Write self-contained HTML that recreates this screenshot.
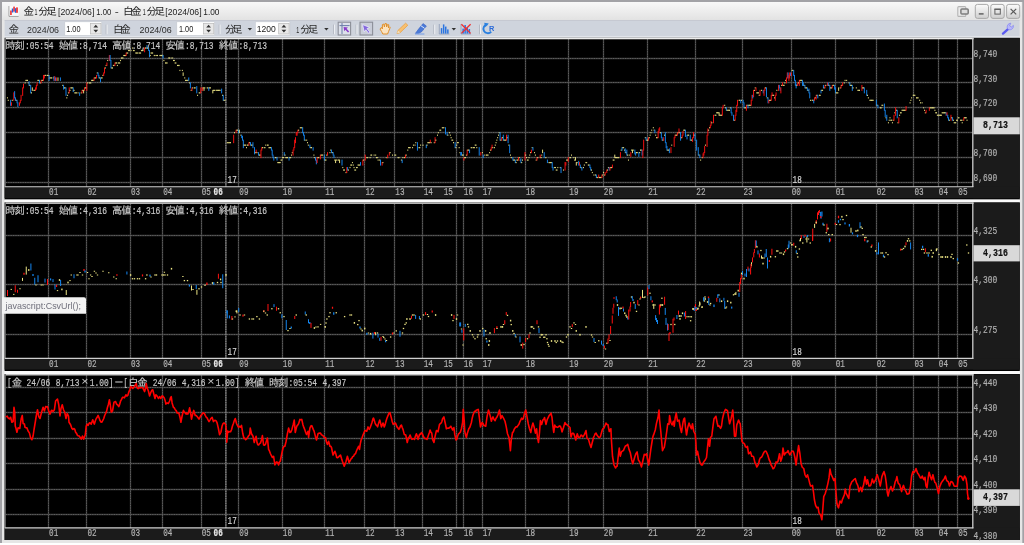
<!DOCTYPE html>
<html lang="ja"><head><meta charset="utf-8"><title>金1分足[2024/06]1.00 - 白金1分足[2024/06]1.00</title>
<style>html,body{margin:0;padding:0;background:#fff;overflow:hidden}svg{display:block;will-change:transform;filter:blur(0.32px)}text{white-space:pre}</style></head>
<body><svg width="1024" height="545" viewBox="0 0 1024 545">
<rect x="0" y="0" width="1024" height="545" fill="#ffffff"/>
<rect x="0" y="0" width="1024" height="543" fill="#a2a2a6"/>
<rect x="2" y="2" width="1020.3" height="541" fill="#e6e6e6"/>
<defs><linearGradient id="tg" x1="0" y1="0" x2="0" y2="1"><stop offset="0" stop-color="#f8f8f8"/><stop offset="1" stop-color="#e2e2e2"/></linearGradient><linearGradient id="bg" x1="0" y1="0" x2="0" y2="1"><stop offset="0" stop-color="#fbfbfb"/><stop offset="1" stop-color="#cecece"/></linearGradient></defs>
<rect x="2" y="2" width="1019.5" height="18.3" fill="url(#tg)"/>
<rect x="4.6" y="20.3" width="1015" height="16" fill="#cfd4dd"/>
<rect x="4.6" y="36.1" width="1015" height="2.3" fill="#e2e5ea"/>
<rect x="4.6" y="20.1" width="1015" height="0.8" fill="#c2c6ce"/>
<g><path d="M9 6 V16.3 H18.6" fill="none" stroke="#9a9a9a" stroke-width="1"/><rect x="9.6" y="6" width="9" height="9.8" fill="#fafafa"/><rect x="10.2" y="10.5" width="1.5" height="4.5" fill="#f02020"/><rect x="11.8" y="8.5" width="1.5" height="4" fill="#2060e0"/><rect x="13.3" y="6.6" width="1.5" height="5" fill="#f02020"/><rect x="14.8" y="8.2" width="1.4" height="4.6" fill="#2060e0"/><rect x="16.2" y="7.4" width="1.6" height="5.4" fill="#f02020"/></g>
<text x="23.6" y="14.8" font-size="10.6" fill="#1c1c1c" style="font-family:'Liberation Sans','IPAGothic',sans-serif" textLength="9.6" lengthAdjust="spacing">金</text>
<text x="34.6" y="14.8" font-size="9.8" fill="#1c1c1c" style="font-family:'Liberation Sans','IPAGothic',sans-serif" textLength="3" lengthAdjust="spacingAndGlyphs">1</text>
<text x="38.2" y="14.8" font-size="10.6" fill="#1c1c1c" style="font-family:'Liberation Sans','IPAGothic',sans-serif" textLength="18.6" lengthAdjust="spacing">分足</text>
<text x="58" y="14.8" font-size="9.8" fill="#1c1c1c" style="font-family:'Liberation Sans','IPAGothic',sans-serif" textLength="36.3" lengthAdjust="spacingAndGlyphs">[2024/06]</text>
<text x="96.3" y="14.8" font-size="9.8" fill="#1c1c1c" style="font-family:'Liberation Sans','IPAGothic',sans-serif" textLength="15" lengthAdjust="spacingAndGlyphs">1.00</text>
<text x="114.8" y="14.8" font-size="9.8" fill="#1c1c1c" style="font-family:'Liberation Sans','IPAGothic',sans-serif" textLength="4" lengthAdjust="spacingAndGlyphs">-</text>
<text x="123" y="14.8" font-size="10.6" fill="#1c1c1c" style="font-family:'Liberation Sans','IPAGothic',sans-serif" textLength="18.6" lengthAdjust="spacing">白金</text>
<text x="142.8" y="14.8" font-size="9.8" fill="#1c1c1c" style="font-family:'Liberation Sans','IPAGothic',sans-serif" textLength="3" lengthAdjust="spacingAndGlyphs">1</text>
<text x="146.4" y="14.8" font-size="10.6" fill="#1c1c1c" style="font-family:'Liberation Sans','IPAGothic',sans-serif" textLength="18.6" lengthAdjust="spacing">分足</text>
<text x="165.3" y="14.8" font-size="9.8" fill="#1c1c1c" style="font-family:'Liberation Sans','IPAGothic',sans-serif" textLength="36.3" lengthAdjust="spacingAndGlyphs">[2024/06]</text>
<text x="203.3" y="14.8" font-size="9.8" fill="#1c1c1c" style="font-family:'Liberation Sans','IPAGothic',sans-serif" textLength="16.2" lengthAdjust="spacingAndGlyphs">1.00</text>
<rect x="975.3" y="4.4" width="13.200000000000045" height="14" rx="2.2" fill="url(#bg)" stroke="#a8a8a8" stroke-width="1"/>
<rect x="990.8" y="4.4" width="13.400000000000091" height="14" rx="2.2" fill="url(#bg)" stroke="#a8a8a8" stroke-width="1"/>
<rect x="1006.6" y="4.4" width="13.100000000000023" height="14" rx="2.2" fill="url(#bg)" stroke="#a8a8a8" stroke-width="1"/>
<rect x="978.8" y="13.2" width="4.8" height="1.4" fill="#5a5a5a"/>
<rect x="994.9" y="9.3" width="5.4" height="4.8" fill="none" stroke="#606060" stroke-width="1"/><rect x="994.4" y="8.6" width="6.4" height="1.3" fill="#606060"/>
<path d="M1010.6 8.8 L1016.2 14.4 M1016.2 8.8 L1010.6 14.4" stroke="#585858" stroke-width="1.2" fill="none"/>
<rect x="957.8" y="6.6" width="8" height="9.8" rx="1" fill="#ececec" stroke="#b4b4b4" stroke-width="1.1"/>
<rect x="960.9" y="9.1" width="7.3" height="5" rx="1" fill="#dcdcdc" stroke="#7c7c7c" stroke-width="1.5"/>
<text x="8.4" y="32.5" font-size="10.6" fill="#2c2c2c" style="font-family:'Liberation Sans','IPAGothic',sans-serif" textLength="9.6" lengthAdjust="spacing">金</text>
<text x="27" y="32.5" font-size="9.8" fill="#2c2c2c" style="font-family:'Liberation Sans','IPAGothic',sans-serif" textLength="32" lengthAdjust="spacingAndGlyphs">2024/06</text>
<rect x="64.8" y="21.8" width="37.0" height="13.6" fill="#ffffff" stroke="#c4c8d0" stroke-width="0.6"/>
<text x="66.2" y="31.9" font-size="9.8" fill="#202020" style="font-family:'Liberation Sans','IPAGothic',sans-serif" textLength="14.3" lengthAdjust="spacingAndGlyphs">1.00</text>
<rect x="90.6" y="23.4" width="10.4" height="10.6" fill="#e8e8e8" stroke="#b8b8b8" stroke-width="0.7"/>
<path d="M93.39999999999999 27.6 L95.8 24.8 L98.2 27.6 Z M93.39999999999999 29.8 L95.8 32.6 L98.2 29.8 Z" fill="#303030"/>
<rect x="105.7" y="24.6" width="0.9" height="9.6" fill="#aeb3bd"/><rect x="106.6" y="24.6" width="0.9" height="9.6" fill="#f4f6f8"/>
<text x="113" y="32.5" font-size="10.6" fill="#2c2c2c" style="font-family:'Liberation Sans','IPAGothic',sans-serif" textLength="17.8" lengthAdjust="spacing">白金</text>
<text x="139.5" y="32.5" font-size="9.8" fill="#2c2c2c" style="font-family:'Liberation Sans','IPAGothic',sans-serif" textLength="32.2" lengthAdjust="spacingAndGlyphs">2024/06</text>
<rect x="176.8" y="21.8" width="37.79999999999998" height="13.6" fill="#ffffff" stroke="#c4c8d0" stroke-width="0.6"/>
<text x="179" y="31.9" font-size="9.8" fill="#202020" style="font-family:'Liberation Sans','IPAGothic',sans-serif" textLength="14.2" lengthAdjust="spacingAndGlyphs">1.00</text>
<rect x="203.4" y="23.4" width="10.4" height="10.6" fill="#e8e8e8" stroke="#b8b8b8" stroke-width="0.7"/>
<path d="M206.2 27.6 L208.6 24.8 L211.0 27.6 Z M206.2 29.8 L208.6 32.6 L211.0 29.8 Z" fill="#303030"/>
<rect x="218.70000000000002" y="24.6" width="0.9" height="9.6" fill="#aeb3bd"/><rect x="219.60000000000002" y="24.6" width="0.9" height="9.6" fill="#f4f6f8"/>
<text x="225" y="32.5" font-size="10.6" fill="#2c2c2c" style="font-family:'Liberation Sans','IPAGothic',sans-serif" textLength="17.6" lengthAdjust="spacing">分足</text>
<path d="M247.7 28 L252.1 28 L249.89999999999998 30.6 Z" fill="#303030"/>
<rect x="255.3" y="21.8" width="34.599999999999966" height="13.6" fill="#ffffff" stroke="#c4c8d0" stroke-width="0.6"/>
<text x="256.8" y="31.9" font-size="9.8" fill="#202020" style="font-family:'Liberation Sans','IPAGothic',sans-serif" textLength="19" lengthAdjust="spacingAndGlyphs">1200</text>
<rect x="278.7" y="23.4" width="10.4" height="10.6" fill="#e8e8e8" stroke="#b8b8b8" stroke-width="0.7"/>
<path d="M281.5 27.6 L283.9 24.8 L286.29999999999995 27.6 Z M281.5 29.8 L283.9 32.6 L286.29999999999995 29.8 Z" fill="#303030"/>
<text x="296.2" y="32.5" font-size="9.8" fill="#2c2c2c" style="font-family:'Liberation Sans','IPAGothic',sans-serif" textLength="3" lengthAdjust="spacingAndGlyphs">1</text>
<text x="300.3" y="32.5" font-size="10.6" fill="#2c2c2c" style="font-family:'Liberation Sans','IPAGothic',sans-serif" textLength="18" lengthAdjust="spacing">分足</text>
<path d="M324.2 28 L328.59999999999997 28 L326.4 30.6 Z" fill="#303030"/>
<rect x="333.0" y="24.6" width="0.9" height="9.6" fill="#aeb3bd"/><rect x="333.90000000000003" y="24.6" width="0.9" height="9.6" fill="#f4f6f8"/>
<rect x="338.2" y="22.2" width="12.4" height="12.8" fill="#dde1ea" stroke="#8c8f98" stroke-width="1.1"/>
<path d="M339.5 25.6 H349.6 M342 23 V34" stroke="#6a7ca8" stroke-width="1" fill="none"/>
<path d="M343.6 27 L348 27.6 L346.6 28.8 L349.2 31.6 L348 32.6 L345.4 29.8 L344.2 31.2 Z" fill="#8a3cc8"/>
<rect x="355.59999999999997" y="24.6" width="0.9" height="9.6" fill="#aeb3bd"/><rect x="356.5" y="24.6" width="0.9" height="9.6" fill="#f4f6f8"/>
<rect x="360" y="22.2" width="12.6" height="12.8" fill="#c9cdd8" stroke="#8c8f98" stroke-width="1.1"/>
<path d="M362.6 24.6 L369.6 27.4 L367 28.6 L370 32.2 L368.6 33.2 L365.8 29.8 L364.2 31.8 Z" fill="#8468dc" stroke="#f0f0ff" stroke-width="0.7"/>
<path d="M380 29 L381.4 27.4 L382.4 29 L382.4 24.6 L383.8 24 L384.4 27 L385 23.6 L386.4 23.6 L386.6 27 L387.6 24.4 L388.8 24.8 L388.4 28 L389.6 26.8 L390.2 27.6 L388.6 31.4 L387.6 34 L382.8 34 L381.6 31.6 Z" fill="#fbe3c0" stroke="#e0902c" stroke-width="1"/>
<path d="M397 33.6 L398 30.4 L405.6 23.2 L407.8 25.2 L400.2 32.6 Z" fill="#f8c070" stroke="#e8a040" stroke-width="0.8"/><path d="M397 33.6 L398 30.4 L400.2 32.6 Z" fill="#f0e0c0"/>
<path d="M415.4 33.4 L418.2 29.6 L423 23.6 L426.4 26 L421.8 31.6 L418.6 33.6 Z" fill="#4a7ad8" stroke="#3a62c0" stroke-width="0.6"/><path d="M415 34 H424.4" stroke="#7aa0e8" stroke-width="1.1"/><path d="M421 25.8 L424.6 28.4" stroke="#dfe8fa" stroke-width="1"/>
<rect x="433.4" y="24.6" width="0.9" height="9.6" fill="#aeb3bd"/><rect x="434.3" y="24.6" width="0.9" height="9.6" fill="#f4f6f8"/>
<path d="M439.3 24 V34 H449.4" stroke="#8a9ab8" stroke-width="0.8" fill="none"/>
<rect x="440.8" y="28.1" width="1.5" height="5.5" fill="#2a74e0"/>
<rect x="442.9" y="24.400000000000002" width="1.5" height="9.2" fill="#2a74e0"/>
<rect x="445" y="26.6" width="1.5" height="7" fill="#2a74e0"/>
<rect x="447.1" y="29.400000000000002" width="1.5" height="4.2" fill="#2a74e0"/>
<path d="M451.6 28 L456.0 28 L453.8 30.6 Z" fill="#303030"/>
<path d="M461 24 V34 H471" stroke="#8a9ab8" stroke-width="0.8" fill="none"/>
<rect x="462.4" y="28.6" width="1.5" height="5" fill="#2a74e0"/>
<rect x="464.4" y="25.0" width="1.5" height="8.6" fill="#2a74e0"/>
<rect x="466.5" y="27.0" width="1.5" height="6.6" fill="#2a74e0"/>
<rect x="468.6" y="29.0" width="1.5" height="4.6" fill="#2a74e0"/>
<path d="M461.4 24.2 L470.6 33.4 M470.6 24.2 L461.4 33.4" stroke="#f03030" stroke-width="1.3" fill="none"/>
<rect x="479.2" y="24.6" width="0.9" height="9.6" fill="#aeb3bd"/><rect x="480.1" y="24.6" width="0.9" height="9.6" fill="#f4f6f8"/>
<path d="M491.2 31.6 A4.4 4.4 0 1 1 487.4 24.4" fill="none" stroke="#2a80e0" stroke-width="1.9"/><path d="M484.2 22.8 L488.8 23.6 L485.4 27.2 Z" fill="#2a80e0"/>
<text x="489" y="31.4" font-size="7.4" font-weight="bold" fill="#2a6ad8" style="font-family:'Liberation Sans','IPAGothic',sans-serif">R</text>
<path d="M1003 33.6 L1008.6 28.6" stroke="#5a5af0" stroke-width="2.4" stroke-linecap="round" fill="none"/><path d="M1007.6 28.8 C1006.4 26 1008 23.4 1010.8 23.2 L1009.6 25.8 L1011.4 27 L1013.4 25.4 C1013.8 28.4 1011.2 30.4 1008.6 29.6 Z" fill="#b8b8fa" stroke="#8080f0" stroke-width="0.7"/>
<rect x="4.6" y="37.8" width="1015.1999999999999" height="161.79999999999998" fill="#000"/>
<rect x="973.2" y="38.099999999999994" width="46.59999999999991" height="160.09999999999997" fill="#1b1b1b"/>
<rect x="4.6" y="186.7" width="1015.1999999999999" height="11.5" fill="#1b1b1b"/>
<path d="M48.5 39.199999999999996 V186.7 M86.5 39.199999999999996 V186.7 M130.5 39.199999999999996 V186.7 M162.5 39.199999999999996 V186.7 M201.5 39.199999999999996 V186.7 M238.5 39.199999999999996 V186.7 M282.5 39.199999999999996 V186.7 M324.5 39.199999999999996 V186.7 M364.5 39.199999999999996 V186.7 M394.5 39.199999999999996 V186.7 M422.5 39.199999999999996 V186.7 M456.5 39.199999999999996 V186.7 M463.5 39.199999999999996 V186.7 M482.5 39.199999999999996 V186.7 M525.5 39.199999999999996 V186.7 M568.5 39.199999999999996 V186.7 M603.5 39.199999999999996 V186.7 M647.5 39.199999999999996 V186.7 M695.5 39.199999999999996 V186.7 M742.5 39.199999999999996 V186.7 M791.5 39.199999999999996 V186.7 M835.5 39.199999999999996 V186.7 M876.5 39.199999999999996 V186.7 M913.5 39.199999999999996 V186.7 M938.5 39.199999999999996 V186.7 M957.5 39.199999999999996 V186.7 M5.8 58.5 H972.6 M5.8 82.5 H972.6 M5.8 107.5 H972.6 M5.8 132.5 H972.6 M5.8 157.5 H972.6 M5.8 182.5 H972.6" stroke="#3c3c3c" stroke-width="1.35" fill="none"/>
<path d="M48.5 39.199999999999996 V186.7 M86.5 39.199999999999996 V186.7 M130.5 39.199999999999996 V186.7 M162.5 39.199999999999996 V186.7 M201.5 39.199999999999996 V186.7 M238.5 39.199999999999996 V186.7 M282.5 39.199999999999996 V186.7 M324.5 39.199999999999996 V186.7 M364.5 39.199999999999996 V186.7 M394.5 39.199999999999996 V186.7 M422.5 39.199999999999996 V186.7 M456.5 39.199999999999996 V186.7 M463.5 39.199999999999996 V186.7 M482.5 39.199999999999996 V186.7 M525.5 39.199999999999996 V186.7 M568.5 39.199999999999996 V186.7 M603.5 39.199999999999996 V186.7 M647.5 39.199999999999996 V186.7 M695.5 39.199999999999996 V186.7 M742.5 39.199999999999996 V186.7 M791.5 39.199999999999996 V186.7 M835.5 39.199999999999996 V186.7 M876.5 39.199999999999996 V186.7 M913.5 39.199999999999996 V186.7 M938.5 39.199999999999996 V186.7 M957.5 39.199999999999996 V186.7 M5.8 58.5 H972.6 M5.8 82.5 H972.6 M5.8 107.5 H972.6 M5.8 132.5 H972.6 M5.8 157.5 H972.6 M5.8 182.5 H972.6" stroke="#5e5e5e" stroke-width="1" stroke-dasharray="1.2 1.2" fill="none"/>
<path d="M225.9 39.199999999999996 V186.7" stroke="#4a4a4a" stroke-width="1.3" fill="none"/>
<path d="M225.9 39.199999999999996 V186.7" stroke="#9a9a9a" stroke-width="1" stroke-dasharray="1.6 0.8" fill="none"/>
<rect x="4.8" y="37.8" width="968.8000000000001" height="1.5" fill="#ececec"/>
<rect x="4.8" y="37.8" width="1.1" height="148.89999999999998" fill="#6a6a6a"/>
<path d="M972.8000000000001 37.8 V187.1" stroke="#cfcfcf" stroke-width="1.3" fill="none"/>
<path d="M4.8 186.7 H973.4000000000001" stroke="#cfcfcf" stroke-width="1.1" fill="none"/>
<text x="49.10" y="195.0" font-size="11.3" fill="#b4b4b4" stroke="#b4b4b4" stroke-width="0.2" style="font-family:'Liberation Mono','IPAGothic',monospace" textLength="9.20" lengthAdjust="spacingAndGlyphs">01</text>
<text x="87.50" y="195.0" font-size="11.3" fill="#b4b4b4" stroke="#b4b4b4" stroke-width="0.2" style="font-family:'Liberation Mono','IPAGothic',monospace" textLength="9.20" lengthAdjust="spacingAndGlyphs">02</text>
<text x="131.00" y="195.0" font-size="11.3" fill="#b4b4b4" stroke="#b4b4b4" stroke-width="0.2" style="font-family:'Liberation Mono','IPAGothic',monospace" textLength="9.20" lengthAdjust="spacingAndGlyphs">03</text>
<text x="163.20" y="195.0" font-size="11.3" fill="#b4b4b4" stroke="#b4b4b4" stroke-width="0.2" style="font-family:'Liberation Mono','IPAGothic',monospace" textLength="9.20" lengthAdjust="spacingAndGlyphs">04</text>
<text x="201.70" y="195.0" font-size="11.3" fill="#b4b4b4" stroke="#b4b4b4" stroke-width="0.2" style="font-family:'Liberation Mono','IPAGothic',monospace" textLength="9.20" lengthAdjust="spacingAndGlyphs">05</text>
<text x="239.30" y="195.0" font-size="11.3" fill="#b4b4b4" stroke="#b4b4b4" stroke-width="0.2" style="font-family:'Liberation Mono','IPAGothic',monospace" textLength="9.20" lengthAdjust="spacingAndGlyphs">09</text>
<text x="282.80" y="195.0" font-size="11.3" fill="#b4b4b4" stroke="#b4b4b4" stroke-width="0.2" style="font-family:'Liberation Mono','IPAGothic',monospace" textLength="9.20" lengthAdjust="spacingAndGlyphs">10</text>
<text x="325.20" y="195.0" font-size="11.3" fill="#b4b4b4" stroke="#b4b4b4" stroke-width="0.2" style="font-family:'Liberation Mono','IPAGothic',monospace" textLength="9.20" lengthAdjust="spacingAndGlyphs">11</text>
<text x="365.50" y="195.0" font-size="11.3" fill="#b4b4b4" stroke="#b4b4b4" stroke-width="0.2" style="font-family:'Liberation Mono','IPAGothic',monospace" textLength="9.20" lengthAdjust="spacingAndGlyphs">12</text>
<text x="395.30" y="195.0" font-size="11.3" fill="#b4b4b4" stroke="#b4b4b4" stroke-width="0.2" style="font-family:'Liberation Mono','IPAGothic',monospace" textLength="9.20" lengthAdjust="spacingAndGlyphs">13</text>
<text x="423.70" y="195.0" font-size="11.3" fill="#b4b4b4" stroke="#b4b4b4" stroke-width="0.2" style="font-family:'Liberation Mono','IPAGothic',monospace" textLength="9.20" lengthAdjust="spacingAndGlyphs">14</text>
<text x="443.70" y="195.0" font-size="11.3" fill="#b4b4b4" stroke="#b4b4b4" stroke-width="0.2" style="font-family:'Liberation Mono','IPAGothic',monospace" textLength="9.20" lengthAdjust="spacingAndGlyphs">15</text>
<text x="463.80" y="195.0" font-size="11.3" fill="#b4b4b4" stroke="#b4b4b4" stroke-width="0.2" style="font-family:'Liberation Mono','IPAGothic',monospace" textLength="9.20" lengthAdjust="spacingAndGlyphs">16</text>
<text x="482.70" y="195.0" font-size="11.3" fill="#b4b4b4" stroke="#b4b4b4" stroke-width="0.2" style="font-family:'Liberation Mono','IPAGothic',monospace" textLength="9.20" lengthAdjust="spacingAndGlyphs">17</text>
<text x="525.90" y="195.0" font-size="11.3" fill="#b4b4b4" stroke="#b4b4b4" stroke-width="0.2" style="font-family:'Liberation Mono','IPAGothic',monospace" textLength="9.20" lengthAdjust="spacingAndGlyphs">18</text>
<text x="569.30" y="195.0" font-size="11.3" fill="#b4b4b4" stroke="#b4b4b4" stroke-width="0.2" style="font-family:'Liberation Mono','IPAGothic',monospace" textLength="9.20" lengthAdjust="spacingAndGlyphs">19</text>
<text x="603.80" y="195.0" font-size="11.3" fill="#b4b4b4" stroke="#b4b4b4" stroke-width="0.2" style="font-family:'Liberation Mono','IPAGothic',monospace" textLength="9.20" lengthAdjust="spacingAndGlyphs">20</text>
<text x="648.30" y="195.0" font-size="11.3" fill="#b4b4b4" stroke="#b4b4b4" stroke-width="0.2" style="font-family:'Liberation Mono','IPAGothic',monospace" textLength="9.20" lengthAdjust="spacingAndGlyphs">21</text>
<text x="696.30" y="195.0" font-size="11.3" fill="#b4b4b4" stroke="#b4b4b4" stroke-width="0.2" style="font-family:'Liberation Mono','IPAGothic',monospace" textLength="9.20" lengthAdjust="spacingAndGlyphs">22</text>
<text x="743.50" y="195.0" font-size="11.3" fill="#b4b4b4" stroke="#b4b4b4" stroke-width="0.2" style="font-family:'Liberation Mono','IPAGothic',monospace" textLength="9.20" lengthAdjust="spacingAndGlyphs">23</text>
<text x="791.70" y="195.0" font-size="11.3" fill="#b4b4b4" stroke="#b4b4b4" stroke-width="0.2" style="font-family:'Liberation Mono','IPAGothic',monospace" textLength="9.20" lengthAdjust="spacingAndGlyphs">00</text>
<text x="835.70" y="195.0" font-size="11.3" fill="#b4b4b4" stroke="#b4b4b4" stroke-width="0.2" style="font-family:'Liberation Mono','IPAGothic',monospace" textLength="9.20" lengthAdjust="spacingAndGlyphs">01</text>
<text x="876.70" y="195.0" font-size="11.3" fill="#b4b4b4" stroke="#b4b4b4" stroke-width="0.2" style="font-family:'Liberation Mono','IPAGothic',monospace" textLength="9.20" lengthAdjust="spacingAndGlyphs">02</text>
<text x="914.50" y="195.0" font-size="11.3" fill="#b4b4b4" stroke="#b4b4b4" stroke-width="0.2" style="font-family:'Liberation Mono','IPAGothic',monospace" textLength="9.20" lengthAdjust="spacingAndGlyphs">03</text>
<text x="938.80" y="195.0" font-size="11.3" fill="#b4b4b4" stroke="#b4b4b4" stroke-width="0.2" style="font-family:'Liberation Mono','IPAGothic',monospace" textLength="9.20" lengthAdjust="spacingAndGlyphs">04</text>
<text x="958.30" y="195.0" font-size="11.3" fill="#b4b4b4" stroke="#b4b4b4" stroke-width="0.2" style="font-family:'Liberation Mono','IPAGothic',monospace" textLength="9.20" lengthAdjust="spacingAndGlyphs">05</text>
<text x="213.60" y="195.0" font-size="11.3" fill="#e8e8e8" stroke="#e8e8e8" stroke-width="0.2" font-weight="bold" style="font-family:'Liberation Mono','IPAGothic',monospace" textLength="9.20" lengthAdjust="spacingAndGlyphs">06</text>
<text x="227.60" y="182.9" font-size="11.3" fill="#d8d8d8" stroke="#d8d8d8" stroke-width="0.2" style="font-family:'Liberation Mono','IPAGothic',monospace" textLength="9.20" lengthAdjust="spacingAndGlyphs">17</text>
<text x="792.60" y="182.9" font-size="11.3" fill="#d8d8d8" stroke="#d8d8d8" stroke-width="0.2" style="font-family:'Liberation Mono','IPAGothic',monospace" textLength="9.20" lengthAdjust="spacingAndGlyphs">18</text>
<text x="973.60" y="56.6" font-size="11.3" fill="#b0b0b0" stroke="#b0b0b0" stroke-width="0.2" style="font-family:'Liberation Mono','IPAGothic',monospace" textLength="23.75" lengthAdjust="spacingAndGlyphs">8,740</text>
<text x="973.60" y="81.5" font-size="11.3" fill="#b0b0b0" stroke="#b0b0b0" stroke-width="0.2" style="font-family:'Liberation Mono','IPAGothic',monospace" textLength="23.75" lengthAdjust="spacingAndGlyphs">8,730</text>
<text x="973.60" y="106.39999999999999" font-size="11.3" fill="#b0b0b0" stroke="#b0b0b0" stroke-width="0.2" style="font-family:'Liberation Mono','IPAGothic',monospace" textLength="23.75" lengthAdjust="spacingAndGlyphs">8,720</text>
<text x="973.60" y="156.2" font-size="11.3" fill="#b0b0b0" stroke="#b0b0b0" stroke-width="0.2" style="font-family:'Liberation Mono','IPAGothic',monospace" textLength="23.75" lengthAdjust="spacingAndGlyphs">8,700</text>
<text x="973.60" y="181.1" font-size="11.3" fill="#b0b0b0" stroke="#b0b0b0" stroke-width="0.2" style="font-family:'Liberation Mono','IPAGothic',monospace" textLength="23.75" lengthAdjust="spacingAndGlyphs">8,690</text>
<rect x="973.5" y="117.3" width="46.29999999999991" height="17.000000000000014" fill="#d9d9d9"/>
<text x="983.10" y="127.89999999999999" font-size="10.8" fill="#101010" stroke="#101010" stroke-width="0.2" font-weight="bold" style="font-family:'Liberation Mono','IPAGothic',monospace" textLength="24.75" lengthAdjust="spacingAndGlyphs">8,713</text>
<text x="5.40" y="48.699999999999996" font-size="10.3" fill="#c8c8c8" stroke="#c8c8c8" stroke-width="0.15" style="font-family:'Liberation Mono','IPAGothic',monospace" textLength="19.40" lengthAdjust="spacing">時刻</text>
<text x="25.00" y="48.9" font-size="11.3" fill="#c8c8c8" stroke="#c8c8c8" stroke-width="0.2" style="font-family:'Liberation Mono','IPAGothic',monospace" textLength="28.60" lengthAdjust="spacingAndGlyphs">:05:54</text>
<text x="58.75" y="48.699999999999996" font-size="10.3" fill="#c8c8c8" stroke="#c8c8c8" stroke-width="0.15" style="font-family:'Liberation Mono','IPAGothic',monospace" textLength="19.40" lengthAdjust="spacing">始値</text>
<text x="78.35" y="48.9" font-size="11.3" fill="#c8c8c8" stroke="#c8c8c8" stroke-width="0.2" style="font-family:'Liberation Mono','IPAGothic',monospace" textLength="28.60" lengthAdjust="spacingAndGlyphs">:8,714</text>
<text x="112.10" y="48.699999999999996" font-size="10.3" fill="#c8c8c8" stroke="#c8c8c8" stroke-width="0.15" style="font-family:'Liberation Mono','IPAGothic',monospace" textLength="19.40" lengthAdjust="spacing">高値</text>
<text x="131.70" y="48.9" font-size="11.3" fill="#c8c8c8" stroke="#c8c8c8" stroke-width="0.2" style="font-family:'Liberation Mono','IPAGothic',monospace" textLength="28.60" lengthAdjust="spacingAndGlyphs">:8,714</text>
<text x="165.45" y="48.699999999999996" font-size="10.3" fill="#c8c8c8" stroke="#c8c8c8" stroke-width="0.15" style="font-family:'Liberation Mono','IPAGothic',monospace" textLength="19.40" lengthAdjust="spacing">安値</text>
<text x="185.05" y="48.9" font-size="11.3" fill="#c8c8c8" stroke="#c8c8c8" stroke-width="0.2" style="font-family:'Liberation Mono','IPAGothic',monospace" textLength="28.60" lengthAdjust="spacingAndGlyphs">:8,713</text>
<text x="218.80" y="48.699999999999996" font-size="10.3" fill="#c8c8c8" stroke="#c8c8c8" stroke-width="0.15" style="font-family:'Liberation Mono','IPAGothic',monospace" textLength="19.40" lengthAdjust="spacing">終値</text>
<text x="238.40" y="48.9" font-size="11.3" fill="#c8c8c8" stroke="#c8c8c8" stroke-width="0.2" style="font-family:'Liberation Mono','IPAGothic',monospace" textLength="28.60" lengthAdjust="spacingAndGlyphs">:8,713</text>
<rect x="4.6" y="199.5" width="1015.2" height="2.9" fill="#fafafa"/>
<rect x="4.6" y="202.4" width="1015.1999999999999" height="168.60000000000002" fill="#000"/>
<rect x="973.2" y="202.70000000000002" width="46.59999999999991" height="166.9" fill="#1b1b1b"/>
<rect x="4.6" y="358.4" width="1015.1999999999999" height="11.200000000000045" fill="#1b1b1b"/>
<path d="M48.5 203.8 V358.4 M86.5 203.8 V358.4 M130.5 203.8 V358.4 M162.5 203.8 V358.4 M201.5 203.8 V358.4 M238.5 203.8 V358.4 M282.5 203.8 V358.4 M324.5 203.8 V358.4 M364.5 203.8 V358.4 M394.5 203.8 V358.4 M422.5 203.8 V358.4 M456.5 203.8 V358.4 M463.5 203.8 V358.4 M482.5 203.8 V358.4 M525.5 203.8 V358.4 M568.5 203.8 V358.4 M603.5 203.8 V358.4 M647.5 203.8 V358.4 M695.5 203.8 V358.4 M742.5 203.8 V358.4 M791.5 203.8 V358.4 M835.5 203.8 V358.4 M876.5 203.8 V358.4 M913.5 203.8 V358.4 M938.5 203.8 V358.4 M957.5 203.8 V358.4 M5.8 235.5 H972.6 M5.8 284.5 H972.6 M5.8 334.5 H972.6" stroke="#3c3c3c" stroke-width="1.35" fill="none"/>
<path d="M48.5 203.8 V358.4 M86.5 203.8 V358.4 M130.5 203.8 V358.4 M162.5 203.8 V358.4 M201.5 203.8 V358.4 M238.5 203.8 V358.4 M282.5 203.8 V358.4 M324.5 203.8 V358.4 M364.5 203.8 V358.4 M394.5 203.8 V358.4 M422.5 203.8 V358.4 M456.5 203.8 V358.4 M463.5 203.8 V358.4 M482.5 203.8 V358.4 M525.5 203.8 V358.4 M568.5 203.8 V358.4 M603.5 203.8 V358.4 M647.5 203.8 V358.4 M695.5 203.8 V358.4 M742.5 203.8 V358.4 M791.5 203.8 V358.4 M835.5 203.8 V358.4 M876.5 203.8 V358.4 M913.5 203.8 V358.4 M938.5 203.8 V358.4 M957.5 203.8 V358.4 M5.8 235.5 H972.6 M5.8 284.5 H972.6 M5.8 334.5 H972.6" stroke="#5e5e5e" stroke-width="1" stroke-dasharray="1.2 1.2" fill="none"/>
<path d="M225.9 203.8 V358.4" stroke="#4a4a4a" stroke-width="1.3" fill="none"/>
<path d="M225.9 203.8 V358.4" stroke="#9a9a9a" stroke-width="1" stroke-dasharray="1.6 0.8" fill="none"/>
<rect x="4.8" y="202.4" width="968.8000000000001" height="1.5" fill="#c6c6c6"/>
<rect x="4.8" y="202.4" width="1.1" height="155.99999999999997" fill="#6a6a6a"/>
<path d="M972.8000000000001 202.4 V358.79999999999995" stroke="#cfcfcf" stroke-width="1.3" fill="none"/>
<path d="M4.8 358.4 H973.4000000000001" stroke="#cfcfcf" stroke-width="1.1" fill="none"/>
<text x="49.10" y="366.7" font-size="11.3" fill="#b4b4b4" stroke="#b4b4b4" stroke-width="0.2" style="font-family:'Liberation Mono','IPAGothic',monospace" textLength="9.20" lengthAdjust="spacingAndGlyphs">01</text>
<text x="87.50" y="366.7" font-size="11.3" fill="#b4b4b4" stroke="#b4b4b4" stroke-width="0.2" style="font-family:'Liberation Mono','IPAGothic',monospace" textLength="9.20" lengthAdjust="spacingAndGlyphs">02</text>
<text x="131.00" y="366.7" font-size="11.3" fill="#b4b4b4" stroke="#b4b4b4" stroke-width="0.2" style="font-family:'Liberation Mono','IPAGothic',monospace" textLength="9.20" lengthAdjust="spacingAndGlyphs">03</text>
<text x="163.20" y="366.7" font-size="11.3" fill="#b4b4b4" stroke="#b4b4b4" stroke-width="0.2" style="font-family:'Liberation Mono','IPAGothic',monospace" textLength="9.20" lengthAdjust="spacingAndGlyphs">04</text>
<text x="201.70" y="366.7" font-size="11.3" fill="#b4b4b4" stroke="#b4b4b4" stroke-width="0.2" style="font-family:'Liberation Mono','IPAGothic',monospace" textLength="9.20" lengthAdjust="spacingAndGlyphs">05</text>
<text x="239.30" y="366.7" font-size="11.3" fill="#b4b4b4" stroke="#b4b4b4" stroke-width="0.2" style="font-family:'Liberation Mono','IPAGothic',monospace" textLength="9.20" lengthAdjust="spacingAndGlyphs">09</text>
<text x="282.80" y="366.7" font-size="11.3" fill="#b4b4b4" stroke="#b4b4b4" stroke-width="0.2" style="font-family:'Liberation Mono','IPAGothic',monospace" textLength="9.20" lengthAdjust="spacingAndGlyphs">10</text>
<text x="325.20" y="366.7" font-size="11.3" fill="#b4b4b4" stroke="#b4b4b4" stroke-width="0.2" style="font-family:'Liberation Mono','IPAGothic',monospace" textLength="9.20" lengthAdjust="spacingAndGlyphs">11</text>
<text x="365.50" y="366.7" font-size="11.3" fill="#b4b4b4" stroke="#b4b4b4" stroke-width="0.2" style="font-family:'Liberation Mono','IPAGothic',monospace" textLength="9.20" lengthAdjust="spacingAndGlyphs">12</text>
<text x="395.30" y="366.7" font-size="11.3" fill="#b4b4b4" stroke="#b4b4b4" stroke-width="0.2" style="font-family:'Liberation Mono','IPAGothic',monospace" textLength="9.20" lengthAdjust="spacingAndGlyphs">13</text>
<text x="423.70" y="366.7" font-size="11.3" fill="#b4b4b4" stroke="#b4b4b4" stroke-width="0.2" style="font-family:'Liberation Mono','IPAGothic',monospace" textLength="9.20" lengthAdjust="spacingAndGlyphs">14</text>
<text x="443.70" y="366.7" font-size="11.3" fill="#b4b4b4" stroke="#b4b4b4" stroke-width="0.2" style="font-family:'Liberation Mono','IPAGothic',monospace" textLength="9.20" lengthAdjust="spacingAndGlyphs">15</text>
<text x="463.80" y="366.7" font-size="11.3" fill="#b4b4b4" stroke="#b4b4b4" stroke-width="0.2" style="font-family:'Liberation Mono','IPAGothic',monospace" textLength="9.20" lengthAdjust="spacingAndGlyphs">16</text>
<text x="482.70" y="366.7" font-size="11.3" fill="#b4b4b4" stroke="#b4b4b4" stroke-width="0.2" style="font-family:'Liberation Mono','IPAGothic',monospace" textLength="9.20" lengthAdjust="spacingAndGlyphs">17</text>
<text x="525.90" y="366.7" font-size="11.3" fill="#b4b4b4" stroke="#b4b4b4" stroke-width="0.2" style="font-family:'Liberation Mono','IPAGothic',monospace" textLength="9.20" lengthAdjust="spacingAndGlyphs">18</text>
<text x="569.30" y="366.7" font-size="11.3" fill="#b4b4b4" stroke="#b4b4b4" stroke-width="0.2" style="font-family:'Liberation Mono','IPAGothic',monospace" textLength="9.20" lengthAdjust="spacingAndGlyphs">19</text>
<text x="603.80" y="366.7" font-size="11.3" fill="#b4b4b4" stroke="#b4b4b4" stroke-width="0.2" style="font-family:'Liberation Mono','IPAGothic',monospace" textLength="9.20" lengthAdjust="spacingAndGlyphs">20</text>
<text x="648.30" y="366.7" font-size="11.3" fill="#b4b4b4" stroke="#b4b4b4" stroke-width="0.2" style="font-family:'Liberation Mono','IPAGothic',monospace" textLength="9.20" lengthAdjust="spacingAndGlyphs">21</text>
<text x="696.30" y="366.7" font-size="11.3" fill="#b4b4b4" stroke="#b4b4b4" stroke-width="0.2" style="font-family:'Liberation Mono','IPAGothic',monospace" textLength="9.20" lengthAdjust="spacingAndGlyphs">22</text>
<text x="743.50" y="366.7" font-size="11.3" fill="#b4b4b4" stroke="#b4b4b4" stroke-width="0.2" style="font-family:'Liberation Mono','IPAGothic',monospace" textLength="9.20" lengthAdjust="spacingAndGlyphs">23</text>
<text x="791.70" y="366.7" font-size="11.3" fill="#b4b4b4" stroke="#b4b4b4" stroke-width="0.2" style="font-family:'Liberation Mono','IPAGothic',monospace" textLength="9.20" lengthAdjust="spacingAndGlyphs">00</text>
<text x="835.70" y="366.7" font-size="11.3" fill="#b4b4b4" stroke="#b4b4b4" stroke-width="0.2" style="font-family:'Liberation Mono','IPAGothic',monospace" textLength="9.20" lengthAdjust="spacingAndGlyphs">01</text>
<text x="876.70" y="366.7" font-size="11.3" fill="#b4b4b4" stroke="#b4b4b4" stroke-width="0.2" style="font-family:'Liberation Mono','IPAGothic',monospace" textLength="9.20" lengthAdjust="spacingAndGlyphs">02</text>
<text x="914.50" y="366.7" font-size="11.3" fill="#b4b4b4" stroke="#b4b4b4" stroke-width="0.2" style="font-family:'Liberation Mono','IPAGothic',monospace" textLength="9.20" lengthAdjust="spacingAndGlyphs">03</text>
<text x="938.80" y="366.7" font-size="11.3" fill="#b4b4b4" stroke="#b4b4b4" stroke-width="0.2" style="font-family:'Liberation Mono','IPAGothic',monospace" textLength="9.20" lengthAdjust="spacingAndGlyphs">04</text>
<text x="958.30" y="366.7" font-size="11.3" fill="#b4b4b4" stroke="#b4b4b4" stroke-width="0.2" style="font-family:'Liberation Mono','IPAGothic',monospace" textLength="9.20" lengthAdjust="spacingAndGlyphs">05</text>
<text x="213.60" y="366.7" font-size="11.3" fill="#e8e8e8" stroke="#e8e8e8" stroke-width="0.2" font-weight="bold" style="font-family:'Liberation Mono','IPAGothic',monospace" textLength="9.20" lengthAdjust="spacingAndGlyphs">06</text>
<text x="227.60" y="354.5" font-size="11.3" fill="#d8d8d8" stroke="#d8d8d8" stroke-width="0.2" style="font-family:'Liberation Mono','IPAGothic',monospace" textLength="9.20" lengthAdjust="spacingAndGlyphs">17</text>
<text x="792.60" y="354.5" font-size="11.3" fill="#d8d8d8" stroke="#d8d8d8" stroke-width="0.2" style="font-family:'Liberation Mono','IPAGothic',monospace" textLength="9.20" lengthAdjust="spacingAndGlyphs">18</text>
<text x="973.60" y="233.6" font-size="11.3" fill="#b0b0b0" stroke="#b0b0b0" stroke-width="0.2" style="font-family:'Liberation Mono','IPAGothic',monospace" textLength="23.75" lengthAdjust="spacingAndGlyphs">4,325</text>
<text x="973.60" y="283.20000000000005" font-size="11.3" fill="#b0b0b0" stroke="#b0b0b0" stroke-width="0.2" style="font-family:'Liberation Mono','IPAGothic',monospace" textLength="23.75" lengthAdjust="spacingAndGlyphs">4,300</text>
<text x="973.60" y="333.3" font-size="11.3" fill="#b0b0b0" stroke="#b0b0b0" stroke-width="0.2" style="font-family:'Liberation Mono','IPAGothic',monospace" textLength="23.75" lengthAdjust="spacingAndGlyphs">4,275</text>
<rect x="973.5" y="245.2" width="46.29999999999991" height="16.19999999999999" fill="#d9d9d9"/>
<text x="983.10" y="255.79999999999998" font-size="10.8" fill="#101010" stroke="#101010" stroke-width="0.2" font-weight="bold" style="font-family:'Liberation Mono','IPAGothic',monospace" textLength="24.75" lengthAdjust="spacingAndGlyphs">4,316</text>
<text x="5.40" y="213.9" font-size="10.3" fill="#c8c8c8" stroke="#c8c8c8" stroke-width="0.15" style="font-family:'Liberation Mono','IPAGothic',monospace" textLength="19.40" lengthAdjust="spacing">時刻</text>
<text x="25.00" y="214.1" font-size="11.3" fill="#c8c8c8" stroke="#c8c8c8" stroke-width="0.2" style="font-family:'Liberation Mono','IPAGothic',monospace" textLength="28.60" lengthAdjust="spacingAndGlyphs">:05:54</text>
<text x="58.75" y="213.9" font-size="10.3" fill="#c8c8c8" stroke="#c8c8c8" stroke-width="0.15" style="font-family:'Liberation Mono','IPAGothic',monospace" textLength="19.40" lengthAdjust="spacing">始値</text>
<text x="78.35" y="214.1" font-size="11.3" fill="#c8c8c8" stroke="#c8c8c8" stroke-width="0.2" style="font-family:'Liberation Mono','IPAGothic',monospace" textLength="28.60" lengthAdjust="spacingAndGlyphs">:4,316</text>
<text x="112.10" y="213.9" font-size="10.3" fill="#c8c8c8" stroke="#c8c8c8" stroke-width="0.15" style="font-family:'Liberation Mono','IPAGothic',monospace" textLength="19.40" lengthAdjust="spacing">高値</text>
<text x="131.70" y="214.1" font-size="11.3" fill="#c8c8c8" stroke="#c8c8c8" stroke-width="0.2" style="font-family:'Liberation Mono','IPAGothic',monospace" textLength="28.60" lengthAdjust="spacingAndGlyphs">:4,316</text>
<text x="165.45" y="213.9" font-size="10.3" fill="#c8c8c8" stroke="#c8c8c8" stroke-width="0.15" style="font-family:'Liberation Mono','IPAGothic',monospace" textLength="19.40" lengthAdjust="spacing">安値</text>
<text x="185.05" y="214.1" font-size="11.3" fill="#c8c8c8" stroke="#c8c8c8" stroke-width="0.2" style="font-family:'Liberation Mono','IPAGothic',monospace" textLength="28.60" lengthAdjust="spacingAndGlyphs">:4,316</text>
<text x="218.80" y="213.9" font-size="10.3" fill="#c8c8c8" stroke="#c8c8c8" stroke-width="0.15" style="font-family:'Liberation Mono','IPAGothic',monospace" textLength="19.40" lengthAdjust="spacing">終値</text>
<text x="238.40" y="214.1" font-size="11.3" fill="#c8c8c8" stroke="#c8c8c8" stroke-width="0.2" style="font-family:'Liberation Mono','IPAGothic',monospace" textLength="28.60" lengthAdjust="spacingAndGlyphs">:4,316</text>
<rect x="4.6" y="371.1" width="1015.2" height="2.9" fill="#fafafa"/>
<rect x="4.6" y="374" width="1015.1999999999999" height="166" fill="#000"/>
<rect x="973.2" y="374.3" width="46.59999999999991" height="165.7" fill="#1b1b1b"/>
<rect x="4.6" y="527.9" width="1015.1999999999999" height="12.100000000000023" fill="#1b1b1b"/>
<path d="M48.5 375.4 V527.9 M86.5 375.4 V527.9 M130.5 375.4 V527.9 M162.5 375.4 V527.9 M201.5 375.4 V527.9 M238.5 375.4 V527.9 M282.5 375.4 V527.9 M324.5 375.4 V527.9 M364.5 375.4 V527.9 M394.5 375.4 V527.9 M422.5 375.4 V527.9 M456.5 375.4 V527.9 M463.5 375.4 V527.9 M482.5 375.4 V527.9 M525.5 375.4 V527.9 M568.5 375.4 V527.9 M603.5 375.4 V527.9 M647.5 375.4 V527.9 M695.5 375.4 V527.9 M742.5 375.4 V527.9 M791.5 375.4 V527.9 M835.5 375.4 V527.9 M876.5 375.4 V527.9 M913.5 375.4 V527.9 M938.5 375.4 V527.9 M957.5 375.4 V527.9 M5.8 387.5 H972.6 M5.8 412.5 H972.6 M5.8 438.5 H972.6 M5.8 463.5 H972.6 M5.8 489.5 H972.6 M5.8 514.5 H972.6" stroke="#3c3c3c" stroke-width="1.35" fill="none"/>
<path d="M48.5 375.4 V527.9 M86.5 375.4 V527.9 M130.5 375.4 V527.9 M162.5 375.4 V527.9 M201.5 375.4 V527.9 M238.5 375.4 V527.9 M282.5 375.4 V527.9 M324.5 375.4 V527.9 M364.5 375.4 V527.9 M394.5 375.4 V527.9 M422.5 375.4 V527.9 M456.5 375.4 V527.9 M463.5 375.4 V527.9 M482.5 375.4 V527.9 M525.5 375.4 V527.9 M568.5 375.4 V527.9 M603.5 375.4 V527.9 M647.5 375.4 V527.9 M695.5 375.4 V527.9 M742.5 375.4 V527.9 M791.5 375.4 V527.9 M835.5 375.4 V527.9 M876.5 375.4 V527.9 M913.5 375.4 V527.9 M938.5 375.4 V527.9 M957.5 375.4 V527.9 M5.8 387.5 H972.6 M5.8 412.5 H972.6 M5.8 438.5 H972.6 M5.8 463.5 H972.6 M5.8 489.5 H972.6 M5.8 514.5 H972.6" stroke="#5e5e5e" stroke-width="1" stroke-dasharray="1.2 1.2" fill="none"/>
<path d="M225.9 375.4 V527.9" stroke="#4a4a4a" stroke-width="1.3" fill="none"/>
<path d="M225.9 375.4 V527.9" stroke="#9a9a9a" stroke-width="1" stroke-dasharray="1.6 0.8" fill="none"/>
<rect x="4.8" y="374" width="968.8000000000001" height="1.5" fill="#c6c6c6"/>
<rect x="4.8" y="374" width="1.1" height="153.89999999999998" fill="#6a6a6a"/>
<path d="M972.8000000000001 374 V528.3" stroke="#cfcfcf" stroke-width="1.3" fill="none"/>
<path d="M4.8 527.9 H973.4000000000001" stroke="#cfcfcf" stroke-width="1.1" fill="none"/>
<text x="49.10" y="536.1999999999999" font-size="11.3" fill="#b4b4b4" stroke="#b4b4b4" stroke-width="0.2" style="font-family:'Liberation Mono','IPAGothic',monospace" textLength="9.20" lengthAdjust="spacingAndGlyphs">01</text>
<text x="87.50" y="536.1999999999999" font-size="11.3" fill="#b4b4b4" stroke="#b4b4b4" stroke-width="0.2" style="font-family:'Liberation Mono','IPAGothic',monospace" textLength="9.20" lengthAdjust="spacingAndGlyphs">02</text>
<text x="131.00" y="536.1999999999999" font-size="11.3" fill="#b4b4b4" stroke="#b4b4b4" stroke-width="0.2" style="font-family:'Liberation Mono','IPAGothic',monospace" textLength="9.20" lengthAdjust="spacingAndGlyphs">03</text>
<text x="163.20" y="536.1999999999999" font-size="11.3" fill="#b4b4b4" stroke="#b4b4b4" stroke-width="0.2" style="font-family:'Liberation Mono','IPAGothic',monospace" textLength="9.20" lengthAdjust="spacingAndGlyphs">04</text>
<text x="201.70" y="536.1999999999999" font-size="11.3" fill="#b4b4b4" stroke="#b4b4b4" stroke-width="0.2" style="font-family:'Liberation Mono','IPAGothic',monospace" textLength="9.20" lengthAdjust="spacingAndGlyphs">05</text>
<text x="239.30" y="536.1999999999999" font-size="11.3" fill="#b4b4b4" stroke="#b4b4b4" stroke-width="0.2" style="font-family:'Liberation Mono','IPAGothic',monospace" textLength="9.20" lengthAdjust="spacingAndGlyphs">09</text>
<text x="282.80" y="536.1999999999999" font-size="11.3" fill="#b4b4b4" stroke="#b4b4b4" stroke-width="0.2" style="font-family:'Liberation Mono','IPAGothic',monospace" textLength="9.20" lengthAdjust="spacingAndGlyphs">10</text>
<text x="325.20" y="536.1999999999999" font-size="11.3" fill="#b4b4b4" stroke="#b4b4b4" stroke-width="0.2" style="font-family:'Liberation Mono','IPAGothic',monospace" textLength="9.20" lengthAdjust="spacingAndGlyphs">11</text>
<text x="365.50" y="536.1999999999999" font-size="11.3" fill="#b4b4b4" stroke="#b4b4b4" stroke-width="0.2" style="font-family:'Liberation Mono','IPAGothic',monospace" textLength="9.20" lengthAdjust="spacingAndGlyphs">12</text>
<text x="395.30" y="536.1999999999999" font-size="11.3" fill="#b4b4b4" stroke="#b4b4b4" stroke-width="0.2" style="font-family:'Liberation Mono','IPAGothic',monospace" textLength="9.20" lengthAdjust="spacingAndGlyphs">13</text>
<text x="423.70" y="536.1999999999999" font-size="11.3" fill="#b4b4b4" stroke="#b4b4b4" stroke-width="0.2" style="font-family:'Liberation Mono','IPAGothic',monospace" textLength="9.20" lengthAdjust="spacingAndGlyphs">14</text>
<text x="443.70" y="536.1999999999999" font-size="11.3" fill="#b4b4b4" stroke="#b4b4b4" stroke-width="0.2" style="font-family:'Liberation Mono','IPAGothic',monospace" textLength="9.20" lengthAdjust="spacingAndGlyphs">15</text>
<text x="463.80" y="536.1999999999999" font-size="11.3" fill="#b4b4b4" stroke="#b4b4b4" stroke-width="0.2" style="font-family:'Liberation Mono','IPAGothic',monospace" textLength="9.20" lengthAdjust="spacingAndGlyphs">16</text>
<text x="482.70" y="536.1999999999999" font-size="11.3" fill="#b4b4b4" stroke="#b4b4b4" stroke-width="0.2" style="font-family:'Liberation Mono','IPAGothic',monospace" textLength="9.20" lengthAdjust="spacingAndGlyphs">17</text>
<text x="525.90" y="536.1999999999999" font-size="11.3" fill="#b4b4b4" stroke="#b4b4b4" stroke-width="0.2" style="font-family:'Liberation Mono','IPAGothic',monospace" textLength="9.20" lengthAdjust="spacingAndGlyphs">18</text>
<text x="569.30" y="536.1999999999999" font-size="11.3" fill="#b4b4b4" stroke="#b4b4b4" stroke-width="0.2" style="font-family:'Liberation Mono','IPAGothic',monospace" textLength="9.20" lengthAdjust="spacingAndGlyphs">19</text>
<text x="603.80" y="536.1999999999999" font-size="11.3" fill="#b4b4b4" stroke="#b4b4b4" stroke-width="0.2" style="font-family:'Liberation Mono','IPAGothic',monospace" textLength="9.20" lengthAdjust="spacingAndGlyphs">20</text>
<text x="648.30" y="536.1999999999999" font-size="11.3" fill="#b4b4b4" stroke="#b4b4b4" stroke-width="0.2" style="font-family:'Liberation Mono','IPAGothic',monospace" textLength="9.20" lengthAdjust="spacingAndGlyphs">21</text>
<text x="696.30" y="536.1999999999999" font-size="11.3" fill="#b4b4b4" stroke="#b4b4b4" stroke-width="0.2" style="font-family:'Liberation Mono','IPAGothic',monospace" textLength="9.20" lengthAdjust="spacingAndGlyphs">22</text>
<text x="743.50" y="536.1999999999999" font-size="11.3" fill="#b4b4b4" stroke="#b4b4b4" stroke-width="0.2" style="font-family:'Liberation Mono','IPAGothic',monospace" textLength="9.20" lengthAdjust="spacingAndGlyphs">23</text>
<text x="791.70" y="536.1999999999999" font-size="11.3" fill="#b4b4b4" stroke="#b4b4b4" stroke-width="0.2" style="font-family:'Liberation Mono','IPAGothic',monospace" textLength="9.20" lengthAdjust="spacingAndGlyphs">00</text>
<text x="835.70" y="536.1999999999999" font-size="11.3" fill="#b4b4b4" stroke="#b4b4b4" stroke-width="0.2" style="font-family:'Liberation Mono','IPAGothic',monospace" textLength="9.20" lengthAdjust="spacingAndGlyphs">01</text>
<text x="876.70" y="536.1999999999999" font-size="11.3" fill="#b4b4b4" stroke="#b4b4b4" stroke-width="0.2" style="font-family:'Liberation Mono','IPAGothic',monospace" textLength="9.20" lengthAdjust="spacingAndGlyphs">02</text>
<text x="914.50" y="536.1999999999999" font-size="11.3" fill="#b4b4b4" stroke="#b4b4b4" stroke-width="0.2" style="font-family:'Liberation Mono','IPAGothic',monospace" textLength="9.20" lengthAdjust="spacingAndGlyphs">03</text>
<text x="938.80" y="536.1999999999999" font-size="11.3" fill="#b4b4b4" stroke="#b4b4b4" stroke-width="0.2" style="font-family:'Liberation Mono','IPAGothic',monospace" textLength="9.20" lengthAdjust="spacingAndGlyphs">04</text>
<text x="958.30" y="536.1999999999999" font-size="11.3" fill="#b4b4b4" stroke="#b4b4b4" stroke-width="0.2" style="font-family:'Liberation Mono','IPAGothic',monospace" textLength="9.20" lengthAdjust="spacingAndGlyphs">05</text>
<text x="213.60" y="536.1999999999999" font-size="11.3" fill="#e8e8e8" stroke="#e8e8e8" stroke-width="0.2" font-weight="bold" style="font-family:'Liberation Mono','IPAGothic',monospace" textLength="9.20" lengthAdjust="spacingAndGlyphs">06</text>
<text x="227.60" y="524" font-size="11.3" fill="#d8d8d8" stroke="#d8d8d8" stroke-width="0.2" style="font-family:'Liberation Mono','IPAGothic',monospace" textLength="9.20" lengthAdjust="spacingAndGlyphs">17</text>
<text x="792.60" y="524" font-size="11.3" fill="#d8d8d8" stroke="#d8d8d8" stroke-width="0.2" style="font-family:'Liberation Mono','IPAGothic',monospace" textLength="9.20" lengthAdjust="spacingAndGlyphs">18</text>
<text x="973.60" y="385.6" font-size="11.3" fill="#b0b0b0" stroke="#b0b0b0" stroke-width="0.2" style="font-family:'Liberation Mono','IPAGothic',monospace" textLength="23.75" lengthAdjust="spacingAndGlyphs">4,440</text>
<text x="973.60" y="411.1" font-size="11.3" fill="#b0b0b0" stroke="#b0b0b0" stroke-width="0.2" style="font-family:'Liberation Mono','IPAGothic',monospace" textLength="23.75" lengthAdjust="spacingAndGlyphs">4,430</text>
<text x="973.60" y="436.6" font-size="11.3" fill="#b0b0b0" stroke="#b0b0b0" stroke-width="0.2" style="font-family:'Liberation Mono','IPAGothic',monospace" textLength="23.75" lengthAdjust="spacingAndGlyphs">4,420</text>
<text x="973.60" y="462.1" font-size="11.3" fill="#b0b0b0" stroke="#b0b0b0" stroke-width="0.2" style="font-family:'Liberation Mono','IPAGothic',monospace" textLength="23.75" lengthAdjust="spacingAndGlyphs">4,410</text>
<text x="973.60" y="487.6" font-size="11.3" fill="#b0b0b0" stroke="#b0b0b0" stroke-width="0.2" style="font-family:'Liberation Mono','IPAGothic',monospace" textLength="23.75" lengthAdjust="spacingAndGlyphs">4,400</text>
<text x="973.60" y="513.0" font-size="11.3" fill="#b0b0b0" stroke="#b0b0b0" stroke-width="0.2" style="font-family:'Liberation Mono','IPAGothic',monospace" textLength="23.75" lengthAdjust="spacingAndGlyphs">4,390</text>
<text x="973.60" y="538.6" font-size="11.3" fill="#b0b0b0" stroke="#b0b0b0" stroke-width="0.2" style="font-family:'Liberation Mono','IPAGothic',monospace" textLength="23.75" lengthAdjust="spacingAndGlyphs">4,380</text>
<rect x="973.5" y="489.3" width="46.29999999999991" height="16.599999999999966" fill="#d9d9d9"/>
<text x="983.10" y="499.90000000000003" font-size="10.8" fill="#101010" stroke="#101010" stroke-width="0.2" font-weight="bold" style="font-family:'Liberation Mono','IPAGothic',monospace" textLength="24.75" lengthAdjust="spacingAndGlyphs">4,397</text>
<text x="7.20" y="385.7" font-size="11.3" fill="#c8c8c8" stroke="#c8c8c8" stroke-width="0.2" style="font-family:'Liberation Mono','IPAGothic',monospace" textLength="4.35" lengthAdjust="spacingAndGlyphs">[</text>
<text x="11.85" y="385.5" font-size="10.3" fill="#c8c8c8" stroke="#c8c8c8" stroke-width="0.15" style="font-family:'Liberation Mono','IPAGothic',monospace" textLength="9.70" lengthAdjust="spacing">金</text>
<text x="26.60" y="385.7" font-size="11.3" fill="#c8c8c8" stroke="#c8c8c8" stroke-width="0.2" style="font-family:'Liberation Mono','IPAGothic',monospace" textLength="23.75" lengthAdjust="spacingAndGlyphs">24/06</text>
<text x="55.70" y="385.7" font-size="11.3" fill="#c8c8c8" stroke="#c8c8c8" stroke-width="0.2" style="font-family:'Liberation Mono','IPAGothic',monospace" textLength="23.75" lengthAdjust="spacingAndGlyphs">8,713</text>
<text x="81.15" y="385.4" font-size="11.3" fill="#c8c8c8" style="font-family:'Liberation Mono','IPAGothic',monospace" textLength="7.30" lengthAdjust="spacingAndGlyphs">×</text>
<text x="89.65" y="385.7" font-size="11.3" fill="#c8c8c8" stroke="#c8c8c8" stroke-width="0.2" style="font-family:'Liberation Mono','IPAGothic',monospace" textLength="23.75" lengthAdjust="spacingAndGlyphs">1.00]</text>
<text x="113.70" y="385.5" font-size="10.3" fill="#c8c8c8" stroke="#c8c8c8" stroke-width="0.15" style="font-family:'Liberation Mono','IPAGothic',monospace" textLength="9.70" lengthAdjust="spacing">－</text>
<text x="123.60" y="385.7" font-size="11.3" fill="#c8c8c8" stroke="#c8c8c8" stroke-width="0.2" style="font-family:'Liberation Mono','IPAGothic',monospace" textLength="4.35" lengthAdjust="spacingAndGlyphs">[</text>
<text x="128.25" y="385.5" font-size="10.3" fill="#c8c8c8" stroke="#c8c8c8" stroke-width="0.15" style="font-family:'Liberation Mono','IPAGothic',monospace" textLength="19.40" lengthAdjust="spacing">白金</text>
<text x="152.70" y="385.7" font-size="11.3" fill="#c8c8c8" stroke="#c8c8c8" stroke-width="0.2" style="font-family:'Liberation Mono','IPAGothic',monospace" textLength="23.75" lengthAdjust="spacingAndGlyphs">24/06</text>
<text x="181.80" y="385.7" font-size="11.3" fill="#c8c8c8" stroke="#c8c8c8" stroke-width="0.2" style="font-family:'Liberation Mono','IPAGothic',monospace" textLength="23.75" lengthAdjust="spacingAndGlyphs">4,316</text>
<text x="207.25" y="385.4" font-size="11.3" fill="#c8c8c8" style="font-family:'Liberation Mono','IPAGothic',monospace" textLength="7.30" lengthAdjust="spacingAndGlyphs">×</text>
<text x="215.75" y="385.7" font-size="11.3" fill="#c8c8c8" stroke="#c8c8c8" stroke-width="0.2" style="font-family:'Liberation Mono','IPAGothic',monospace" textLength="23.75" lengthAdjust="spacingAndGlyphs">1.00]</text>
<text x="244.65" y="385.5" font-size="10.3" fill="#c8c8c8" stroke="#c8c8c8" stroke-width="0.15" style="font-family:'Liberation Mono','IPAGothic',monospace" textLength="19.40" lengthAdjust="spacing">終値</text>
<text x="268.90" y="385.5" font-size="10.3" fill="#c8c8c8" stroke="#c8c8c8" stroke-width="0.15" style="font-family:'Liberation Mono','IPAGothic',monospace" textLength="19.40" lengthAdjust="spacing">時刻</text>
<text x="288.50" y="385.7" font-size="11.3" fill="#c8c8c8" stroke="#c8c8c8" stroke-width="0.2" style="font-family:'Liberation Mono','IPAGothic',monospace" textLength="28.60" lengthAdjust="spacingAndGlyphs">:05:54</text>
<text x="322.45" y="385.7" font-size="11.3" fill="#c8c8c8" stroke="#c8c8c8" stroke-width="0.2" style="font-family:'Liberation Mono','IPAGothic',monospace" textLength="23.75" lengthAdjust="spacingAndGlyphs">4,397</text>
<g><rect x="6.95" y="97.24" width="0.95" height="1.20" fill="#ece484"/><rect x="7.75" y="99.73" width="0.95" height="1.20" fill="#ece484"/><rect x="10.16" y="99.83" width="0.95" height="5.98" fill="#1486f0"/><rect x="10.96" y="102.32" width="0.95" height="3.49" fill="#ff1010"/><rect x="11.77" y="99.73" width="0.95" height="1.20" fill="#ece484"/><rect x="13.37" y="92.36" width="0.95" height="8.47" fill="#ff1010"/><rect x="14.17" y="91.11" width="0.95" height="7.23" fill="#1486f0"/><rect x="14.98" y="97.34" width="0.95" height="3.49" fill="#1486f0"/><rect x="15.78" y="99.73" width="0.95" height="1.20" fill="#ece484"/><rect x="16.58" y="99.83" width="0.95" height="3.49" fill="#1486f0"/><rect x="17.38" y="102.32" width="0.95" height="4.73" fill="#1486f0"/><rect x="18.99" y="102.32" width="0.95" height="3.49" fill="#ff1010"/><rect x="19.79" y="99.83" width="0.95" height="3.49" fill="#ff1010"/><rect x="20.59" y="94.85" width="0.95" height="5.98" fill="#ff1010"/><rect x="22.20" y="87.38" width="0.95" height="8.47" fill="#ff1010"/><rect x="23.00" y="83.64" width="0.95" height="4.73" fill="#ff1010"/><rect x="24.60" y="82.30" width="0.95" height="1.20" fill="#ece484"/><rect x="25.41" y="79.81" width="0.95" height="1.20" fill="#ece484"/><rect x="26.21" y="79.81" width="0.95" height="1.20" fill="#ece484"/><rect x="27.01" y="79.81" width="0.95" height="1.20" fill="#ece484"/><rect x="27.81" y="82.30" width="0.95" height="1.20" fill="#ece484"/><rect x="28.62" y="81.16" width="0.95" height="4.73" fill="#1486f0"/><rect x="29.42" y="84.79" width="0.95" height="1.20" fill="#ece484"/><rect x="30.22" y="84.89" width="0.95" height="8.47" fill="#1486f0"/><rect x="31.02" y="92.26" width="0.95" height="1.20" fill="#ece484"/><rect x="31.82" y="87.38" width="0.95" height="3.49" fill="#ece484"/><rect x="33.43" y="89.77" width="0.95" height="1.20" fill="#ece484"/><rect x="34.23" y="89.77" width="0.95" height="1.20" fill="#ece484"/><rect x="35.03" y="87.38" width="0.95" height="3.49" fill="#ff1010"/><rect x="35.84" y="84.89" width="0.95" height="4.73" fill="#ff1010"/><rect x="36.64" y="82.40" width="0.95" height="3.49" fill="#ff1010"/><rect x="37.44" y="79.81" width="0.95" height="1.20" fill="#ece484"/><rect x="38.24" y="79.81" width="0.95" height="1.20" fill="#ece484"/><rect x="39.05" y="79.91" width="0.95" height="3.49" fill="#1486f0"/><rect x="39.85" y="82.30" width="0.95" height="1.20" fill="#ece484"/><rect x="40.65" y="79.91" width="0.95" height="3.49" fill="#ff1010"/><rect x="41.45" y="79.81" width="0.95" height="1.20" fill="#ece484"/><rect x="42.26" y="79.81" width="0.95" height="1.20" fill="#ece484"/><rect x="43.06" y="74.93" width="0.95" height="5.98" fill="#ff1010"/><rect x="43.86" y="74.93" width="0.95" height="3.49" fill="#ff1010"/><rect x="44.66" y="74.83" width="0.95" height="1.20" fill="#ece484"/><rect x="45.46" y="74.83" width="0.95" height="1.20" fill="#ece484"/><rect x="47.07" y="74.83" width="0.95" height="1.20" fill="#ece484"/><rect x="47.87" y="74.83" width="0.95" height="1.20" fill="#ece484"/><rect x="48.67" y="74.93" width="0.95" height="5.98" fill="#1486f0"/><rect x="49.48" y="77.32" width="0.95" height="1.20" fill="#ece484"/><rect x="50.28" y="77.32" width="0.95" height="1.20" fill="#ece484"/><rect x="51.08" y="77.32" width="0.95" height="1.20" fill="#ece484"/><rect x="52.69" y="77.32" width="0.95" height="1.20" fill="#ece484"/><rect x="53.49" y="76.17" width="0.95" height="4.73" fill="#1486f0"/><rect x="54.29" y="76.17" width="0.95" height="4.73" fill="#ff1010"/><rect x="55.09" y="77.42" width="0.95" height="3.49" fill="#1486f0"/><rect x="55.89" y="77.42" width="0.95" height="3.49" fill="#ff1010"/><rect x="57.50" y="77.42" width="0.95" height="3.49" fill="#ece484"/><rect x="59.91" y="77.42" width="0.95" height="3.49" fill="#1486f0"/><rect x="62.31" y="84.79" width="0.95" height="1.20" fill="#ece484"/><rect x="63.12" y="84.89" width="0.95" height="4.73" fill="#1486f0"/><rect x="63.92" y="87.28" width="0.95" height="1.20" fill="#ece484"/><rect x="64.72" y="87.28" width="0.95" height="1.20" fill="#ece484"/><rect x="65.52" y="87.38" width="0.95" height="8.47" fill="#1486f0"/><rect x="66.33" y="97.24" width="0.95" height="1.20" fill="#ece484"/><rect x="67.13" y="94.75" width="0.95" height="1.20" fill="#ece484"/><rect x="67.93" y="92.26" width="0.95" height="1.20" fill="#ece484"/><rect x="68.73" y="87.38" width="0.95" height="5.98" fill="#ff1010"/><rect x="69.53" y="89.77" width="0.95" height="1.20" fill="#ece484"/><rect x="70.34" y="87.28" width="0.95" height="1.20" fill="#ece484"/><rect x="71.14" y="87.28" width="0.95" height="1.20" fill="#ece484"/><rect x="71.94" y="87.28" width="0.95" height="1.20" fill="#ece484"/><rect x="72.74" y="87.38" width="0.95" height="4.74" fill="#1486f0"/><rect x="73.55" y="89.77" width="0.95" height="1.20" fill="#ece484"/><rect x="74.35" y="92.26" width="0.95" height="1.20" fill="#ece484"/><rect x="75.15" y="92.26" width="0.95" height="1.20" fill="#ece484"/><rect x="75.95" y="92.26" width="0.95" height="1.20" fill="#ece484"/><rect x="77.56" y="92.26" width="0.95" height="1.20" fill="#ece484"/><rect x="79.16" y="92.36" width="0.95" height="3.49" fill="#1486f0"/><rect x="80.77" y="92.26" width="0.95" height="1.20" fill="#ece484"/><rect x="81.57" y="89.87" width="0.95" height="3.49" fill="#ff1010"/><rect x="82.37" y="89.77" width="0.95" height="1.20" fill="#ece484"/><rect x="83.17" y="89.87" width="0.95" height="3.49" fill="#ece484"/><rect x="83.98" y="87.38" width="0.95" height="3.49" fill="#ff1010"/><rect x="84.78" y="87.28" width="0.95" height="1.20" fill="#ece484"/><rect x="85.58" y="87.28" width="0.95" height="1.20" fill="#ece484"/><rect x="86.38" y="82.40" width="0.95" height="8.47" fill="#ff1010"/><rect x="87.19" y="82.30" width="0.95" height="1.20" fill="#ece484"/><rect x="88.79" y="82.30" width="0.95" height="1.20" fill="#ece484"/><rect x="89.59" y="82.30" width="0.95" height="1.20" fill="#ece484"/><rect x="90.40" y="82.30" width="0.95" height="1.20" fill="#ece484"/><rect x="91.20" y="79.81" width="0.95" height="1.20" fill="#ece484"/><rect x="92.00" y="79.81" width="0.95" height="1.20" fill="#ece484"/><rect x="92.80" y="79.81" width="0.95" height="1.20" fill="#ece484"/><rect x="93.60" y="77.42" width="0.95" height="3.49" fill="#ff1010"/><rect x="94.41" y="77.32" width="0.95" height="1.20" fill="#ece484"/><rect x="95.21" y="77.32" width="0.95" height="1.20" fill="#ece484"/><rect x="96.01" y="74.93" width="0.95" height="3.49" fill="#ff1010"/><rect x="96.81" y="72.34" width="0.95" height="1.20" fill="#ece484"/><rect x="97.62" y="72.44" width="0.95" height="3.49" fill="#1486f0"/><rect x="98.42" y="74.93" width="0.95" height="3.49" fill="#1486f0"/><rect x="99.22" y="77.32" width="0.95" height="1.20" fill="#ece484"/><rect x="100.02" y="77.42" width="0.95" height="4.73" fill="#1486f0"/><rect x="100.83" y="77.32" width="0.95" height="1.20" fill="#ece484"/><rect x="101.63" y="77.32" width="0.95" height="1.20" fill="#ece484"/><rect x="102.43" y="74.83" width="0.95" height="1.20" fill="#ece484"/><rect x="103.23" y="72.44" width="0.95" height="3.49" fill="#ff1010"/><rect x="104.03" y="67.46" width="0.95" height="5.98" fill="#ff1010"/><rect x="104.84" y="67.36" width="0.95" height="1.20" fill="#ece484"/><rect x="105.64" y="64.87" width="0.95" height="1.20" fill="#ece484"/><rect x="106.44" y="62.48" width="0.95" height="3.49" fill="#ff1010"/><rect x="107.24" y="59.89" width="0.95" height="1.20" fill="#ece484"/><rect x="108.85" y="55.01" width="0.95" height="5.98" fill="#ff1010"/><rect x="109.65" y="55.01" width="0.95" height="5.98" fill="#1486f0"/><rect x="110.45" y="59.99" width="0.95" height="8.47" fill="#1486f0"/><rect x="111.26" y="67.36" width="0.95" height="1.20" fill="#ece484"/><rect x="112.06" y="67.36" width="0.95" height="1.20" fill="#ece484"/><rect x="112.86" y="64.87" width="0.95" height="1.20" fill="#ece484"/><rect x="113.66" y="64.87" width="0.95" height="1.20" fill="#ece484"/><rect x="114.47" y="62.48" width="0.95" height="3.49" fill="#ff1010"/><rect x="115.27" y="62.38" width="0.95" height="1.20" fill="#ece484"/><rect x="116.07" y="62.38" width="0.95" height="1.20" fill="#ece484"/><rect x="116.87" y="64.87" width="0.95" height="1.20" fill="#ece484"/><rect x="117.67" y="62.38" width="0.95" height="1.20" fill="#ece484"/><rect x="118.48" y="62.38" width="0.95" height="1.20" fill="#ece484"/><rect x="119.28" y="62.38" width="0.95" height="1.20" fill="#ece484"/><rect x="120.08" y="59.89" width="0.95" height="1.20" fill="#ece484"/><rect x="120.88" y="57.40" width="0.95" height="1.20" fill="#ece484"/><rect x="121.69" y="57.40" width="0.95" height="1.20" fill="#ece484"/><rect x="122.49" y="57.40" width="0.95" height="1.20" fill="#ece484"/><rect x="123.29" y="54.91" width="0.95" height="1.20" fill="#ece484"/><rect x="124.09" y="54.91" width="0.95" height="1.20" fill="#ece484"/><rect x="124.90" y="54.91" width="0.95" height="1.20" fill="#ece484"/><rect x="125.70" y="52.52" width="0.95" height="3.49" fill="#ff1010"/><rect x="126.50" y="52.42" width="0.95" height="1.20" fill="#ece484"/><rect x="127.30" y="52.42" width="0.95" height="1.20" fill="#ece484"/><rect x="128.10" y="49.93" width="0.95" height="1.20" fill="#ece484"/><rect x="128.91" y="49.93" width="0.95" height="1.20" fill="#ece484"/><rect x="130.51" y="49.93" width="0.95" height="1.20" fill="#ece484"/><rect x="132.12" y="47.44" width="0.95" height="1.20" fill="#ece484"/><rect x="132.92" y="49.93" width="0.95" height="1.20" fill="#ece484"/><rect x="133.72" y="49.93" width="0.95" height="1.20" fill="#ece484"/><rect x="135.33" y="52.42" width="0.95" height="1.20" fill="#ece484"/><rect x="136.13" y="52.42" width="0.95" height="1.20" fill="#ece484"/><rect x="136.93" y="52.42" width="0.95" height="1.20" fill="#ece484"/><rect x="138.54" y="52.42" width="0.95" height="1.20" fill="#ece484"/><rect x="139.34" y="52.42" width="0.95" height="1.20" fill="#ece484"/><rect x="140.14" y="52.42" width="0.95" height="1.20" fill="#ece484"/><rect x="140.94" y="49.93" width="0.95" height="1.20" fill="#ece484"/><rect x="141.74" y="49.93" width="0.95" height="1.20" fill="#ece484"/><rect x="142.55" y="49.93" width="0.95" height="1.20" fill="#ece484"/><rect x="144.15" y="47.54" width="0.95" height="4.74" fill="#ff1010"/><rect x="144.95" y="47.44" width="0.95" height="1.20" fill="#ece484"/><rect x="145.76" y="47.44" width="0.95" height="1.20" fill="#ece484"/><rect x="146.56" y="45.05" width="0.95" height="3.49" fill="#1486f0"/><rect x="147.36" y="47.44" width="0.95" height="1.20" fill="#ece484"/><rect x="148.16" y="47.54" width="0.95" height="3.49" fill="#1486f0"/><rect x="148.97" y="50.03" width="0.95" height="7.22" fill="#1486f0"/><rect x="149.77" y="54.91" width="0.95" height="1.20" fill="#ece484"/><rect x="150.57" y="52.42" width="0.95" height="1.20" fill="#ece484"/><rect x="151.37" y="52.42" width="0.95" height="1.20" fill="#ece484"/><rect x="152.18" y="52.42" width="0.95" height="1.20" fill="#ece484"/><rect x="153.78" y="54.91" width="0.95" height="1.20" fill="#ece484"/><rect x="154.58" y="54.91" width="0.95" height="1.20" fill="#ece484"/><rect x="156.19" y="54.91" width="0.95" height="1.20" fill="#ece484"/><rect x="156.99" y="54.91" width="0.95" height="1.20" fill="#ece484"/><rect x="159.40" y="54.91" width="0.95" height="1.20" fill="#ece484"/><rect x="160.20" y="54.91" width="0.95" height="1.20" fill="#ece484"/><rect x="161.00" y="54.91" width="0.95" height="1.20" fill="#ece484"/><rect x="161.80" y="54.91" width="0.95" height="1.20" fill="#ece484"/><rect x="162.61" y="55.01" width="0.95" height="3.49" fill="#1486f0"/><rect x="163.41" y="59.89" width="0.95" height="1.20" fill="#ece484"/><rect x="165.01" y="62.38" width="0.95" height="1.20" fill="#ece484"/><rect x="165.81" y="62.38" width="0.95" height="1.20" fill="#ece484"/><rect x="166.62" y="62.38" width="0.95" height="1.20" fill="#ece484"/><rect x="168.22" y="57.40" width="0.95" height="1.20" fill="#ece484"/><rect x="169.02" y="57.40" width="0.95" height="1.20" fill="#ece484"/><rect x="170.63" y="57.40" width="0.95" height="1.20" fill="#ece484"/><rect x="172.23" y="57.40" width="0.95" height="1.20" fill="#ece484"/><rect x="173.04" y="59.89" width="0.95" height="1.20" fill="#ece484"/><rect x="173.84" y="59.89" width="0.95" height="1.20" fill="#ece484"/><rect x="174.64" y="62.38" width="0.95" height="1.20" fill="#ece484"/><rect x="175.44" y="62.38" width="0.95" height="1.20" fill="#ece484"/><rect x="177.05" y="64.87" width="0.95" height="1.20" fill="#ece484"/><rect x="177.85" y="64.87" width="0.95" height="1.20" fill="#ece484"/><rect x="178.65" y="64.87" width="0.95" height="1.20" fill="#ece484"/><rect x="179.45" y="69.85" width="0.95" height="1.20" fill="#ece484"/><rect x="181.86" y="69.85" width="0.95" height="1.20" fill="#ece484"/><rect x="182.66" y="72.44" width="0.95" height="3.49" fill="#ece484"/><rect x="184.27" y="77.32" width="0.95" height="1.20" fill="#ece484"/><rect x="185.07" y="79.81" width="0.95" height="1.20" fill="#ece484"/><rect x="185.87" y="79.81" width="0.95" height="1.20" fill="#ece484"/><rect x="186.68" y="79.81" width="0.95" height="1.20" fill="#ece484"/><rect x="187.48" y="79.81" width="0.95" height="1.20" fill="#ece484"/><rect x="188.28" y="77.42" width="0.95" height="3.49" fill="#1486f0"/><rect x="189.08" y="82.30" width="0.95" height="1.20" fill="#ece484"/><rect x="189.88" y="82.40" width="0.95" height="5.98" fill="#1486f0"/><rect x="190.69" y="89.77" width="0.95" height="1.20" fill="#ece484"/><rect x="191.49" y="87.38" width="0.95" height="3.49" fill="#ff1010"/><rect x="192.29" y="87.28" width="0.95" height="1.20" fill="#ece484"/><rect x="193.90" y="87.28" width="0.95" height="1.20" fill="#ece484"/><rect x="194.70" y="87.28" width="0.95" height="1.20" fill="#ece484"/><rect x="196.30" y="86.13" width="0.95" height="7.23" fill="#1486f0"/><rect x="197.11" y="94.75" width="0.95" height="1.20" fill="#ece484"/><rect x="198.71" y="92.26" width="0.95" height="1.20" fill="#ece484"/><rect x="199.51" y="92.26" width="0.95" height="1.20" fill="#ece484"/><rect x="200.32" y="87.38" width="0.95" height="5.98" fill="#ff1010"/><rect x="201.92" y="87.38" width="0.95" height="3.49" fill="#ff1010"/><rect x="202.72" y="87.28" width="0.95" height="1.20" fill="#ece484"/><rect x="203.52" y="87.38" width="0.95" height="3.49" fill="#ece484"/><rect x="204.33" y="87.28" width="0.95" height="1.20" fill="#ece484"/><rect x="206.73" y="87.28" width="0.95" height="1.20" fill="#ece484"/><rect x="207.54" y="87.28" width="0.95" height="1.20" fill="#ece484"/><rect x="208.34" y="87.38" width="0.95" height="3.49" fill="#1486f0"/><rect x="209.14" y="87.28" width="0.95" height="1.20" fill="#ece484"/><rect x="209.94" y="87.28" width="0.95" height="1.20" fill="#ece484"/><rect x="212.35" y="89.87" width="0.95" height="3.49" fill="#ece484"/><rect x="213.15" y="89.77" width="0.95" height="1.20" fill="#ece484"/><rect x="213.95" y="89.77" width="0.95" height="1.20" fill="#ece484"/><rect x="215.56" y="89.77" width="0.95" height="1.20" fill="#ece484"/><rect x="216.36" y="89.77" width="0.95" height="1.20" fill="#ece484"/><rect x="217.16" y="89.77" width="0.95" height="1.20" fill="#ece484"/><rect x="217.97" y="89.77" width="0.95" height="1.20" fill="#ece484"/><rect x="218.77" y="89.77" width="0.95" height="1.20" fill="#ece484"/><rect x="219.57" y="89.77" width="0.95" height="1.20" fill="#ece484"/><rect x="221.18" y="88.62" width="0.95" height="4.73" fill="#1486f0"/><rect x="221.98" y="94.75" width="0.95" height="1.20" fill="#ece484"/><rect x="222.78" y="94.85" width="0.95" height="5.98" fill="#1486f0"/><rect x="223.58" y="99.73" width="0.95" height="1.20" fill="#ece484"/><rect x="224.39" y="99.73" width="0.95" height="1.20" fill="#ece484"/><rect x="226.79" y="142.06" width="0.95" height="1.20" fill="#ece484"/><rect x="227.59" y="142.06" width="0.95" height="1.20" fill="#ece484"/><rect x="228.40" y="142.06" width="0.95" height="1.20" fill="#ece484"/><rect x="229.20" y="142.06" width="0.95" height="1.20" fill="#ece484"/><rect x="230.00" y="142.06" width="0.95" height="1.20" fill="#ece484"/><rect x="233.21" y="134.69" width="0.95" height="8.47" fill="#ff1010"/><rect x="234.01" y="132.10" width="0.95" height="1.20" fill="#ece484"/><rect x="235.62" y="129.71" width="0.95" height="3.49" fill="#ff1010"/><rect x="236.42" y="129.61" width="0.95" height="1.20" fill="#ece484"/><rect x="237.22" y="129.61" width="0.95" height="1.20" fill="#ece484"/><rect x="238.02" y="129.71" width="0.95" height="3.49" fill="#1486f0"/><rect x="238.83" y="129.71" width="0.95" height="3.49" fill="#ece484"/><rect x="240.43" y="134.59" width="0.95" height="1.20" fill="#ece484"/><rect x="241.23" y="134.69" width="0.95" height="3.49" fill="#1486f0"/><rect x="242.04" y="135.94" width="0.95" height="4.74" fill="#1486f0"/><rect x="242.84" y="139.67" width="0.95" height="8.47" fill="#1486f0"/><rect x="243.64" y="144.55" width="0.95" height="1.20" fill="#ece484"/><rect x="244.44" y="144.55" width="0.95" height="1.20" fill="#ece484"/><rect x="245.25" y="144.55" width="0.95" height="1.20" fill="#ece484"/><rect x="246.05" y="147.04" width="0.95" height="1.20" fill="#ece484"/><rect x="246.85" y="144.55" width="0.95" height="1.20" fill="#ece484"/><rect x="247.65" y="144.55" width="0.95" height="1.20" fill="#ece484"/><rect x="248.46" y="142.16" width="0.95" height="3.49" fill="#ff1010"/><rect x="249.26" y="142.06" width="0.95" height="1.20" fill="#ece484"/><rect x="250.06" y="142.16" width="0.95" height="3.49" fill="#1486f0"/><rect x="250.86" y="144.55" width="0.95" height="1.20" fill="#ece484"/><rect x="251.66" y="144.55" width="0.95" height="1.20" fill="#ece484"/><rect x="252.47" y="142.16" width="0.95" height="5.98" fill="#1486f0"/><rect x="254.07" y="147.14" width="0.95" height="7.22" fill="#1486f0"/><rect x="254.87" y="152.02" width="0.95" height="1.20" fill="#ece484"/><rect x="255.68" y="149.63" width="0.95" height="3.49" fill="#ff1010"/><rect x="256.48" y="152.02" width="0.95" height="1.20" fill="#ece484"/><rect x="258.08" y="152.12" width="0.95" height="3.49" fill="#1486f0"/><rect x="258.89" y="154.51" width="0.95" height="1.20" fill="#ece484"/><rect x="259.69" y="154.51" width="0.95" height="1.20" fill="#ece484"/><rect x="260.49" y="149.63" width="0.95" height="8.47" fill="#ff1010"/><rect x="261.29" y="147.14" width="0.95" height="3.49" fill="#ff1010"/><rect x="262.09" y="147.04" width="0.95" height="1.20" fill="#ece484"/><rect x="263.70" y="147.04" width="0.95" height="1.20" fill="#ece484"/><rect x="264.50" y="147.04" width="0.95" height="1.20" fill="#ece484"/><rect x="265.30" y="144.55" width="0.95" height="1.20" fill="#ece484"/><rect x="266.91" y="144.55" width="0.95" height="1.20" fill="#ece484"/><rect x="267.71" y="144.55" width="0.95" height="1.20" fill="#ece484"/><rect x="268.51" y="147.04" width="0.95" height="1.20" fill="#ece484"/><rect x="269.32" y="147.04" width="0.95" height="1.20" fill="#ece484"/><rect x="270.12" y="147.04" width="0.95" height="1.20" fill="#ece484"/><rect x="270.92" y="147.14" width="0.95" height="3.49" fill="#1486f0"/><rect x="271.72" y="149.63" width="0.95" height="5.98" fill="#1486f0"/><rect x="272.53" y="154.61" width="0.95" height="3.49" fill="#1486f0"/><rect x="273.33" y="157.10" width="0.95" height="3.49" fill="#1486f0"/><rect x="274.93" y="157.00" width="0.95" height="1.20" fill="#ece484"/><rect x="275.73" y="157.00" width="0.95" height="1.20" fill="#ece484"/><rect x="276.54" y="157.10" width="0.95" height="3.49" fill="#1486f0"/><rect x="277.34" y="161.98" width="0.95" height="1.20" fill="#ece484"/><rect x="278.14" y="161.98" width="0.95" height="1.20" fill="#ece484"/><rect x="278.94" y="161.98" width="0.95" height="1.20" fill="#ece484"/><rect x="279.75" y="161.98" width="0.95" height="1.20" fill="#ece484"/><rect x="280.55" y="159.49" width="0.95" height="1.20" fill="#ece484"/><rect x="281.35" y="159.49" width="0.95" height="1.20" fill="#ece484"/><rect x="282.15" y="157.00" width="0.95" height="1.20" fill="#ece484"/><rect x="282.96" y="157.00" width="0.95" height="1.20" fill="#ece484"/><rect x="283.76" y="152.12" width="0.95" height="3.49" fill="#1486f0"/><rect x="284.56" y="154.51" width="0.95" height="1.20" fill="#ece484"/><rect x="285.36" y="157.00" width="0.95" height="1.20" fill="#ece484"/><rect x="286.17" y="157.00" width="0.95" height="1.20" fill="#ece484"/><rect x="286.97" y="157.00" width="0.95" height="1.20" fill="#ece484"/><rect x="288.57" y="157.10" width="0.95" height="3.49" fill="#1486f0"/><rect x="289.37" y="157.00" width="0.95" height="1.20" fill="#ece484"/><rect x="290.18" y="157.00" width="0.95" height="1.20" fill="#ece484"/><rect x="290.98" y="154.51" width="0.95" height="1.20" fill="#ece484"/><rect x="291.78" y="152.02" width="0.95" height="1.20" fill="#ece484"/><rect x="292.58" y="149.63" width="0.95" height="5.98" fill="#ff1010"/><rect x="293.39" y="147.14" width="0.95" height="3.49" fill="#ff1010"/><rect x="294.19" y="139.67" width="0.95" height="8.47" fill="#ff1010"/><rect x="294.99" y="137.18" width="0.95" height="5.98" fill="#ff1010"/><rect x="295.79" y="132.20" width="0.95" height="3.49" fill="#ff1010"/><rect x="296.60" y="132.20" width="0.95" height="3.49" fill="#ff1010"/><rect x="297.40" y="129.71" width="0.95" height="3.49" fill="#ff1010"/><rect x="298.20" y="129.61" width="0.95" height="1.20" fill="#ece484"/><rect x="299.80" y="127.12" width="0.95" height="1.20" fill="#ece484"/><rect x="300.61" y="127.12" width="0.95" height="1.20" fill="#ece484"/><rect x="301.41" y="127.12" width="0.95" height="1.20" fill="#ece484"/><rect x="302.21" y="127.22" width="0.95" height="5.98" fill="#1486f0"/><rect x="303.01" y="132.20" width="0.95" height="3.49" fill="#1486f0"/><rect x="303.82" y="134.69" width="0.95" height="5.98" fill="#1486f0"/><rect x="304.62" y="139.57" width="0.95" height="1.20" fill="#ece484"/><rect x="306.22" y="139.57" width="0.95" height="1.20" fill="#ece484"/><rect x="307.03" y="142.06" width="0.95" height="1.20" fill="#ece484"/><rect x="307.83" y="144.55" width="0.95" height="1.20" fill="#ece484"/><rect x="309.43" y="144.65" width="0.95" height="3.49" fill="#1486f0"/><rect x="310.24" y="147.04" width="0.95" height="1.20" fill="#ece484"/><rect x="311.04" y="147.04" width="0.95" height="1.20" fill="#ece484"/><rect x="312.64" y="147.14" width="0.95" height="3.49" fill="#1486f0"/><rect x="313.44" y="154.51" width="0.95" height="1.20" fill="#ece484"/><rect x="314.25" y="157.00" width="0.95" height="1.20" fill="#ece484"/><rect x="315.05" y="157.10" width="0.95" height="3.49" fill="#1486f0"/><rect x="315.85" y="159.59" width="0.95" height="4.74" fill="#1486f0"/><rect x="316.65" y="157.10" width="0.95" height="5.98" fill="#ff1010"/><rect x="317.46" y="157.00" width="0.95" height="1.20" fill="#ece484"/><rect x="318.26" y="157.00" width="0.95" height="1.20" fill="#ece484"/><rect x="319.86" y="154.61" width="0.95" height="4.74" fill="#ff1010"/><rect x="320.67" y="154.51" width="0.95" height="1.20" fill="#ece484"/><rect x="321.47" y="154.51" width="0.95" height="1.20" fill="#ece484"/><rect x="322.27" y="154.51" width="0.95" height="1.20" fill="#ece484"/><rect x="323.87" y="154.61" width="0.95" height="5.98" fill="#1486f0"/><rect x="324.68" y="159.49" width="0.95" height="1.20" fill="#ece484"/><rect x="325.48" y="159.49" width="0.95" height="1.20" fill="#ece484"/><rect x="326.28" y="154.51" width="0.95" height="1.20" fill="#ece484"/><rect x="327.08" y="152.12" width="0.95" height="3.49" fill="#ff1010"/><rect x="329.49" y="152.02" width="0.95" height="1.20" fill="#ece484"/><rect x="330.29" y="149.53" width="0.95" height="1.20" fill="#ece484"/><rect x="331.10" y="149.63" width="0.95" height="3.49" fill="#1486f0"/><rect x="331.90" y="152.02" width="0.95" height="1.20" fill="#ece484"/><rect x="332.70" y="152.12" width="0.95" height="3.49" fill="#1486f0"/><rect x="333.50" y="154.61" width="0.95" height="3.49" fill="#1486f0"/><rect x="334.31" y="159.49" width="0.95" height="1.20" fill="#ece484"/><rect x="335.11" y="159.59" width="0.95" height="3.49" fill="#ece484"/><rect x="335.91" y="159.49" width="0.95" height="1.20" fill="#ece484"/><rect x="337.51" y="159.49" width="0.95" height="1.20" fill="#ece484"/><rect x="338.32" y="159.49" width="0.95" height="1.20" fill="#ece484"/><rect x="339.12" y="159.59" width="0.95" height="3.49" fill="#ece484"/><rect x="341.53" y="159.59" width="0.95" height="5.98" fill="#1486f0"/><rect x="342.33" y="166.96" width="0.95" height="1.20" fill="#ece484"/><rect x="343.13" y="169.45" width="0.95" height="1.20" fill="#ece484"/><rect x="343.93" y="169.45" width="0.95" height="1.20" fill="#ece484"/><rect x="345.54" y="171.94" width="0.95" height="1.20" fill="#ece484"/><rect x="346.34" y="167.06" width="0.95" height="5.98" fill="#ff1010"/><rect x="347.14" y="167.06" width="0.95" height="3.49" fill="#1486f0"/><rect x="347.94" y="169.45" width="0.95" height="1.20" fill="#ece484"/><rect x="349.55" y="166.96" width="0.95" height="1.20" fill="#ece484"/><rect x="350.35" y="164.47" width="0.95" height="1.20" fill="#ece484"/><rect x="351.15" y="164.47" width="0.95" height="1.20" fill="#ece484"/><rect x="351.96" y="161.98" width="0.95" height="1.20" fill="#ece484"/><rect x="352.76" y="164.47" width="0.95" height="1.20" fill="#ece484"/><rect x="353.56" y="166.96" width="0.95" height="1.20" fill="#ece484"/><rect x="354.36" y="169.45" width="0.95" height="1.20" fill="#ece484"/><rect x="355.17" y="169.45" width="0.95" height="1.20" fill="#ece484"/><rect x="355.97" y="166.96" width="0.95" height="1.20" fill="#ece484"/><rect x="356.77" y="166.96" width="0.95" height="1.20" fill="#ece484"/><rect x="357.57" y="164.47" width="0.95" height="1.20" fill="#ece484"/><rect x="358.38" y="164.47" width="0.95" height="1.20" fill="#ece484"/><rect x="359.18" y="164.47" width="0.95" height="1.20" fill="#ece484"/><rect x="359.98" y="162.08" width="0.95" height="3.49" fill="#1486f0"/><rect x="362.39" y="159.59" width="0.95" height="5.98" fill="#ff1010"/><rect x="363.19" y="159.49" width="0.95" height="1.20" fill="#ece484"/><rect x="364.79" y="154.61" width="0.95" height="5.98" fill="#ff1010"/><rect x="366.40" y="157.00" width="0.95" height="1.20" fill="#ece484"/><rect x="367.20" y="157.00" width="0.95" height="1.20" fill="#ece484"/><rect x="369.61" y="157.00" width="0.95" height="1.20" fill="#ece484"/><rect x="370.41" y="154.51" width="0.95" height="1.20" fill="#ece484"/><rect x="371.21" y="154.51" width="0.95" height="1.20" fill="#ece484"/><rect x="373.62" y="154.51" width="0.95" height="1.20" fill="#ece484"/><rect x="375.22" y="154.51" width="0.95" height="1.20" fill="#ece484"/><rect x="376.03" y="157.00" width="0.95" height="1.20" fill="#ece484"/><rect x="376.83" y="157.00" width="0.95" height="1.20" fill="#ece484"/><rect x="377.63" y="159.49" width="0.95" height="1.20" fill="#ece484"/><rect x="379.24" y="159.49" width="0.95" height="1.20" fill="#ece484"/><rect x="380.04" y="159.59" width="0.95" height="5.98" fill="#1486f0"/><rect x="381.64" y="162.08" width="0.95" height="3.49" fill="#ff1010"/><rect x="382.45" y="161.98" width="0.95" height="1.20" fill="#ece484"/><rect x="386.46" y="157.00" width="0.95" height="1.20" fill="#ece484"/><rect x="387.26" y="154.61" width="0.95" height="3.49" fill="#ff1010"/><rect x="388.86" y="152.12" width="0.95" height="3.49" fill="#ff1010"/><rect x="389.67" y="152.02" width="0.95" height="1.20" fill="#ece484"/><rect x="392.07" y="154.51" width="0.95" height="1.20" fill="#ece484"/><rect x="394.48" y="154.51" width="0.95" height="1.20" fill="#ece484"/><rect x="395.28" y="154.51" width="0.95" height="1.20" fill="#ece484"/><rect x="397.69" y="157.00" width="0.95" height="1.20" fill="#ece484"/><rect x="398.49" y="157.00" width="0.95" height="1.20" fill="#ece484"/><rect x="400.90" y="159.49" width="0.95" height="1.20" fill="#ece484"/><rect x="401.70" y="159.59" width="0.95" height="3.49" fill="#1486f0"/><rect x="402.50" y="157.00" width="0.95" height="1.20" fill="#ece484"/><rect x="404.11" y="157.00" width="0.95" height="1.20" fill="#ece484"/><rect x="404.91" y="154.61" width="0.95" height="3.49" fill="#ff1010"/><rect x="405.71" y="154.51" width="0.95" height="1.20" fill="#ece484"/><rect x="407.32" y="149.53" width="0.95" height="1.20" fill="#ece484"/><rect x="408.12" y="147.04" width="0.95" height="1.20" fill="#ece484"/><rect x="408.92" y="147.04" width="0.95" height="1.20" fill="#ece484"/><rect x="409.72" y="147.04" width="0.95" height="1.20" fill="#ece484"/><rect x="412.13" y="147.04" width="0.95" height="1.20" fill="#ece484"/><rect x="412.93" y="144.55" width="0.95" height="1.20" fill="#ece484"/><rect x="414.54" y="144.55" width="0.95" height="1.20" fill="#ece484"/><rect x="415.34" y="142.06" width="0.95" height="1.20" fill="#ece484"/><rect x="416.95" y="142.16" width="0.95" height="8.47" fill="#1486f0"/><rect x="418.55" y="147.04" width="0.95" height="1.20" fill="#ece484"/><rect x="419.35" y="147.04" width="0.95" height="1.20" fill="#ece484"/><rect x="420.16" y="144.55" width="0.95" height="1.20" fill="#ece484"/><rect x="422.56" y="144.55" width="0.95" height="1.20" fill="#ece484"/><rect x="425.77" y="144.65" width="0.95" height="3.49" fill="#1486f0"/><rect x="426.57" y="144.55" width="0.95" height="1.20" fill="#ece484"/><rect x="427.38" y="142.06" width="0.95" height="1.20" fill="#ece484"/><rect x="428.18" y="142.06" width="0.95" height="1.20" fill="#ece484"/><rect x="428.98" y="142.06" width="0.95" height="1.20" fill="#ece484"/><rect x="429.78" y="139.67" width="0.95" height="3.49" fill="#ff1010"/><rect x="430.59" y="142.06" width="0.95" height="1.20" fill="#ece484"/><rect x="433.79" y="142.06" width="0.95" height="1.20" fill="#ece484"/><rect x="434.60" y="137.18" width="0.95" height="5.98" fill="#ff1010"/><rect x="435.40" y="139.57" width="0.95" height="1.20" fill="#ece484"/><rect x="437.00" y="134.59" width="0.95" height="1.20" fill="#ece484"/><rect x="437.81" y="132.10" width="0.95" height="1.20" fill="#ece484"/><rect x="439.41" y="129.61" width="0.95" height="1.20" fill="#ece484"/><rect x="440.21" y="129.61" width="0.95" height="1.20" fill="#ece484"/><rect x="441.82" y="127.12" width="0.95" height="1.20" fill="#ece484"/><rect x="442.62" y="127.12" width="0.95" height="1.20" fill="#ece484"/><rect x="443.42" y="127.12" width="0.95" height="1.20" fill="#ece484"/><rect x="445.03" y="127.22" width="0.95" height="7.22" fill="#1486f0"/><rect x="446.63" y="132.20" width="0.95" height="3.49" fill="#1486f0"/><rect x="447.43" y="134.59" width="0.95" height="1.20" fill="#ece484"/><rect x="449.04" y="132.10" width="0.95" height="1.20" fill="#ece484"/><rect x="449.84" y="134.59" width="0.95" height="1.20" fill="#ece484"/><rect x="450.64" y="137.08" width="0.95" height="1.20" fill="#ece484"/><rect x="451.45" y="139.57" width="0.95" height="1.20" fill="#ece484"/><rect x="452.25" y="139.57" width="0.95" height="1.20" fill="#ece484"/><rect x="453.05" y="142.06" width="0.95" height="1.20" fill="#ece484"/><rect x="454.66" y="142.16" width="0.95" height="5.98" fill="#1486f0"/><rect x="455.46" y="147.04" width="0.95" height="1.20" fill="#ece484"/><rect x="456.26" y="144.55" width="0.95" height="1.20" fill="#ece484"/><rect x="457.06" y="142.06" width="0.95" height="1.20" fill="#ece484"/><rect x="457.86" y="142.06" width="0.95" height="1.20" fill="#ece484"/><rect x="458.67" y="147.04" width="0.95" height="1.20" fill="#ece484"/><rect x="459.47" y="152.02" width="0.95" height="1.20" fill="#ece484"/><rect x="460.27" y="152.12" width="0.95" height="3.49" fill="#1486f0"/><rect x="461.07" y="152.12" width="0.95" height="3.49" fill="#1486f0"/><rect x="461.88" y="154.51" width="0.95" height="1.20" fill="#ece484"/><rect x="462.68" y="154.51" width="0.95" height="1.20" fill="#ece484"/><rect x="463.48" y="157.10" width="0.95" height="3.49" fill="#ff1010"/><rect x="464.28" y="157.00" width="0.95" height="1.20" fill="#ece484"/><rect x="465.09" y="157.00" width="0.95" height="1.20" fill="#ece484"/><rect x="465.89" y="154.51" width="0.95" height="1.20" fill="#ece484"/><rect x="466.69" y="149.63" width="0.95" height="5.98" fill="#ff1010"/><rect x="467.49" y="149.53" width="0.95" height="1.20" fill="#ece484"/><rect x="468.30" y="149.53" width="0.95" height="1.20" fill="#ece484"/><rect x="469.10" y="149.63" width="0.95" height="3.49" fill="#1486f0"/><rect x="470.70" y="147.04" width="0.95" height="1.20" fill="#ece484"/><rect x="471.50" y="147.04" width="0.95" height="1.20" fill="#ece484"/><rect x="473.11" y="147.04" width="0.95" height="1.20" fill="#ece484"/><rect x="473.91" y="147.04" width="0.95" height="1.20" fill="#ece484"/><rect x="474.71" y="144.55" width="0.95" height="1.20" fill="#ece484"/><rect x="475.52" y="144.55" width="0.95" height="1.20" fill="#ece484"/><rect x="476.32" y="147.04" width="0.95" height="1.20" fill="#ece484"/><rect x="478.73" y="147.14" width="0.95" height="8.47" fill="#1486f0"/><rect x="480.33" y="152.12" width="0.95" height="3.49" fill="#ff1010"/><rect x="481.93" y="152.02" width="0.95" height="1.20" fill="#ece484"/><rect x="482.74" y="154.61" width="0.95" height="3.49" fill="#1486f0"/><rect x="484.34" y="154.51" width="0.95" height="1.20" fill="#ece484"/><rect x="485.95" y="154.51" width="0.95" height="1.20" fill="#ece484"/><rect x="486.75" y="154.51" width="0.95" height="1.20" fill="#ece484"/><rect x="487.55" y="154.51" width="0.95" height="1.20" fill="#ece484"/><rect x="489.16" y="152.02" width="0.95" height="1.20" fill="#ece484"/><rect x="489.96" y="149.53" width="0.95" height="1.20" fill="#ece484"/><rect x="490.76" y="147.14" width="0.95" height="3.49" fill="#ff1010"/><rect x="491.56" y="144.65" width="0.95" height="3.49" fill="#ff1010"/><rect x="492.37" y="147.04" width="0.95" height="1.20" fill="#ece484"/><rect x="493.97" y="147.04" width="0.95" height="1.20" fill="#ece484"/><rect x="494.77" y="144.55" width="0.95" height="1.20" fill="#ece484"/><rect x="495.57" y="142.06" width="0.95" height="1.20" fill="#ece484"/><rect x="496.38" y="139.57" width="0.95" height="1.20" fill="#ece484"/><rect x="497.18" y="137.08" width="0.95" height="1.20" fill="#ece484"/><rect x="497.98" y="134.59" width="0.95" height="1.20" fill="#ece484"/><rect x="498.78" y="132.10" width="0.95" height="1.20" fill="#ece484"/><rect x="499.59" y="132.20" width="0.95" height="8.47" fill="#1486f0"/><rect x="500.39" y="139.57" width="0.95" height="1.20" fill="#ece484"/><rect x="501.19" y="137.18" width="0.95" height="3.49" fill="#ff1010"/><rect x="501.99" y="137.08" width="0.95" height="1.20" fill="#ece484"/><rect x="502.80" y="134.69" width="0.95" height="5.98" fill="#1486f0"/><rect x="503.60" y="139.57" width="0.95" height="1.20" fill="#ece484"/><rect x="504.40" y="139.57" width="0.95" height="1.20" fill="#ece484"/><rect x="505.20" y="139.57" width="0.95" height="1.20" fill="#ece484"/><rect x="506.00" y="134.69" width="0.95" height="5.98" fill="#ff1010"/><rect x="506.81" y="137.08" width="0.95" height="1.20" fill="#ece484"/><rect x="507.61" y="134.69" width="0.95" height="8.47" fill="#1486f0"/><rect x="508.41" y="144.55" width="0.95" height="1.20" fill="#ece484"/><rect x="509.21" y="144.65" width="0.95" height="8.47" fill="#1486f0"/><rect x="510.02" y="154.51" width="0.95" height="1.20" fill="#ece484"/><rect x="510.82" y="157.00" width="0.95" height="1.20" fill="#ece484"/><rect x="512.42" y="157.10" width="0.95" height="3.49" fill="#1486f0"/><rect x="513.23" y="159.49" width="0.95" height="1.20" fill="#ece484"/><rect x="514.03" y="159.49" width="0.95" height="1.20" fill="#ece484"/><rect x="514.83" y="159.59" width="0.95" height="3.49" fill="#1486f0"/><rect x="515.63" y="161.98" width="0.95" height="1.20" fill="#ece484"/><rect x="516.44" y="159.49" width="0.95" height="1.20" fill="#ece484"/><rect x="517.24" y="159.49" width="0.95" height="1.20" fill="#ece484"/><rect x="518.04" y="157.10" width="0.95" height="3.49" fill="#ff1010"/><rect x="518.84" y="157.00" width="0.95" height="1.20" fill="#ece484"/><rect x="519.64" y="159.49" width="0.95" height="1.20" fill="#ece484"/><rect x="520.45" y="158.34" width="0.95" height="4.74" fill="#1486f0"/><rect x="521.25" y="161.98" width="0.95" height="1.20" fill="#ece484"/><rect x="522.05" y="159.49" width="0.95" height="1.20" fill="#ece484"/><rect x="524.46" y="152.12" width="0.95" height="8.47" fill="#ff1010"/><rect x="525.26" y="154.51" width="0.95" height="1.20" fill="#ece484"/><rect x="526.06" y="157.00" width="0.95" height="1.20" fill="#ece484"/><rect x="526.87" y="159.49" width="0.95" height="1.20" fill="#ece484"/><rect x="527.67" y="159.49" width="0.95" height="1.20" fill="#ece484"/><rect x="528.47" y="157.00" width="0.95" height="1.20" fill="#ece484"/><rect x="529.27" y="154.51" width="0.95" height="1.20" fill="#ece484"/><rect x="530.07" y="152.02" width="0.95" height="1.20" fill="#ece484"/><rect x="530.88" y="149.63" width="0.95" height="3.49" fill="#ff1010"/><rect x="531.68" y="147.04" width="0.95" height="1.20" fill="#ece484"/><rect x="532.48" y="147.14" width="0.95" height="3.49" fill="#1486f0"/><rect x="534.09" y="152.02" width="0.95" height="1.20" fill="#ece484"/><rect x="534.89" y="154.51" width="0.95" height="1.20" fill="#ece484"/><rect x="535.69" y="159.49" width="0.95" height="1.20" fill="#ece484"/><rect x="536.49" y="157.10" width="0.95" height="3.49" fill="#ff1010"/><rect x="537.30" y="157.00" width="0.95" height="1.20" fill="#ece484"/><rect x="539.70" y="154.61" width="0.95" height="3.49" fill="#ff1010"/><rect x="540.51" y="157.00" width="0.95" height="1.20" fill="#ece484"/><rect x="541.31" y="154.51" width="0.95" height="1.20" fill="#ece484"/><rect x="542.11" y="149.63" width="0.95" height="3.49" fill="#ece484"/><rect x="543.71" y="152.12" width="0.95" height="5.98" fill="#1486f0"/><rect x="545.32" y="157.00" width="0.95" height="1.20" fill="#ece484"/><rect x="546.92" y="159.59" width="0.95" height="3.49" fill="#1486f0"/><rect x="548.53" y="161.98" width="0.95" height="1.20" fill="#ece484"/><rect x="549.33" y="161.98" width="0.95" height="1.20" fill="#ece484"/><rect x="550.13" y="161.98" width="0.95" height="1.20" fill="#ece484"/><rect x="550.94" y="161.98" width="0.95" height="1.20" fill="#ece484"/><rect x="551.74" y="162.08" width="0.95" height="5.98" fill="#1486f0"/><rect x="552.54" y="167.06" width="0.95" height="3.49" fill="#1486f0"/><rect x="554.14" y="166.96" width="0.95" height="1.20" fill="#ece484"/><rect x="554.95" y="166.96" width="0.95" height="1.20" fill="#ece484"/><rect x="555.75" y="169.45" width="0.95" height="1.20" fill="#ece484"/><rect x="556.55" y="169.45" width="0.95" height="1.20" fill="#ece484"/><rect x="557.35" y="166.96" width="0.95" height="1.20" fill="#ece484"/><rect x="559.76" y="166.96" width="0.95" height="1.20" fill="#ece484"/><rect x="560.56" y="167.06" width="0.95" height="5.98" fill="#1486f0"/><rect x="562.97" y="169.45" width="0.95" height="1.20" fill="#ece484"/><rect x="564.58" y="162.08" width="0.95" height="8.47" fill="#ff1010"/><rect x="565.38" y="162.08" width="0.95" height="3.49" fill="#ff1010"/><rect x="566.18" y="159.49" width="0.95" height="1.20" fill="#ece484"/><rect x="566.98" y="159.49" width="0.95" height="1.20" fill="#ece484"/><rect x="567.78" y="157.10" width="0.95" height="4.73" fill="#ff1010"/><rect x="569.39" y="157.00" width="0.95" height="1.20" fill="#ece484"/><rect x="570.19" y="157.00" width="0.95" height="1.20" fill="#ece484"/><rect x="570.99" y="154.51" width="0.95" height="1.20" fill="#ece484"/><rect x="573.40" y="157.00" width="0.95" height="1.20" fill="#ece484"/><rect x="574.20" y="159.49" width="0.95" height="1.20" fill="#ece484"/><rect x="575.01" y="157.10" width="0.95" height="3.49" fill="#ece484"/><rect x="575.81" y="162.08" width="0.95" height="3.49" fill="#ece484"/><rect x="576.61" y="161.98" width="0.95" height="1.20" fill="#ece484"/><rect x="578.22" y="160.84" width="0.95" height="4.73" fill="#1486f0"/><rect x="579.02" y="162.08" width="0.95" height="3.49" fill="#ff1010"/><rect x="579.82" y="164.57" width="0.95" height="3.49" fill="#1486f0"/><rect x="580.62" y="166.96" width="0.95" height="1.20" fill="#ece484"/><rect x="581.42" y="167.06" width="0.95" height="3.49" fill="#1486f0"/><rect x="583.03" y="166.96" width="0.95" height="1.20" fill="#ece484"/><rect x="583.83" y="164.47" width="0.95" height="1.20" fill="#ece484"/><rect x="585.44" y="161.98" width="0.95" height="1.20" fill="#ece484"/><rect x="586.24" y="161.98" width="0.95" height="1.20" fill="#ece484"/><rect x="587.84" y="164.47" width="0.95" height="1.20" fill="#ece484"/><rect x="588.65" y="164.47" width="0.95" height="1.20" fill="#ece484"/><rect x="589.45" y="164.57" width="0.95" height="3.49" fill="#1486f0"/><rect x="590.25" y="167.06" width="0.95" height="3.49" fill="#1486f0"/><rect x="591.05" y="169.45" width="0.95" height="1.20" fill="#ece484"/><rect x="591.85" y="171.94" width="0.95" height="1.20" fill="#ece484"/><rect x="593.46" y="174.43" width="0.95" height="1.20" fill="#ece484"/><rect x="595.06" y="174.43" width="0.95" height="1.20" fill="#ece484"/><rect x="595.87" y="174.53" width="0.95" height="3.49" fill="#1486f0"/><rect x="596.67" y="176.92" width="0.95" height="1.20" fill="#ece484"/><rect x="597.47" y="176.92" width="0.95" height="1.20" fill="#ece484"/><rect x="598.27" y="174.53" width="0.95" height="3.49" fill="#ff1010"/><rect x="599.08" y="176.92" width="0.95" height="1.20" fill="#ece484"/><rect x="599.88" y="176.92" width="0.95" height="1.20" fill="#ece484"/><rect x="600.68" y="176.92" width="0.95" height="1.20" fill="#ece484"/><rect x="601.48" y="174.53" width="0.95" height="3.49" fill="#ff1010"/><rect x="602.29" y="174.43" width="0.95" height="1.20" fill="#ece484"/><rect x="603.09" y="171.94" width="0.95" height="1.20" fill="#ece484"/><rect x="603.89" y="174.43" width="0.95" height="1.20" fill="#ece484"/><rect x="604.69" y="172.04" width="0.95" height="3.49" fill="#ff1010"/><rect x="606.30" y="169.55" width="0.95" height="3.49" fill="#ff1010"/><rect x="607.10" y="169.45" width="0.95" height="1.20" fill="#ece484"/><rect x="607.90" y="166.96" width="0.95" height="1.20" fill="#ece484"/><rect x="608.70" y="167.06" width="0.95" height="3.49" fill="#1486f0"/><rect x="609.51" y="167.06" width="0.95" height="3.49" fill="#ff1010"/><rect x="610.31" y="166.96" width="0.95" height="1.20" fill="#ece484"/><rect x="611.11" y="166.96" width="0.95" height="1.20" fill="#ece484"/><rect x="611.91" y="164.57" width="0.95" height="3.49" fill="#ff1010"/><rect x="612.72" y="159.49" width="0.95" height="1.20" fill="#ece484"/><rect x="613.52" y="159.49" width="0.95" height="1.20" fill="#ece484"/><rect x="614.32" y="154.61" width="0.95" height="3.49" fill="#ece484"/><rect x="615.12" y="157.00" width="0.95" height="1.20" fill="#ece484"/><rect x="615.92" y="157.00" width="0.95" height="1.20" fill="#ece484"/><rect x="616.73" y="157.00" width="0.95" height="1.20" fill="#ece484"/><rect x="617.53" y="157.00" width="0.95" height="1.20" fill="#ece484"/><rect x="618.33" y="157.00" width="0.95" height="1.20" fill="#ece484"/><rect x="619.94" y="152.12" width="0.95" height="5.98" fill="#ff1010"/><rect x="620.74" y="149.53" width="0.95" height="1.20" fill="#ece484"/><rect x="621.54" y="147.14" width="0.95" height="3.49" fill="#1486f0"/><rect x="622.34" y="147.04" width="0.95" height="1.20" fill="#ece484"/><rect x="623.15" y="147.04" width="0.95" height="1.20" fill="#ece484"/><rect x="623.95" y="149.53" width="0.95" height="1.20" fill="#ece484"/><rect x="624.75" y="148.38" width="0.95" height="4.74" fill="#1486f0"/><rect x="625.55" y="152.02" width="0.95" height="1.20" fill="#ece484"/><rect x="626.36" y="149.63" width="0.95" height="5.98" fill="#1486f0"/><rect x="627.16" y="154.51" width="0.95" height="1.20" fill="#ece484"/><rect x="627.96" y="159.49" width="0.95" height="1.20" fill="#ece484"/><rect x="628.76" y="154.51" width="0.95" height="1.20" fill="#ece484"/><rect x="630.37" y="152.12" width="0.95" height="4.74" fill="#ff1010"/><rect x="631.17" y="149.53" width="0.95" height="1.20" fill="#ece484"/><rect x="631.97" y="149.63" width="0.95" height="3.49" fill="#ece484"/><rect x="632.77" y="149.53" width="0.95" height="1.20" fill="#ece484"/><rect x="634.38" y="149.63" width="0.95" height="4.74" fill="#1486f0"/><rect x="635.18" y="152.12" width="0.95" height="3.49" fill="#1486f0"/><rect x="635.98" y="152.02" width="0.95" height="1.20" fill="#ece484"/><rect x="636.79" y="152.02" width="0.95" height="1.20" fill="#ece484"/><rect x="638.39" y="152.12" width="0.95" height="4.74" fill="#1486f0"/><rect x="639.19" y="152.02" width="0.95" height="1.20" fill="#ece484"/><rect x="639.99" y="149.53" width="0.95" height="1.20" fill="#ece484"/><rect x="640.80" y="149.53" width="0.95" height="1.20" fill="#ece484"/><rect x="641.60" y="149.63" width="0.95" height="5.98" fill="#1486f0"/><rect x="642.40" y="149.63" width="0.95" height="8.47" fill="#ff1010"/><rect x="643.20" y="139.67" width="0.95" height="10.96" fill="#ff1010"/><rect x="644.81" y="137.08" width="0.95" height="1.20" fill="#ece484"/><rect x="645.61" y="137.18" width="0.95" height="3.49" fill="#1486f0"/><rect x="646.41" y="139.57" width="0.95" height="1.20" fill="#ece484"/><rect x="647.22" y="139.57" width="0.95" height="1.20" fill="#ece484"/><rect x="648.02" y="137.18" width="0.95" height="3.49" fill="#ff1010"/><rect x="648.82" y="137.08" width="0.95" height="1.20" fill="#ece484"/><rect x="649.62" y="134.59" width="0.95" height="1.20" fill="#ece484"/><rect x="650.43" y="132.10" width="0.95" height="1.20" fill="#ece484"/><rect x="651.23" y="129.61" width="0.95" height="1.20" fill="#ece484"/><rect x="652.83" y="127.12" width="0.95" height="1.20" fill="#ece484"/><rect x="653.63" y="129.61" width="0.95" height="1.20" fill="#ece484"/><rect x="654.44" y="129.71" width="0.95" height="3.49" fill="#1486f0"/><rect x="655.24" y="134.59" width="0.95" height="1.20" fill="#ece484"/><rect x="656.04" y="137.08" width="0.95" height="1.20" fill="#ece484"/><rect x="656.84" y="137.08" width="0.95" height="1.20" fill="#ece484"/><rect x="657.65" y="130.95" width="0.95" height="7.23" fill="#ff1010"/><rect x="658.45" y="128.47" width="0.95" height="4.73" fill="#ff1010"/><rect x="659.25" y="127.22" width="0.95" height="3.49" fill="#ff1010"/><rect x="660.05" y="132.10" width="0.95" height="1.20" fill="#ece484"/><rect x="660.86" y="132.20" width="0.95" height="5.98" fill="#1486f0"/><rect x="661.66" y="137.18" width="0.95" height="3.49" fill="#1486f0"/><rect x="662.46" y="139.57" width="0.95" height="1.20" fill="#ece484"/><rect x="663.26" y="137.18" width="0.95" height="3.49" fill="#ff1010"/><rect x="664.06" y="134.59" width="0.95" height="1.20" fill="#ece484"/><rect x="664.87" y="132.20" width="0.95" height="10.96" fill="#1486f0"/><rect x="665.67" y="142.16" width="0.95" height="5.98" fill="#1486f0"/><rect x="666.47" y="145.90" width="0.95" height="4.73" fill="#1486f0"/><rect x="667.27" y="149.53" width="0.95" height="1.20" fill="#ece484"/><rect x="668.08" y="149.53" width="0.95" height="1.20" fill="#ece484"/><rect x="668.88" y="148.38" width="0.95" height="4.74" fill="#1486f0"/><rect x="670.48" y="147.14" width="0.95" height="5.98" fill="#ff1010"/><rect x="671.29" y="144.55" width="0.95" height="1.20" fill="#ece484"/><rect x="673.69" y="137.18" width="0.95" height="9.71" fill="#ff1010"/><rect x="674.50" y="134.69" width="0.95" height="3.49" fill="#ff1010"/><rect x="675.30" y="134.59" width="0.95" height="1.20" fill="#ece484"/><rect x="676.10" y="134.59" width="0.95" height="1.20" fill="#ece484"/><rect x="676.90" y="132.20" width="0.95" height="3.49" fill="#ff1010"/><rect x="677.70" y="132.10" width="0.95" height="1.20" fill="#ece484"/><rect x="678.51" y="128.47" width="0.95" height="4.73" fill="#ff1010"/><rect x="679.31" y="132.10" width="0.95" height="1.20" fill="#ece484"/><rect x="680.11" y="132.20" width="0.95" height="8.47" fill="#1486f0"/><rect x="680.91" y="137.08" width="0.95" height="1.20" fill="#ece484"/><rect x="681.72" y="134.69" width="0.95" height="3.49" fill="#ff1010"/><rect x="682.52" y="130.95" width="0.95" height="4.74" fill="#ff1010"/><rect x="683.32" y="129.61" width="0.95" height="1.20" fill="#ece484"/><rect x="684.12" y="129.61" width="0.95" height="1.20" fill="#ece484"/><rect x="684.93" y="129.71" width="0.95" height="7.22" fill="#1486f0"/><rect x="686.53" y="134.69" width="0.95" height="4.74" fill="#1486f0"/><rect x="687.33" y="134.59" width="0.95" height="1.20" fill="#ece484"/><rect x="688.13" y="134.59" width="0.95" height="1.20" fill="#ece484"/><rect x="689.74" y="134.69" width="0.95" height="5.98" fill="#1486f0"/><rect x="690.54" y="139.57" width="0.95" height="1.20" fill="#ece484"/><rect x="691.34" y="139.57" width="0.95" height="1.20" fill="#ece484"/><rect x="692.15" y="137.18" width="0.95" height="4.74" fill="#ff1010"/><rect x="692.95" y="132.20" width="0.95" height="5.98" fill="#ff1010"/><rect x="693.75" y="134.59" width="0.95" height="1.20" fill="#ece484"/><rect x="694.55" y="133.44" width="0.95" height="7.23" fill="#1486f0"/><rect x="696.16" y="139.67" width="0.95" height="10.96" fill="#1486f0"/><rect x="697.76" y="147.14" width="0.95" height="8.47" fill="#1486f0"/><rect x="698.57" y="154.51" width="0.95" height="1.20" fill="#ece484"/><rect x="699.37" y="154.61" width="0.95" height="3.49" fill="#1486f0"/><rect x="700.17" y="159.49" width="0.95" height="1.20" fill="#ece484"/><rect x="701.77" y="157.00" width="0.95" height="1.20" fill="#ece484"/><rect x="702.58" y="153.37" width="0.95" height="4.74" fill="#ff1010"/><rect x="703.38" y="152.12" width="0.95" height="3.49" fill="#ff1010"/><rect x="704.18" y="145.90" width="0.95" height="7.22" fill="#ff1010"/><rect x="704.98" y="144.55" width="0.95" height="1.20" fill="#ece484"/><rect x="706.59" y="134.69" width="0.95" height="12.21" fill="#ff1010"/><rect x="707.39" y="128.47" width="0.95" height="7.22" fill="#ff1010"/><rect x="708.19" y="129.61" width="0.95" height="1.20" fill="#ece484"/><rect x="709.00" y="127.12" width="0.95" height="1.20" fill="#ece484"/><rect x="709.80" y="124.73" width="0.95" height="3.49" fill="#ff1010"/><rect x="710.60" y="121.00" width="0.95" height="4.73" fill="#ff1010"/><rect x="711.40" y="122.14" width="0.95" height="1.20" fill="#ece484"/><rect x="713.01" y="114.77" width="0.95" height="8.47" fill="#ff1010"/><rect x="714.61" y="114.67" width="0.95" height="1.20" fill="#ece484"/><rect x="715.41" y="114.67" width="0.95" height="1.20" fill="#ece484"/><rect x="716.22" y="112.18" width="0.95" height="1.20" fill="#ece484"/><rect x="717.02" y="112.18" width="0.95" height="1.20" fill="#ece484"/><rect x="717.82" y="112.18" width="0.95" height="1.20" fill="#ece484"/><rect x="718.62" y="112.28" width="0.95" height="3.49" fill="#ece484"/><rect x="719.43" y="114.67" width="0.95" height="1.20" fill="#ece484"/><rect x="720.23" y="114.67" width="0.95" height="1.20" fill="#ece484"/><rect x="721.03" y="114.67" width="0.95" height="1.20" fill="#ece484"/><rect x="721.83" y="107.30" width="0.95" height="8.47" fill="#ff1010"/><rect x="722.64" y="104.81" width="0.95" height="3.49" fill="#ff1010"/><rect x="724.24" y="104.71" width="0.95" height="1.20" fill="#ece484"/><rect x="725.04" y="107.20" width="0.95" height="1.20" fill="#ece484"/><rect x="725.84" y="107.30" width="0.95" height="3.49" fill="#1486f0"/><rect x="726.65" y="109.69" width="0.95" height="1.20" fill="#ece484"/><rect x="727.45" y="109.69" width="0.95" height="1.20" fill="#ece484"/><rect x="728.25" y="109.69" width="0.95" height="1.20" fill="#ece484"/><rect x="729.05" y="109.69" width="0.95" height="1.20" fill="#ece484"/><rect x="729.86" y="107.20" width="0.95" height="1.20" fill="#ece484"/><rect x="730.66" y="107.30" width="0.95" height="5.98" fill="#1486f0"/><rect x="731.46" y="112.28" width="0.95" height="3.49" fill="#1486f0"/><rect x="733.07" y="114.77" width="0.95" height="5.98" fill="#1486f0"/><rect x="733.87" y="119.65" width="0.95" height="1.20" fill="#ece484"/><rect x="734.67" y="114.77" width="0.95" height="5.98" fill="#ff1010"/><rect x="735.47" y="109.79" width="0.95" height="5.98" fill="#ff1010"/><rect x="736.28" y="104.81" width="0.95" height="7.23" fill="#ff1010"/><rect x="737.08" y="99.83" width="0.95" height="5.98" fill="#ff1010"/><rect x="738.68" y="99.73" width="0.95" height="1.20" fill="#ece484"/><rect x="739.48" y="99.73" width="0.95" height="1.20" fill="#ece484"/><rect x="740.29" y="99.83" width="0.95" height="3.49" fill="#1486f0"/><rect x="741.09" y="99.73" width="0.95" height="1.20" fill="#ece484"/><rect x="742.69" y="99.83" width="0.95" height="3.49" fill="#1486f0"/><rect x="743.50" y="102.32" width="0.95" height="5.98" fill="#1486f0"/><rect x="744.30" y="107.20" width="0.95" height="1.20" fill="#ece484"/><rect x="745.10" y="107.20" width="0.95" height="1.20" fill="#ece484"/><rect x="745.90" y="104.81" width="0.95" height="5.98" fill="#ff1010"/><rect x="746.71" y="104.71" width="0.95" height="1.20" fill="#ece484"/><rect x="747.51" y="104.81" width="0.95" height="3.49" fill="#1486f0"/><rect x="748.31" y="104.71" width="0.95" height="1.20" fill="#ece484"/><rect x="749.11" y="104.71" width="0.95" height="1.20" fill="#ece484"/><rect x="749.91" y="104.71" width="0.95" height="1.20" fill="#ece484"/><rect x="750.72" y="99.83" width="0.95" height="5.98" fill="#ff1010"/><rect x="751.52" y="94.85" width="0.95" height="5.98" fill="#ff1010"/><rect x="752.32" y="94.85" width="0.95" height="3.49" fill="#1486f0"/><rect x="753.12" y="89.87" width="0.95" height="7.22" fill="#ff1010"/><rect x="753.93" y="89.77" width="0.95" height="1.20" fill="#ece484"/><rect x="754.73" y="87.28" width="0.95" height="1.20" fill="#ece484"/><rect x="755.53" y="87.38" width="0.95" height="3.49" fill="#ff1010"/><rect x="756.33" y="92.26" width="0.95" height="1.20" fill="#ece484"/><rect x="757.14" y="92.26" width="0.95" height="1.20" fill="#ece484"/><rect x="757.94" y="92.26" width="0.95" height="1.20" fill="#ece484"/><rect x="758.74" y="94.75" width="0.95" height="1.20" fill="#ece484"/><rect x="759.54" y="89.87" width="0.95" height="5.98" fill="#ff1010"/><rect x="761.15" y="89.77" width="0.95" height="1.20" fill="#ece484"/><rect x="762.75" y="89.87" width="0.95" height="3.49" fill="#1486f0"/><rect x="763.55" y="89.87" width="0.95" height="5.98" fill="#ff1010"/><rect x="764.36" y="87.38" width="0.95" height="3.49" fill="#ff1010"/><rect x="765.16" y="87.28" width="0.95" height="1.20" fill="#ece484"/><rect x="765.96" y="87.38" width="0.95" height="9.71" fill="#1486f0"/><rect x="766.76" y="97.24" width="0.95" height="1.20" fill="#ece484"/><rect x="767.57" y="97.34" width="0.95" height="5.98" fill="#1486f0"/><rect x="768.37" y="99.83" width="0.95" height="3.49" fill="#ff1010"/><rect x="769.17" y="99.73" width="0.95" height="1.20" fill="#ece484"/><rect x="769.97" y="99.73" width="0.95" height="1.20" fill="#ece484"/><rect x="770.78" y="94.85" width="0.95" height="5.98" fill="#ff1010"/><rect x="771.58" y="92.36" width="0.95" height="3.49" fill="#ff1010"/><rect x="772.38" y="94.75" width="0.95" height="1.20" fill="#ece484"/><rect x="773.18" y="94.75" width="0.95" height="1.20" fill="#ece484"/><rect x="773.98" y="97.24" width="0.95" height="1.20" fill="#ece484"/><rect x="774.79" y="94.85" width="0.95" height="5.98" fill="#ff1010"/><rect x="775.59" y="92.36" width="0.95" height="3.49" fill="#ff1010"/><rect x="776.39" y="89.77" width="0.95" height="1.20" fill="#ece484"/><rect x="778.00" y="84.89" width="0.95" height="5.98" fill="#ff1010"/><rect x="778.80" y="84.89" width="0.95" height="3.49" fill="#1486f0"/><rect x="779.60" y="87.38" width="0.95" height="3.49" fill="#1486f0"/><rect x="780.40" y="87.38" width="0.95" height="5.98" fill="#ff1010"/><rect x="781.21" y="84.79" width="0.95" height="1.20" fill="#ece484"/><rect x="782.01" y="82.40" width="0.95" height="3.49" fill="#ff1010"/><rect x="782.81" y="84.79" width="0.95" height="1.20" fill="#ece484"/><rect x="783.61" y="84.79" width="0.95" height="1.20" fill="#ece484"/><rect x="784.42" y="82.30" width="0.95" height="1.20" fill="#ece484"/><rect x="785.22" y="79.81" width="0.95" height="1.20" fill="#ece484"/><rect x="786.02" y="77.42" width="0.95" height="5.98" fill="#ff1010"/><rect x="786.82" y="72.44" width="0.95" height="5.98" fill="#ff1010"/><rect x="787.62" y="72.44" width="0.95" height="5.98" fill="#1486f0"/><rect x="788.43" y="74.93" width="0.95" height="5.98" fill="#ff1010"/><rect x="789.23" y="72.44" width="0.95" height="5.98" fill="#ff1010"/><rect x="790.03" y="72.44" width="0.95" height="3.49" fill="#1486f0"/><rect x="790.83" y="72.44" width="0.95" height="3.49" fill="#ff1010"/><rect x="791.64" y="69.85" width="0.95" height="1.20" fill="#ece484"/><rect x="792.44" y="69.85" width="0.95" height="1.20" fill="#ece484"/><rect x="793.24" y="69.95" width="0.95" height="5.98" fill="#1486f0"/><rect x="794.04" y="74.93" width="0.95" height="5.98" fill="#1486f0"/><rect x="794.85" y="79.91" width="0.95" height="5.98" fill="#1486f0"/><rect x="795.65" y="83.64" width="0.95" height="4.73" fill="#1486f0"/><rect x="796.45" y="84.79" width="0.95" height="1.20" fill="#ece484"/><rect x="797.25" y="82.40" width="0.95" height="3.49" fill="#ff1010"/><rect x="798.05" y="82.30" width="0.95" height="1.20" fill="#ece484"/><rect x="798.86" y="79.91" width="0.95" height="5.98" fill="#ff1010"/><rect x="799.66" y="79.81" width="0.95" height="1.20" fill="#ece484"/><rect x="800.46" y="79.81" width="0.95" height="1.20" fill="#ece484"/><rect x="801.26" y="79.81" width="0.95" height="1.20" fill="#ece484"/><rect x="802.07" y="79.91" width="0.95" height="5.98" fill="#1486f0"/><rect x="802.87" y="82.40" width="0.95" height="3.49" fill="#1486f0"/><rect x="803.67" y="84.79" width="0.95" height="1.20" fill="#ece484"/><rect x="804.47" y="84.89" width="0.95" height="3.49" fill="#1486f0"/><rect x="805.28" y="87.28" width="0.95" height="1.20" fill="#ece484"/><rect x="806.08" y="87.28" width="0.95" height="1.20" fill="#ece484"/><rect x="806.88" y="87.38" width="0.95" height="3.49" fill="#1486f0"/><rect x="807.68" y="89.77" width="0.95" height="1.20" fill="#ece484"/><rect x="808.49" y="88.62" width="0.95" height="4.73" fill="#1486f0"/><rect x="809.29" y="92.36" width="0.95" height="5.98" fill="#1486f0"/><rect x="810.09" y="99.73" width="0.95" height="1.20" fill="#ece484"/><rect x="811.69" y="99.73" width="0.95" height="1.20" fill="#ece484"/><rect x="812.50" y="99.73" width="0.95" height="1.20" fill="#ece484"/><rect x="813.30" y="99.83" width="0.95" height="3.49" fill="#1486f0"/><rect x="814.10" y="97.34" width="0.95" height="3.49" fill="#ff1010"/><rect x="814.90" y="97.24" width="0.95" height="1.20" fill="#ece484"/><rect x="815.71" y="94.85" width="0.95" height="4.74" fill="#ff1010"/><rect x="816.51" y="94.75" width="0.95" height="1.20" fill="#ece484"/><rect x="817.31" y="94.85" width="0.95" height="3.49" fill="#1486f0"/><rect x="818.92" y="94.75" width="0.95" height="1.20" fill="#ece484"/><rect x="819.72" y="94.75" width="0.95" height="1.20" fill="#ece484"/><rect x="820.52" y="89.87" width="0.95" height="3.49" fill="#1486f0"/><rect x="821.32" y="89.77" width="0.95" height="1.20" fill="#ece484"/><rect x="822.12" y="89.77" width="0.95" height="1.20" fill="#ece484"/><rect x="822.93" y="84.89" width="0.95" height="3.49" fill="#1486f0"/><rect x="823.73" y="87.28" width="0.95" height="1.20" fill="#ece484"/><rect x="824.53" y="84.89" width="0.95" height="3.49" fill="#ff1010"/><rect x="825.33" y="84.79" width="0.95" height="1.20" fill="#ece484"/><rect x="826.94" y="82.40" width="0.95" height="3.49" fill="#ff1010"/><rect x="827.74" y="82.40" width="0.95" height="3.49" fill="#1486f0"/><rect x="828.54" y="84.79" width="0.95" height="1.20" fill="#ece484"/><rect x="829.35" y="84.89" width="0.95" height="5.98" fill="#1486f0"/><rect x="830.15" y="87.28" width="0.95" height="1.20" fill="#ece484"/><rect x="830.95" y="87.28" width="0.95" height="1.20" fill="#ece484"/><rect x="831.75" y="84.89" width="0.95" height="3.49" fill="#ff1010"/><rect x="832.56" y="84.79" width="0.95" height="1.20" fill="#ece484"/><rect x="833.36" y="84.79" width="0.95" height="1.20" fill="#ece484"/><rect x="834.16" y="84.89" width="0.95" height="4.73" fill="#1486f0"/><rect x="834.96" y="87.38" width="0.95" height="5.98" fill="#1486f0"/><rect x="835.76" y="92.26" width="0.95" height="1.20" fill="#ece484"/><rect x="836.57" y="92.26" width="0.95" height="1.20" fill="#ece484"/><rect x="837.37" y="92.26" width="0.95" height="1.20" fill="#ece484"/><rect x="838.17" y="87.38" width="0.95" height="3.49" fill="#ece484"/><rect x="839.78" y="87.28" width="0.95" height="1.20" fill="#ece484"/><rect x="840.58" y="84.89" width="0.95" height="3.49" fill="#ff1010"/><rect x="841.38" y="84.79" width="0.95" height="1.20" fill="#ece484"/><rect x="842.18" y="82.40" width="0.95" height="3.49" fill="#ff1010"/><rect x="843.79" y="82.30" width="0.95" height="1.20" fill="#ece484"/><rect x="844.59" y="79.81" width="0.95" height="1.20" fill="#ece484"/><rect x="846.20" y="79.81" width="0.95" height="1.20" fill="#ece484"/><rect x="848.60" y="82.30" width="0.95" height="1.20" fill="#ece484"/><rect x="849.40" y="82.40" width="0.95" height="3.49" fill="#1486f0"/><rect x="850.21" y="84.79" width="0.95" height="1.20" fill="#ece484"/><rect x="851.01" y="84.79" width="0.95" height="1.20" fill="#ece484"/><rect x="851.81" y="84.89" width="0.95" height="5.98" fill="#1486f0"/><rect x="852.61" y="87.28" width="0.95" height="1.20" fill="#ece484"/><rect x="855.82" y="87.28" width="0.95" height="1.20" fill="#ece484"/><rect x="857.43" y="89.77" width="0.95" height="1.20" fill="#ece484"/><rect x="858.23" y="89.77" width="0.95" height="1.20" fill="#ece484"/><rect x="859.03" y="89.77" width="0.95" height="1.20" fill="#ece484"/><rect x="861.44" y="84.89" width="0.95" height="5.98" fill="#ff1010"/><rect x="862.24" y="87.28" width="0.95" height="1.20" fill="#ece484"/><rect x="863.04" y="87.28" width="0.95" height="1.20" fill="#ece484"/><rect x="863.85" y="87.38" width="0.95" height="5.98" fill="#1486f0"/><rect x="866.25" y="89.87" width="0.95" height="5.98" fill="#1486f0"/><rect x="867.06" y="94.75" width="0.95" height="1.20" fill="#ece484"/><rect x="867.86" y="97.24" width="0.95" height="1.20" fill="#ece484"/><rect x="869.46" y="99.73" width="0.95" height="1.20" fill="#ece484"/><rect x="870.27" y="99.73" width="0.95" height="1.20" fill="#ece484"/><rect x="871.07" y="99.73" width="0.95" height="1.20" fill="#ece484"/><rect x="871.87" y="99.73" width="0.95" height="1.20" fill="#ece484"/><rect x="872.67" y="99.73" width="0.95" height="1.20" fill="#ece484"/><rect x="875.88" y="99.83" width="0.95" height="5.98" fill="#1486f0"/><rect x="876.68" y="104.71" width="0.95" height="1.20" fill="#ece484"/><rect x="877.49" y="104.81" width="0.95" height="3.49" fill="#1486f0"/><rect x="879.89" y="107.20" width="0.95" height="1.20" fill="#ece484"/><rect x="880.70" y="107.20" width="0.95" height="1.20" fill="#ece484"/><rect x="881.50" y="104.71" width="0.95" height="1.20" fill="#ece484"/><rect x="882.30" y="104.71" width="0.95" height="1.20" fill="#ece484"/><rect x="883.90" y="103.56" width="0.95" height="7.23" fill="#1486f0"/><rect x="884.71" y="109.79" width="0.95" height="7.23" fill="#1486f0"/><rect x="885.51" y="117.16" width="0.95" height="1.20" fill="#ece484"/><rect x="886.31" y="114.77" width="0.95" height="5.98" fill="#1486f0"/><rect x="887.92" y="122.14" width="0.95" height="1.20" fill="#ece484"/><rect x="888.72" y="119.65" width="0.95" height="1.20" fill="#ece484"/><rect x="889.52" y="117.16" width="0.95" height="1.20" fill="#ece484"/><rect x="890.32" y="119.65" width="0.95" height="1.20" fill="#ece484"/><rect x="891.13" y="119.65" width="0.95" height="1.20" fill="#ece484"/><rect x="891.93" y="122.14" width="0.95" height="1.20" fill="#ece484"/><rect x="892.73" y="119.65" width="0.95" height="1.20" fill="#ece484"/><rect x="893.53" y="114.77" width="0.95" height="5.98" fill="#ff1010"/><rect x="894.34" y="112.18" width="0.95" height="1.20" fill="#ece484"/><rect x="895.14" y="107.30" width="0.95" height="8.47" fill="#ff1010"/><rect x="895.94" y="109.69" width="0.95" height="1.20" fill="#ece484"/><rect x="896.74" y="109.79" width="0.95" height="8.47" fill="#1486f0"/><rect x="897.54" y="122.14" width="0.95" height="1.20" fill="#ece484"/><rect x="898.35" y="117.26" width="0.95" height="5.98" fill="#ff1010"/><rect x="899.15" y="114.67" width="0.95" height="1.20" fill="#ece484"/><rect x="899.95" y="112.18" width="0.95" height="1.20" fill="#ece484"/><rect x="900.75" y="112.18" width="0.95" height="1.20" fill="#ece484"/><rect x="901.56" y="109.69" width="0.95" height="1.20" fill="#ece484"/><rect x="902.36" y="109.69" width="0.95" height="1.20" fill="#ece484"/><rect x="903.16" y="109.69" width="0.95" height="1.20" fill="#ece484"/><rect x="903.96" y="109.69" width="0.95" height="1.20" fill="#ece484"/><rect x="904.77" y="109.69" width="0.95" height="1.20" fill="#ece484"/><rect x="905.57" y="106.06" width="0.95" height="4.73" fill="#ff1010"/><rect x="909.58" y="102.22" width="0.95" height="1.20" fill="#ece484"/><rect x="910.38" y="99.73" width="0.95" height="1.20" fill="#ece484"/><rect x="911.18" y="97.24" width="0.95" height="1.20" fill="#ece484"/><rect x="912.79" y="94.75" width="0.95" height="1.20" fill="#ece484"/><rect x="913.59" y="94.75" width="0.95" height="1.20" fill="#ece484"/><rect x="914.39" y="94.75" width="0.95" height="1.20" fill="#ece484"/><rect x="916.00" y="97.24" width="0.95" height="1.20" fill="#ece484"/><rect x="916.80" y="97.24" width="0.95" height="1.20" fill="#ece484"/><rect x="917.60" y="97.24" width="0.95" height="1.20" fill="#ece484"/><rect x="919.21" y="99.73" width="0.95" height="1.20" fill="#ece484"/><rect x="920.01" y="102.22" width="0.95" height="1.20" fill="#ece484"/><rect x="921.61" y="102.22" width="0.95" height="1.20" fill="#ece484"/><rect x="923.22" y="107.20" width="0.95" height="1.20" fill="#ece484"/><rect x="924.02" y="109.69" width="0.95" height="1.20" fill="#ece484"/><rect x="924.82" y="112.18" width="0.95" height="1.20" fill="#ece484"/><rect x="925.63" y="109.79" width="0.95" height="3.49" fill="#ff1010"/><rect x="928.84" y="107.30" width="0.95" height="3.49" fill="#ff1010"/><rect x="929.64" y="107.20" width="0.95" height="1.20" fill="#ece484"/><rect x="930.44" y="107.20" width="0.95" height="1.20" fill="#ece484"/><rect x="931.24" y="107.20" width="0.95" height="1.20" fill="#ece484"/><rect x="932.04" y="107.20" width="0.95" height="1.20" fill="#ece484"/><rect x="932.85" y="107.20" width="0.95" height="1.20" fill="#ece484"/><rect x="933.65" y="107.20" width="0.95" height="1.20" fill="#ece484"/><rect x="934.45" y="109.69" width="0.95" height="1.20" fill="#ece484"/><rect x="935.25" y="112.18" width="0.95" height="1.20" fill="#ece484"/><rect x="936.06" y="112.18" width="0.95" height="1.20" fill="#ece484"/><rect x="936.86" y="114.67" width="0.95" height="1.20" fill="#ece484"/><rect x="937.66" y="114.67" width="0.95" height="1.20" fill="#ece484"/><rect x="938.46" y="114.67" width="0.95" height="1.20" fill="#ece484"/><rect x="939.27" y="114.67" width="0.95" height="1.20" fill="#ece484"/><rect x="940.07" y="114.67" width="0.95" height="1.20" fill="#ece484"/><rect x="940.87" y="114.67" width="0.95" height="1.20" fill="#ece484"/><rect x="941.67" y="112.18" width="0.95" height="1.20" fill="#ece484"/><rect x="942.48" y="112.18" width="0.95" height="1.20" fill="#ece484"/><rect x="943.28" y="112.18" width="0.95" height="1.20" fill="#ece484"/><rect x="944.08" y="112.18" width="0.95" height="1.20" fill="#ece484"/><rect x="944.88" y="112.18" width="0.95" height="1.20" fill="#ece484"/><rect x="945.68" y="112.28" width="0.95" height="3.49" fill="#1486f0"/><rect x="946.49" y="112.28" width="0.95" height="3.49" fill="#ff1010"/><rect x="947.29" y="114.77" width="0.95" height="3.49" fill="#1486f0"/><rect x="948.09" y="117.26" width="0.95" height="3.49" fill="#1486f0"/><rect x="948.89" y="119.65" width="0.95" height="1.20" fill="#ece484"/><rect x="950.50" y="114.77" width="0.95" height="5.98" fill="#ff1010"/><rect x="951.30" y="117.16" width="0.95" height="1.20" fill="#ece484"/><rect x="952.10" y="117.26" width="0.95" height="3.49" fill="#1486f0"/><rect x="952.91" y="119.65" width="0.95" height="1.20" fill="#ece484"/><rect x="953.71" y="122.14" width="0.95" height="1.20" fill="#ece484"/><rect x="954.51" y="122.14" width="0.95" height="1.20" fill="#ece484"/><rect x="955.31" y="122.14" width="0.95" height="1.20" fill="#ece484"/><rect x="956.11" y="119.65" width="0.95" height="1.20" fill="#ece484"/><rect x="956.92" y="119.65" width="0.95" height="1.20" fill="#ece484"/><rect x="957.72" y="117.16" width="0.95" height="1.20" fill="#ece484"/><rect x="958.52" y="117.16" width="0.95" height="1.20" fill="#ece484"/><rect x="960.13" y="119.65" width="0.95" height="1.20" fill="#ece484"/><rect x="960.93" y="119.65" width="0.95" height="1.20" fill="#ece484"/><rect x="961.73" y="122.14" width="0.95" height="1.20" fill="#ece484"/><rect x="962.53" y="119.65" width="0.95" height="1.20" fill="#ece484"/><rect x="963.34" y="117.26" width="0.95" height="3.49" fill="#ff1010"/><rect x="964.14" y="117.16" width="0.95" height="1.20" fill="#ece484"/><rect x="964.94" y="117.16" width="0.95" height="1.20" fill="#ece484"/><rect x="965.74" y="117.16" width="0.95" height="1.20" fill="#ece484"/><rect x="966.55" y="119.65" width="0.95" height="1.20" fill="#ece484"/></g>
<g><rect x="7.00" y="290.00" width="1.0" height="6.00" fill="#ff1010"/><rect x="10.57" y="288.90" width="1.35" height="1.00" fill="#ece484"/><rect x="13.07" y="293.90" width="1.35" height="1.00" fill="#ece484"/><rect x="14.75" y="285.25" width="1.0" height="7.00" fill="#ff1010"/><rect x="17.00" y="289.75" width="1.0" height="3.00" fill="#ff1010"/><rect x="19.32" y="288.25" width="1.35" height="1.00" fill="#ece484"/><rect x="22.00" y="277.90" width="1.0" height="3.00" fill="#ece484"/><rect x="23.38" y="272.75" width="1.25" height="2.00" fill="#ff1010"/><rect x="25.75" y="266.60" width="1.0" height="8.00" fill="#ece484"/><rect x="28.07" y="269.15" width="1.35" height="1.70" fill="#ece484"/><rect x="30.40" y="263.50" width="1.0" height="7.00" fill="#1486f0"/><rect x="32.38" y="274.00" width="1.25" height="2.00" fill="#1486f0"/><rect x="34.25" y="277.75" width="1.0" height="7.00" fill="#1486f0"/><rect x="35.33" y="284.50" width="1.35" height="1.00" fill="#ece484"/><rect x="37.50" y="275.25" width="1.0" height="7.00" fill="#1486f0"/><rect x="40.58" y="284.50" width="1.35" height="1.00" fill="#ece484"/><rect x="42.33" y="284.50" width="1.35" height="1.00" fill="#ece484"/><rect x="44.50" y="278.60" width="1.0" height="4.00" fill="#1486f0"/><rect x="47.00" y="279.00" width="1.0" height="6.00" fill="#ff1010"/><rect x="49.98" y="278.40" width="1.25" height="2.00" fill="#1486f0"/><rect x="52.50" y="279.10" width="1.0" height="3.00" fill="#1486f0"/><rect x="54.50" y="284.50" width="1.0" height="5.00" fill="#1486f0"/><rect x="55.88" y="285.00" width="1.25" height="2.00" fill="#ff1010"/><rect x="56.83" y="290.10" width="1.35" height="1.00" fill="#ece484"/><rect x="58.83" y="279.15" width="1.35" height="1.70" fill="#ece484"/><rect x="60.10" y="280.00" width="1.0" height="6.00" fill="#1486f0"/><rect x="61.23" y="288.55" width="1.35" height="1.70" fill="#ece484"/><rect x="65.75" y="290.00" width="1.0" height="5.00" fill="#ece484"/><rect x="67.33" y="281.65" width="1.35" height="1.70" fill="#ece484"/><rect x="69.33" y="280.10" width="1.35" height="1.00" fill="#ece484"/><rect x="70.58" y="274.50" width="1.35" height="1.00" fill="#ece484"/><rect x="73.50" y="274.25" width="1.0" height="4.00" fill="#1486f0"/><rect x="76.23" y="274.50" width="1.35" height="1.00" fill="#ece484"/><rect x="77.33" y="274.50" width="1.35" height="1.00" fill="#ece484"/><rect x="79.33" y="272.00" width="1.35" height="1.00" fill="#ece484"/><rect x="81.83" y="274.50" width="1.35" height="1.00" fill="#ece484"/><rect x="83.38" y="269.00" width="1.25" height="2.00" fill="#ff1010"/><rect x="84.38" y="270.50" width="1.25" height="2.00" fill="#1486f0"/><rect x="86.83" y="272.00" width="1.35" height="1.00" fill="#ece484"/><rect x="88.33" y="278.25" width="1.35" height="1.00" fill="#ece484"/><rect x="89.92" y="274.50" width="1.35" height="1.00" fill="#ece484"/><rect x="91.33" y="276.00" width="1.35" height="1.00" fill="#ece484"/><rect x="93.73" y="270.75" width="1.35" height="1.00" fill="#ece484"/><rect x="95.33" y="272.50" width="1.35" height="1.00" fill="#ece484"/><rect x="96.83" y="274.50" width="1.35" height="1.00" fill="#ece484"/><rect x="102.33" y="270.75" width="1.35" height="1.00" fill="#ece484"/><rect x="108.08" y="272.25" width="1.35" height="1.00" fill="#ece484"/><rect x="113.08" y="276.50" width="1.35" height="1.00" fill="#ece484"/><rect x="116.28" y="274.25" width="1.25" height="1.50" fill="#ff1010"/><rect x="115.58" y="278.25" width="1.35" height="1.00" fill="#ece484"/><rect x="126.40" y="271.50" width="1.0" height="3.00" fill="#1486f0"/><rect x="129.92" y="274.15" width="1.35" height="1.70" fill="#ece484"/><rect x="131.82" y="278.11" width="1.35" height="1.27" fill="#ece484"/><rect x="133.82" y="278.11" width="1.35" height="1.27" fill="#ece484"/><rect x="136.82" y="278.11" width="1.35" height="1.27" fill="#ece484"/><rect x="138.82" y="278.11" width="1.35" height="1.27" fill="#ece484"/><rect x="141.88" y="274.40" width="1.25" height="2.00" fill="#ff1010"/><rect x="144.92" y="278.11" width="1.35" height="1.27" fill="#ece484"/><rect x="146.22" y="274.36" width="1.35" height="1.27" fill="#ece484"/><rect x="149.38" y="274.60" width="1.25" height="2.00" fill="#1486f0"/><rect x="150.32" y="276.50" width="1.35" height="1.00" fill="#ece484"/><rect x="154.32" y="274.36" width="1.35" height="1.27" fill="#ece484"/><rect x="155.82" y="274.36" width="1.35" height="1.27" fill="#ece484"/><rect x="161.32" y="274.36" width="1.35" height="1.27" fill="#ece484"/><rect x="162.82" y="274.36" width="1.35" height="1.27" fill="#ece484"/><rect x="164.32" y="274.36" width="1.35" height="1.27" fill="#ece484"/><rect x="166.82" y="274.36" width="1.35" height="1.27" fill="#ece484"/><rect x="163.72" y="271.75" width="1.35" height="1.00" fill="#ece484"/><rect x="170.82" y="267.90" width="1.35" height="1.70" fill="#ece484"/><rect x="182.22" y="276.00" width="1.35" height="1.00" fill="#ece484"/><rect x="183.72" y="279.96" width="1.35" height="1.27" fill="#ece484"/><rect x="186.82" y="279.96" width="1.35" height="1.27" fill="#ece484"/><rect x="188.78" y="284.60" width="1.25" height="2.00" fill="#1486f0"/><rect x="191.00" y="285.50" width="1.0" height="5.00" fill="#ece484"/><rect x="192.32" y="289.00" width="1.35" height="1.00" fill="#ece484"/><rect x="195.75" y="285.00" width="1.0" height="4.00" fill="#1486f0"/><rect x="196.40" y="289.75" width="1.0" height="5.00" fill="#ece484"/><rect x="198.32" y="288.11" width="1.35" height="1.27" fill="#ece484"/><rect x="200.82" y="286.36" width="1.35" height="1.27" fill="#ece484"/><rect x="204.32" y="284.61" width="1.35" height="1.27" fill="#ece484"/><rect x="206.28" y="282.50" width="1.25" height="2.50" fill="#ff1010"/><rect x="211.82" y="282.15" width="1.35" height="1.70" fill="#ece484"/><rect x="213.12" y="282.25" width="1.25" height="2.50" fill="#1486f0"/><rect x="216.82" y="281.86" width="1.35" height="1.27" fill="#ece484"/><rect x="217.90" y="273.75" width="1.0" height="5.00" fill="#ff1010"/><rect x="219.92" y="278.55" width="1.35" height="1.70" fill="#ece484"/><rect x="220.32" y="281.86" width="1.35" height="1.27" fill="#ece484"/><rect x="222.25" y="274.25" width="1.0" height="14.00" fill="#1486f0"/><rect x="225.32" y="274.15" width="1.35" height="1.70" fill="#ece484"/><rect x="226.40" y="310.40" width="1.0" height="3.00" fill="#1486f0"/><rect x="235.57" y="310.40" width="1.35" height="1.70" fill="#ece484"/><rect x="238.25" y="308.00" width="1.0" height="4.00" fill="#1486f0"/><rect x="226.75" y="310.40" width="1.0" height="8.00" fill="#1486f0"/><rect x="228.90" y="315.40" width="1.0" height="3.00" fill="#1486f0"/><rect x="231.40" y="316.00" width="1.0" height="4.00" fill="#ff1010"/><rect x="231.82" y="318.50" width="1.35" height="1.00" fill="#ece484"/><rect x="234.32" y="316.40" width="1.35" height="1.00" fill="#ece484"/><rect x="236.40" y="310.40" width="1.0" height="3.00" fill="#ece484"/><rect x="239.32" y="314.36" width="1.35" height="1.27" fill="#ece484"/><rect x="242.38" y="314.60" width="1.25" height="2.00" fill="#ff1010"/><rect x="243.82" y="314.50" width="1.35" height="1.00" fill="#ece484"/><rect x="248.72" y="318.36" width="1.35" height="1.27" fill="#ece484"/><rect x="251.32" y="318.36" width="1.35" height="1.27" fill="#ece484"/><rect x="252.82" y="318.36" width="1.35" height="1.27" fill="#ece484"/><rect x="256.22" y="315.96" width="1.35" height="1.27" fill="#ece484"/><rect x="258.72" y="318.36" width="1.35" height="1.27" fill="#ece484"/><rect x="263.07" y="310.40" width="1.35" height="1.70" fill="#ece484"/><rect x="263.38" y="310.50" width="1.25" height="1.00" fill="#ff1010"/><rect x="264.82" y="312.50" width="1.35" height="1.00" fill="#ece484"/><rect x="266.57" y="314.36" width="1.35" height="1.27" fill="#ece484"/><rect x="267.50" y="304.00" width="1.0" height="7.00" fill="#ff1010"/><rect x="271.22" y="308.11" width="1.35" height="1.27" fill="#ece484"/><rect x="273.50" y="304.10" width="1.0" height="3.00" fill="#1486f0"/><rect x="276.00" y="306.75" width="1.0" height="4.00" fill="#ff1010"/><rect x="277.82" y="308.11" width="1.35" height="1.27" fill="#ece484"/><rect x="279.57" y="312.11" width="1.35" height="1.27" fill="#ece484"/><rect x="281.40" y="314.25" width="1.0" height="4.00" fill="#1486f0"/><rect x="283.32" y="315.96" width="1.35" height="1.27" fill="#ece484"/><rect x="285.75" y="320.00" width="1.0" height="10.00" fill="#1486f0"/><rect x="287.32" y="329.96" width="1.35" height="1.27" fill="#ece484"/><rect x="290.62" y="326.50" width="1.25" height="2.00" fill="#1486f0"/><rect x="289.32" y="328.00" width="1.35" height="1.00" fill="#ece484"/><rect x="294.25" y="316.00" width="1.0" height="3.00" fill="#ff1010"/><rect x="295.57" y="314.36" width="1.35" height="1.27" fill="#ece484"/><rect x="304.75" y="311.50" width="1.0" height="3.00" fill="#1486f0"/><rect x="305.57" y="314.36" width="1.35" height="1.27" fill="#ece484"/><rect x="308.00" y="319.25" width="1.0" height="4.00" fill="#1486f0"/><rect x="309.18" y="322.00" width="1.25" height="2.00" fill="#1486f0"/><rect x="310.50" y="322.90" width="1.0" height="5.00" fill="#ff1010"/><rect x="313.72" y="327.15" width="1.35" height="1.70" fill="#ece484"/><rect x="315.32" y="326.50" width="1.35" height="1.00" fill="#ece484"/><rect x="317.32" y="326.26" width="1.35" height="1.27" fill="#ece484"/><rect x="319.93" y="323.90" width="1.35" height="1.00" fill="#ece484"/><rect x="324.57" y="326.05" width="1.35" height="1.70" fill="#ece484"/><rect x="325.32" y="322.36" width="1.35" height="1.27" fill="#ece484"/><rect x="326.22" y="318.36" width="1.35" height="1.27" fill="#ece484"/><rect x="328.32" y="315.96" width="1.35" height="1.27" fill="#ece484"/><rect x="329.32" y="312.11" width="1.35" height="1.27" fill="#ece484"/><rect x="331.88" y="306.75" width="1.25" height="2.00" fill="#ff1010"/><rect x="333.12" y="312.25" width="1.25" height="2.50" fill="#1486f0"/><rect x="335.57" y="312.11" width="1.35" height="1.27" fill="#ece484"/><rect x="343.93" y="315.96" width="1.35" height="1.27" fill="#ece484"/><rect x="349.32" y="314.36" width="1.35" height="1.27" fill="#ece484"/><rect x="350.82" y="314.36" width="1.35" height="1.27" fill="#ece484"/><rect x="353.72" y="322.05" width="1.35" height="1.70" fill="#ece484"/><rect x="358.32" y="319.96" width="1.35" height="1.27" fill="#ece484"/><rect x="357.07" y="323.96" width="1.35" height="1.27" fill="#ece484"/><rect x="359.38" y="326.50" width="1.25" height="2.00" fill="#1486f0"/><rect x="360.32" y="328.50" width="1.35" height="1.00" fill="#ece484"/><rect x="361.57" y="329.75" width="1.35" height="1.70" fill="#ece484"/><rect x="364.07" y="327.65" width="1.35" height="1.70" fill="#ece484"/><rect x="366.27" y="332.75" width="1.25" height="2.00" fill="#1486f0"/><rect x="367.82" y="332.50" width="1.35" height="1.00" fill="#ece484"/><rect x="369.93" y="332.90" width="1.35" height="1.70" fill="#ece484"/><rect x="372.40" y="332.60" width="1.0" height="6.00" fill="#1486f0"/><rect x="373.88" y="332.00" width="1.25" height="2.00" fill="#ff1010"/><rect x="375.10" y="332.25" width="1.0" height="3.00" fill="#ece484"/><rect x="376.82" y="332.36" width="1.35" height="1.27" fill="#ece484"/><rect x="377.50" y="333.60" width="1.0" height="4.00" fill="#1486f0"/><rect x="379.25" y="337.90" width="1.0" height="3.00" fill="#1486f0"/><rect x="380.50" y="336.75" width="1.0" height="4.00" fill="#ff1010"/><rect x="382.32" y="336.00" width="1.35" height="1.00" fill="#ece484"/><rect x="383.07" y="336.86" width="1.35" height="1.27" fill="#ece484"/><rect x="384.32" y="338.50" width="1.35" height="1.00" fill="#ece484"/><rect x="384.98" y="340.25" width="1.25" height="2.00" fill="#1486f0"/><rect x="385.82" y="340.00" width="1.35" height="1.00" fill="#ece484"/><rect x="389.93" y="336.36" width="1.35" height="1.27" fill="#ece484"/><rect x="391.88" y="332.50" width="1.25" height="2.00" fill="#ff1010"/><rect x="393.32" y="332.50" width="1.35" height="1.00" fill="#ece484"/><rect x="395.57" y="330.26" width="1.35" height="1.27" fill="#ece484"/><rect x="399.50" y="330.75" width="1.0" height="6.00" fill="#1486f0"/><rect x="401.82" y="332.36" width="1.35" height="1.27" fill="#ece484"/><rect x="402.82" y="327.86" width="1.35" height="1.27" fill="#ece484"/><rect x="404.32" y="323.76" width="1.35" height="1.27" fill="#ece484"/><rect x="405.57" y="322.26" width="1.35" height="1.27" fill="#ece484"/><rect x="406.22" y="318.15" width="1.35" height="1.70" fill="#ece484"/><rect x="409.32" y="318.15" width="1.35" height="1.70" fill="#ece484"/><rect x="411.00" y="315.75" width="1.0" height="3.00" fill="#ff1010"/><rect x="411.82" y="314.36" width="1.35" height="1.27" fill="#ece484"/><rect x="413.32" y="314.36" width="1.35" height="1.27" fill="#ece484"/><rect x="415.10" y="314.90" width="1.0" height="4.00" fill="#1486f0"/><rect x="418.90" y="316.00" width="1.0" height="3.00" fill="#1486f0"/><rect x="419.62" y="318.36" width="1.35" height="1.27" fill="#ece484"/><rect x="422.82" y="314.36" width="1.35" height="1.27" fill="#ece484"/><rect x="425.10" y="312.00" width="1.0" height="3.00" fill="#ff1010"/><rect x="426.82" y="314.00" width="1.35" height="1.00" fill="#ece484"/><rect x="427.82" y="315.86" width="1.35" height="1.27" fill="#ece484"/><rect x="431.62" y="310.50" width="1.25" height="2.00" fill="#ff1010"/><rect x="434.93" y="314.15" width="1.35" height="1.70" fill="#ece484"/><rect x="450.93" y="314.15" width="1.35" height="1.70" fill="#ece484"/><rect x="453.50" y="314.90" width="1.0" height="4.00" fill="#ff1010"/><rect x="452.32" y="319.96" width="1.35" height="1.27" fill="#ece484"/><rect x="455.82" y="318.15" width="1.35" height="1.70" fill="#ece484"/><rect x="456.82" y="314.50" width="1.35" height="1.00" fill="#ece484"/><rect x="459.25" y="322.40" width="1.0" height="4.00" fill="#1486f0"/><rect x="460.82" y="328.50" width="1.35" height="1.00" fill="#ece484"/><rect x="461.40" y="329.75" width="1.0" height="3.00" fill="#1486f0"/><rect x="463.25" y="328.40" width="1.0" height="12.00" fill="#ff1010"/><rect x="462.32" y="344.50" width="1.35" height="1.00" fill="#ece484"/><rect x="464.75" y="323.90" width="1.0" height="3.00" fill="#1486f0"/><rect x="460.10" y="322.40" width="1.0" height="4.00" fill="#1486f0"/><rect x="467.07" y="323.76" width="1.35" height="1.27" fill="#ece484"/><rect x="467.82" y="326.26" width="1.35" height="1.27" fill="#ece484"/><rect x="469.57" y="330.05" width="1.35" height="1.70" fill="#ece484"/><rect x="471.82" y="334.11" width="1.35" height="1.27" fill="#ece484"/><rect x="472.82" y="336.50" width="1.35" height="1.00" fill="#ece484"/><rect x="474.32" y="338.11" width="1.35" height="1.27" fill="#ece484"/><rect x="476.82" y="336.36" width="1.35" height="1.27" fill="#ece484"/><rect x="477.32" y="334.11" width="1.35" height="1.27" fill="#ece484"/><rect x="479.32" y="330.05" width="1.35" height="1.70" fill="#ece484"/><rect x="482.07" y="327.86" width="1.35" height="1.27" fill="#ece484"/><rect x="483.50" y="329.50" width="1.0" height="7.00" fill="#1486f0"/><rect x="484.93" y="330.05" width="1.35" height="1.70" fill="#ece484"/><rect x="485.57" y="338.11" width="1.35" height="1.27" fill="#ece484"/><rect x="486.27" y="340.50" width="1.25" height="2.00" fill="#1486f0"/><rect x="488.72" y="340.15" width="1.35" height="1.70" fill="#ece484"/><rect x="488.07" y="344.15" width="1.35" height="1.70" fill="#ece484"/><rect x="489.32" y="332.15" width="1.35" height="1.70" fill="#ece484"/><rect x="493.90" y="328.10" width="1.0" height="5.00" fill="#ff1010"/><rect x="496.27" y="326.25" width="1.25" height="2.00" fill="#ff1010"/><rect x="496.32" y="328.00" width="1.35" height="1.00" fill="#ece484"/><rect x="500.32" y="326.05" width="1.35" height="1.70" fill="#ece484"/><rect x="501.82" y="326.05" width="1.35" height="1.70" fill="#ece484"/><rect x="502.82" y="324.00" width="1.35" height="1.00" fill="#ece484"/><rect x="504.25" y="320.25" width="1.0" height="4.00" fill="#ff1010"/><rect x="505.75" y="312.00" width="1.0" height="3.00" fill="#ff1010"/><rect x="506.82" y="314.76" width="1.35" height="1.27" fill="#ece484"/><rect x="509.93" y="319.75" width="1.35" height="1.70" fill="#ece484"/><rect x="510.57" y="323.96" width="1.35" height="1.27" fill="#ece484"/><rect x="512.08" y="330.05" width="1.35" height="1.70" fill="#ece484"/><rect x="513.33" y="332.86" width="1.35" height="1.27" fill="#ece484"/><rect x="514.75" y="334.10" width="1.0" height="3.00" fill="#1486f0"/><rect x="515.33" y="336.50" width="1.35" height="1.00" fill="#ece484"/><rect x="519.50" y="336.40" width="1.0" height="6.00" fill="#1486f0"/><rect x="520.58" y="344.15" width="1.35" height="1.70" fill="#ece484"/><rect x="522.25" y="342.60" width="1.0" height="6.00" fill="#ff1010"/><rect x="523.33" y="343.86" width="1.35" height="1.27" fill="#ece484"/><rect x="525.10" y="338.00" width="1.0" height="4.00" fill="#ff1010"/><rect x="526.83" y="338.11" width="1.35" height="1.27" fill="#ece484"/><rect x="528.50" y="334.25" width="1.0" height="4.00" fill="#ff1010"/><rect x="529.33" y="332.36" width="1.35" height="1.27" fill="#ece484"/><rect x="530.58" y="326.05" width="1.35" height="1.70" fill="#ece484"/><rect x="531.83" y="326.26" width="1.35" height="1.27" fill="#ece484"/><rect x="533.08" y="327.86" width="1.35" height="1.27" fill="#ece484"/><rect x="536.50" y="320.25" width="1.0" height="4.00" fill="#ff1010"/><rect x="537.83" y="326.26" width="1.35" height="1.27" fill="#ece484"/><rect x="538.50" y="328.10" width="1.0" height="5.00" fill="#1486f0"/><rect x="540.58" y="333.90" width="1.35" height="1.70" fill="#ece484"/><rect x="541.83" y="334.11" width="1.35" height="1.27" fill="#ece484"/><rect x="539.33" y="336.61" width="1.35" height="1.27" fill="#ece484"/><rect x="543.08" y="336.61" width="1.35" height="1.27" fill="#ece484"/><rect x="544.12" y="336.61" width="1.35" height="1.27" fill="#ece484"/><rect x="545.33" y="334.11" width="1.35" height="1.27" fill="#ece484"/><rect x="546.23" y="338.11" width="1.35" height="1.27" fill="#ece484"/><rect x="546.83" y="341.86" width="1.35" height="1.27" fill="#ece484"/><rect x="547.62" y="343.86" width="1.35" height="1.27" fill="#ece484"/><rect x="548.33" y="345.61" width="1.35" height="1.27" fill="#ece484"/><rect x="550.83" y="340.15" width="1.35" height="1.70" fill="#ece484"/><rect x="554.33" y="340.15" width="1.35" height="1.70" fill="#ece484"/><rect x="555.58" y="341.86" width="1.35" height="1.27" fill="#ece484"/><rect x="556.83" y="340.36" width="1.35" height="1.27" fill="#ece484"/><rect x="559.93" y="340.15" width="1.35" height="1.70" fill="#ece484"/><rect x="561.33" y="341.36" width="1.35" height="1.27" fill="#ece484"/><rect x="562.33" y="341.86" width="1.35" height="1.27" fill="#ece484"/><rect x="565.83" y="336.36" width="1.35" height="1.27" fill="#ece484"/><rect x="567.33" y="333.90" width="1.35" height="1.70" fill="#ece484"/><rect x="569.33" y="326.26" width="1.35" height="1.27" fill="#ece484"/><rect x="570.83" y="328.00" width="1.35" height="1.00" fill="#ece484"/><rect x="571.75" y="324.10" width="1.0" height="3.00" fill="#ff1010"/><rect x="573.33" y="322.26" width="1.35" height="1.27" fill="#ece484"/><rect x="574.83" y="324.00" width="1.35" height="1.00" fill="#ece484"/><rect x="575.58" y="330.05" width="1.35" height="1.70" fill="#ece484"/><rect x="579.33" y="333.90" width="1.35" height="1.70" fill="#ece484"/><rect x="585.33" y="326.05" width="1.35" height="1.70" fill="#ece484"/><rect x="590.83" y="334.36" width="1.35" height="1.27" fill="#ece484"/><rect x="591.83" y="336.50" width="1.35" height="1.00" fill="#ece484"/><rect x="593.50" y="338.00" width="1.0" height="4.00" fill="#1486f0"/><rect x="594.53" y="342.00" width="1.35" height="1.00" fill="#ece484"/><rect x="598.08" y="340.11" width="1.35" height="1.27" fill="#ece484"/><rect x="601.00" y="340.60" width="1.0" height="4.00" fill="#1486f0"/><rect x="602.58" y="344.00" width="1.25" height="2.00" fill="#1486f0"/><rect x="603.90" y="345.50" width="1.0" height="3.00" fill="#ff1010"/><rect x="604.83" y="348.50" width="1.35" height="1.00" fill="#ece484"/><rect x="606.23" y="342.61" width="1.35" height="1.27" fill="#ece484"/><rect x="607.50" y="338.50" width="1.0" height="5.00" fill="#ff1010"/><rect x="608.50" y="334.50" width="1.0" height="5.00" fill="#ff1010"/><rect x="609.33" y="340.00" width="1.35" height="1.00" fill="#ece484"/><rect x="610.10" y="326.00" width="1.0" height="8.00" fill="#ff1010"/><rect x="611.75" y="315.50" width="1.0" height="8.00" fill="#ff1010"/><rect x="612.50" y="307.75" width="1.0" height="6.00" fill="#ff1010"/><rect x="613.25" y="303.75" width="1.0" height="4.00" fill="#ff1010"/><rect x="613.38" y="297.25" width="1.25" height="1.50" fill="#ff1010"/><rect x="615.75" y="296.25" width="1.0" height="4.00" fill="#1486f0"/><rect x="616.70" y="299.50" width="1.0" height="3.00" fill="#1486f0"/><rect x="616.83" y="304.15" width="1.35" height="1.70" fill="#ece484"/><rect x="618.00" y="306.90" width="1.0" height="9.00" fill="#1486f0"/><rect x="619.33" y="307.65" width="1.35" height="1.70" fill="#ece484"/><rect x="620.58" y="307.61" width="1.35" height="1.27" fill="#ece484"/><rect x="622.38" y="306.60" width="1.25" height="2.00" fill="#ff1010"/><rect x="623.00" y="308.50" width="1.0" height="3.00" fill="#1486f0"/><rect x="624.08" y="312.40" width="1.35" height="1.70" fill="#ece484"/><rect x="625.33" y="314.65" width="1.35" height="1.70" fill="#ece484"/><rect x="626.23" y="316.15" width="1.35" height="1.70" fill="#ece484"/><rect x="627.17" y="317.50" width="1.25" height="2.00" fill="#1486f0"/><rect x="628.25" y="309.50" width="1.0" height="10.00" fill="#ff1010"/><rect x="629.50" y="306.50" width="1.0" height="5.00" fill="#ff1010"/><rect x="630.10" y="302.00" width="1.0" height="5.00" fill="#ff1010"/><rect x="630.83" y="296.36" width="1.35" height="1.27" fill="#ece484"/><rect x="631.75" y="296.10" width="1.0" height="3.00" fill="#1486f0"/><rect x="632.38" y="299.00" width="1.25" height="2.00" fill="#1486f0"/><rect x="633.33" y="301.75" width="1.35" height="1.70" fill="#ece484"/><rect x="634.75" y="303.90" width="1.0" height="5.00" fill="#1486f0"/><rect x="635.83" y="310.76" width="1.35" height="1.27" fill="#ece484"/><rect x="637.25" y="300.10" width="1.0" height="5.00" fill="#ff1010"/><rect x="638.33" y="304.50" width="1.35" height="1.00" fill="#ece484"/><rect x="639.98" y="296.60" width="1.25" height="2.00" fill="#ff1010"/><rect x="639.33" y="298.50" width="1.35" height="1.00" fill="#ece484"/><rect x="642.00" y="289.90" width="1.0" height="8.00" fill="#ece484"/><rect x="643.33" y="296.86" width="1.35" height="1.27" fill="#ece484"/><rect x="644.33" y="296.36" width="1.35" height="1.27" fill="#ece484"/><rect x="647.25" y="287.40" width="1.0" height="8.00" fill="#ff1010"/><rect x="648.50" y="285.00" width="1.0" height="4.00" fill="#1486f0"/><rect x="649.33" y="292.61" width="1.35" height="1.27" fill="#ece484"/><rect x="650.40" y="296.25" width="1.0" height="4.00" fill="#1486f0"/><rect x="651.62" y="300.40" width="1.25" height="2.00" fill="#ff1010"/><rect x="653.25" y="303.90" width="1.0" height="5.00" fill="#ece484"/><rect x="652.33" y="304.36" width="1.35" height="1.27" fill="#ece484"/><rect x="654.33" y="304.36" width="1.35" height="1.27" fill="#ece484"/><rect x="655.10" y="315.10" width="1.0" height="5.00" fill="#1486f0"/><rect x="656.00" y="318.00" width="1.0" height="4.00" fill="#1486f0"/><rect x="657.00" y="320.00" width="1.0" height="4.00" fill="#1486f0"/><rect x="658.90" y="304.50" width="1.0" height="10.00" fill="#ff1010"/><rect x="660.00" y="304.50" width="1.0" height="3.00" fill="#ff1010"/><rect x="661.23" y="297.61" width="1.35" height="1.27" fill="#ece484"/><rect x="661.83" y="304.15" width="1.35" height="1.70" fill="#ece484"/><rect x="660.33" y="304.15" width="1.35" height="1.70" fill="#ece484"/><rect x="664.10" y="296.75" width="1.0" height="8.00" fill="#ff1010"/><rect x="664.75" y="307.90" width="1.0" height="7.00" fill="#1486f0"/><rect x="665.50" y="317.90" width="1.0" height="7.00" fill="#1486f0"/><rect x="667.00" y="323.50" width="1.0" height="7.00" fill="#1486f0"/><rect x="667.70" y="324.00" width="1.0" height="6.00" fill="#ff1010"/><rect x="668.50" y="333.00" width="1.0" height="8.00" fill="#ff1010"/><rect x="669.38" y="332.00" width="1.25" height="2.00" fill="#ff1010"/><rect x="670.33" y="323.86" width="1.35" height="1.27" fill="#ece484"/><rect x="672.50" y="318.75" width="1.0" height="14.00" fill="#ff1010"/><rect x="674.08" y="323.86" width="1.35" height="1.27" fill="#ece484"/><rect x="673.50" y="317.50" width="1.0" height="3.00" fill="#ff1010"/><rect x="676.40" y="315.00" width="1.0" height="4.00" fill="#1486f0"/><rect x="678.00" y="310.60" width="1.0" height="4.00" fill="#ff1010"/><rect x="678.62" y="315.15" width="1.35" height="1.70" fill="#ece484"/><rect x="679.33" y="318.05" width="1.35" height="1.70" fill="#ece484"/><rect x="680.33" y="315.15" width="1.35" height="1.70" fill="#ece484"/><rect x="681.83" y="312.40" width="1.35" height="1.70" fill="#ece484"/><rect x="683.90" y="312.50" width="1.0" height="4.00" fill="#1486f0"/><rect x="685.10" y="311.00" width="1.0" height="8.00" fill="#ff1010"/><rect x="686.33" y="316.25" width="1.35" height="1.00" fill="#ece484"/><rect x="687.83" y="316.25" width="1.35" height="1.00" fill="#ece484"/><rect x="689.33" y="316.25" width="1.35" height="1.00" fill="#ece484"/><rect x="689.93" y="320.11" width="1.35" height="1.27" fill="#ece484"/><rect x="692.33" y="308.05" width="1.35" height="1.70" fill="#ece484"/><rect x="693.70" y="308.00" width="1.0" height="3.00" fill="#1486f0"/><rect x="694.75" y="305.60" width="1.0" height="4.00" fill="#ff1010"/><rect x="695.70" y="307.00" width="1.0" height="3.00" fill="#1486f0"/><rect x="697.33" y="307.61" width="1.35" height="1.27" fill="#ece484"/><rect x="698.53" y="305.36" width="1.35" height="1.27" fill="#ece484"/><rect x="699.50" y="302.40" width="1.0" height="3.00" fill="#ece484"/><rect x="701.58" y="306.36" width="1.35" height="1.27" fill="#ece484"/><rect x="703.25" y="297.40" width="1.0" height="3.00" fill="#1486f0"/><rect x="704.53" y="298.15" width="1.35" height="1.70" fill="#ece484"/><rect x="706.83" y="301.36" width="1.35" height="1.27" fill="#ece484"/><rect x="690.73" y="316.16" width="1.35" height="1.27" fill="#ece484"/><rect x="692.53" y="308.15" width="1.35" height="1.70" fill="#ece484"/><rect x="694.50" y="306.00" width="1.0" height="4.00" fill="#1486f0"/><rect x="695.00" y="304.00" width="1.0" height="3.00" fill="#ff1010"/><rect x="695.58" y="309.00" width="1.25" height="2.00" fill="#ff1010"/><rect x="697.12" y="308.15" width="1.35" height="1.70" fill="#ece484"/><rect x="699.10" y="301.50" width="1.0" height="4.00" fill="#ece484"/><rect x="701.23" y="306.56" width="1.35" height="1.27" fill="#ece484"/><rect x="703.25" y="297.40" width="1.0" height="4.00" fill="#1486f0"/><rect x="703.83" y="300.36" width="1.35" height="1.27" fill="#ece484"/><rect x="704.33" y="296.36" width="1.35" height="1.27" fill="#ece484"/><rect x="707.23" y="301.36" width="1.35" height="1.27" fill="#ece484"/><rect x="707.88" y="296.55" width="1.25" height="1.50" fill="#ff1010"/><rect x="708.30" y="298.00" width="1.0" height="7.00" fill="#1486f0"/><rect x="709.93" y="302.86" width="1.35" height="1.27" fill="#ece484"/><rect x="709.33" y="304.50" width="1.35" height="1.00" fill="#ece484"/><rect x="713.38" y="304.55" width="1.25" height="2.50" fill="#1486f0"/><rect x="716.30" y="297.80" width="1.0" height="4.00" fill="#ff1010"/><rect x="717.30" y="295.00" width="1.0" height="3.00" fill="#1486f0"/><rect x="718.33" y="294.50" width="1.35" height="1.00" fill="#ece484"/><rect x="719.30" y="298.30" width="1.0" height="4.00" fill="#1486f0"/><rect x="720.93" y="300.35" width="1.35" height="1.70" fill="#ece484"/><rect x="723.40" y="297.80" width="1.0" height="3.00" fill="#1486f0"/><rect x="724.20" y="300.90" width="1.0" height="8.00" fill="#1486f0"/><rect x="725.12" y="307.36" width="1.35" height="1.27" fill="#ece484"/><rect x="725.83" y="306.50" width="1.35" height="1.00" fill="#ece484"/><rect x="726.93" y="300.35" width="1.35" height="1.70" fill="#ece484"/><rect x="730.12" y="301.75" width="1.35" height="1.70" fill="#ece484"/><rect x="731.08" y="306.60" width="1.25" height="2.00" fill="#1486f0"/><rect x="732.83" y="294.16" width="1.35" height="1.27" fill="#ece484"/><rect x="734.33" y="293.15" width="1.35" height="1.70" fill="#ece484"/><rect x="735.40" y="291.90" width="1.0" height="3.00" fill="#ece484"/><rect x="737.53" y="289.75" width="1.35" height="1.70" fill="#ece484"/><rect x="738.50" y="292.80" width="1.0" height="4.00" fill="#1486f0"/><rect x="717.38" y="294.15" width="1.25" height="1.50" fill="#1486f0"/><rect x="739.25" y="282.00" width="1.0" height="10.00" fill="#ff1010"/><rect x="740.10" y="278.00" width="1.0" height="6.00" fill="#ff1010"/><rect x="740.75" y="274.25" width="1.0" height="5.00" fill="#ff1010"/><rect x="742.00" y="271.00" width="1.0" height="4.00" fill="#1486f0"/><rect x="740.93" y="272.65" width="1.35" height="1.70" fill="#ece484"/><rect x="743.33" y="277.75" width="1.35" height="1.70" fill="#ece484"/><rect x="744.50" y="273.50" width="1.0" height="3.00" fill="#1486f0"/><rect x="746.00" y="269.00" width="1.0" height="8.00" fill="#1486f0"/><rect x="747.50" y="266.60" width="1.0" height="4.00" fill="#ff1010"/><rect x="748.50" y="268.50" width="1.0" height="3.00" fill="#1486f0"/><rect x="750.10" y="267.50" width="1.0" height="7.00" fill="#ff1010"/><rect x="751.00" y="262.25" width="1.0" height="4.00" fill="#ece484"/><rect x="750.50" y="264.00" width="1.0" height="4.00" fill="#ff1010"/><rect x="752.00" y="257.40" width="1.0" height="5.00" fill="#ff1010"/><rect x="753.25" y="252.40" width="1.0" height="5.00" fill="#ff1010"/><rect x="753.90" y="249.00" width="1.0" height="4.00" fill="#ff1010"/><rect x="754.90" y="240.25" width="1.0" height="8.00" fill="#ff1010"/><rect x="755.70" y="240.50" width="1.0" height="6.00" fill="#1486f0"/><rect x="756.23" y="245.90" width="1.35" height="1.70" fill="#ece484"/><rect x="757.50" y="250.40" width="1.0" height="4.00" fill="#1486f0"/><rect x="758.90" y="253.50" width="1.0" height="4.00" fill="#ff1010"/><rect x="760.23" y="249.86" width="1.35" height="1.27" fill="#ece484"/><rect x="761.00" y="255.50" width="1.0" height="3.00" fill="#ece484"/><rect x="761.58" y="257.15" width="1.35" height="1.70" fill="#ece484"/><rect x="762.33" y="262.75" width="1.35" height="1.70" fill="#ece484"/><rect x="763.33" y="257.36" width="1.35" height="1.27" fill="#ece484"/><rect x="764.50" y="253.50" width="1.0" height="4.00" fill="#1486f0"/><rect x="765.75" y="249.00" width="1.0" height="8.00" fill="#1486f0"/><rect x="767.00" y="257.50" width="1.0" height="11.00" fill="#1486f0"/><rect x="768.77" y="260.00" width="1.25" height="2.00" fill="#ff1010"/><rect x="769.93" y="255.90" width="1.35" height="1.70" fill="#ece484"/><rect x="771.40" y="248.75" width="1.0" height="6.00" fill="#ff1010"/><rect x="774.73" y="256.11" width="1.35" height="1.27" fill="#ece484"/><rect x="776.23" y="250.15" width="1.35" height="1.70" fill="#ece484"/><rect x="777.33" y="250.50" width="1.35" height="1.00" fill="#ece484"/><rect x="779.33" y="252.36" width="1.35" height="1.27" fill="#ece484"/><rect x="780.83" y="252.50" width="1.35" height="1.00" fill="#ece484"/><rect x="782.83" y="253.40" width="1.35" height="1.70" fill="#ece484"/><rect x="783.83" y="251.36" width="1.35" height="1.27" fill="#ece484"/><rect x="784.98" y="249.50" width="1.25" height="2.00" fill="#ff1010"/><rect x="786.83" y="247.96" width="1.35" height="1.27" fill="#ece484"/><rect x="787.80" y="244.50" width="1.0" height="4.00" fill="#1486f0"/><rect x="788.50" y="240.75" width="1.0" height="7.00" fill="#1486f0"/><rect x="789.83" y="242.50" width="1.35" height="1.00" fill="#ece484"/><rect x="791.23" y="244.26" width="1.35" height="1.27" fill="#ece484"/><rect x="793.25" y="242.75" width="1.0" height="3.00" fill="#ff1010"/><rect x="794.93" y="245.90" width="1.35" height="1.70" fill="#ece484"/><rect x="795.75" y="250.25" width="1.0" height="3.00" fill="#1486f0"/><rect x="796.53" y="252.86" width="1.35" height="1.27" fill="#ece484"/><rect x="797.08" y="256.36" width="1.35" height="1.27" fill="#ece484"/><rect x="798.73" y="248.36" width="1.35" height="1.27" fill="#ece484"/><rect x="799.33" y="239.65" width="1.35" height="1.70" fill="#ece484"/><rect x="800.75" y="235.00" width="1.0" height="4.00" fill="#ff1010"/><rect x="800.00" y="238.00" width="1.0" height="3.00" fill="#ece484"/><rect x="802.08" y="242.36" width="1.35" height="1.27" fill="#ece484"/><rect x="804.38" y="234.70" width="1.25" height="2.00" fill="#ff1010"/><rect x="803.38" y="236.25" width="1.25" height="1.50" fill="#1486f0"/><rect x="806.40" y="236.50" width="1.0" height="6.00" fill="#ece484"/><rect x="806.88" y="235.00" width="1.25" height="2.00" fill="#1486f0"/><rect x="805.33" y="238.50" width="1.35" height="1.00" fill="#ece484"/><rect x="807.83" y="238.50" width="1.35" height="1.00" fill="#ece484"/><rect x="809.58" y="242.36" width="1.35" height="1.27" fill="#ece484"/><rect x="791.23" y="243.96" width="1.35" height="1.27" fill="#ece484"/><rect x="812.25" y="228.60" width="1.0" height="12.00" fill="#ff1010"/><rect x="812.00" y="235.00" width="1.0" height="6.00" fill="#ff1010"/><rect x="814.10" y="223.90" width="1.0" height="4.00" fill="#ece484"/><rect x="815.75" y="220.00" width="1.0" height="4.00" fill="#ff1010"/><rect x="815.53" y="221.65" width="1.35" height="1.70" fill="#ece484"/><rect x="817.00" y="212.40" width="1.0" height="7.00" fill="#ff1010"/><rect x="818.00" y="211.00" width="1.0" height="4.00" fill="#ff1010"/><rect x="818.90" y="210.00" width="1.0" height="3.00" fill="#ff1010"/><rect x="819.80" y="212.00" width="1.0" height="4.00" fill="#1486f0"/><rect x="820.50" y="211.75" width="1.0" height="7.00" fill="#1486f0"/><rect x="821.50" y="211.50" width="1.0" height="5.00" fill="#1486f0"/><rect x="820.17" y="216.00" width="1.25" height="2.00" fill="#ff1010"/><rect x="822.38" y="222.75" width="1.25" height="2.50" fill="#1486f0"/><rect x="823.33" y="224.36" width="1.35" height="1.27" fill="#ece484"/><rect x="825.58" y="232.11" width="1.35" height="1.27" fill="#ece484"/><rect x="826.40" y="223.75" width="1.0" height="8.00" fill="#ff1010"/><rect x="827.33" y="227.65" width="1.35" height="1.70" fill="#ece484"/><rect x="828.08" y="233.96" width="1.35" height="1.27" fill="#ece484"/><rect x="828.90" y="238.25" width="1.0" height="4.00" fill="#1486f0"/><rect x="830.10" y="238.50" width="1.0" height="3.00" fill="#ff1010"/><rect x="831.58" y="233.96" width="1.35" height="1.27" fill="#ece484"/><rect x="834.62" y="222.75" width="1.25" height="2.00" fill="#ff1010"/><rect x="835.83" y="224.00" width="1.35" height="1.00" fill="#ece484"/><rect x="837.88" y="220.25" width="1.25" height="2.50" fill="#1486f0"/><rect x="837.88" y="215.75" width="1.25" height="2.50" fill="#ff1010"/><rect x="839.33" y="223.96" width="1.35" height="1.27" fill="#ece484"/><rect x="839.88" y="218.75" width="1.25" height="1.50" fill="#1486f0"/><rect x="841.23" y="215.90" width="1.35" height="1.70" fill="#ece484"/><rect x="842.33" y="218.96" width="1.35" height="1.27" fill="#ece484"/><rect x="844.38" y="222.40" width="1.25" height="2.00" fill="#1486f0"/><rect x="845.83" y="214.86" width="1.35" height="1.27" fill="#ece484"/><rect x="848.77" y="224.00" width="1.25" height="2.50" fill="#1486f0"/><rect x="850.50" y="227.75" width="1.0" height="5.00" fill="#ece484"/><rect x="851.88" y="232.40" width="1.25" height="2.00" fill="#1486f0"/><rect x="855.33" y="230.15" width="1.35" height="1.70" fill="#ece484"/><rect x="857.12" y="229.65" width="1.35" height="1.70" fill="#ece484"/><rect x="856.88" y="234.65" width="1.25" height="2.50" fill="#1486f0"/><rect x="859.50" y="222.25" width="1.0" height="6.00" fill="#1486f0"/><rect x="860.33" y="226.36" width="1.35" height="1.27" fill="#ece484"/><rect x="861.58" y="227.76" width="1.35" height="1.27" fill="#ece484"/><rect x="862.33" y="233.96" width="1.35" height="1.27" fill="#ece484"/><rect x="864.08" y="236.86" width="1.35" height="1.27" fill="#ece484"/><rect x="865.33" y="236.86" width="1.35" height="1.27" fill="#ece484"/><rect x="864.12" y="238.75" width="1.25" height="2.50" fill="#ff1010"/><rect x="866.62" y="240.50" width="1.25" height="2.00" fill="#1486f0"/><rect x="867.33" y="240.50" width="1.35" height="1.00" fill="#ece484"/><rect x="871.27" y="244.50" width="1.25" height="2.00" fill="#ff1010"/><rect x="870.58" y="246.36" width="1.35" height="1.27" fill="#ece484"/><rect x="874.93" y="250.05" width="1.35" height="1.70" fill="#ece484"/><rect x="876.27" y="252.40" width="1.25" height="2.00" fill="#1486f0"/><rect x="878.00" y="242.40" width="1.0" height="12.00" fill="#1486f0"/><rect x="880.33" y="252.36" width="1.35" height="1.27" fill="#ece484"/><rect x="881.83" y="252.36" width="1.35" height="1.27" fill="#ece484"/><rect x="882.88" y="254.65" width="1.25" height="2.50" fill="#1486f0"/><rect x="883.83" y="256.36" width="1.35" height="1.27" fill="#ece484"/><rect x="885.33" y="252.11" width="1.35" height="1.27" fill="#ece484"/><rect x="887.33" y="253.96" width="1.35" height="1.27" fill="#ece484"/><rect x="899.98" y="248.60" width="1.25" height="2.00" fill="#ff1010"/><rect x="901.33" y="248.86" width="1.35" height="1.27" fill="#ece484"/><rect x="902.83" y="247.86" width="1.35" height="1.27" fill="#ece484"/><rect x="904.33" y="245.65" width="1.35" height="1.70" fill="#ece484"/><rect x="905.50" y="242.25" width="1.0" height="3.00" fill="#ff1010"/><rect x="906.83" y="240.05" width="1.35" height="1.70" fill="#ece484"/><rect x="907.83" y="238.11" width="1.35" height="1.27" fill="#ece484"/><rect x="909.08" y="240.26" width="1.35" height="1.27" fill="#ece484"/><rect x="910.10" y="242.40" width="1.0" height="7.00" fill="#1486f0"/><rect x="921.98" y="245.75" width="1.25" height="2.50" fill="#1486f0"/><rect x="921.03" y="248.76" width="1.35" height="1.27" fill="#ece484"/><rect x="922.83" y="248.76" width="1.35" height="1.27" fill="#ece484"/><rect x="924.90" y="248.30" width="1.0" height="4.00" fill="#ff1010"/><rect x="923.73" y="252.36" width="1.35" height="1.27" fill="#ece484"/><rect x="926.33" y="252.36" width="1.35" height="1.27" fill="#ece484"/><rect x="928.33" y="252.36" width="1.35" height="1.27" fill="#ece484"/><rect x="927.67" y="254.15" width="1.25" height="2.50" fill="#1486f0"/><rect x="930.62" y="249.66" width="1.35" height="1.27" fill="#ece484"/><rect x="931.53" y="255.90" width="1.35" height="1.70" fill="#ece484"/><rect x="932.53" y="252.15" width="1.35" height="1.70" fill="#ece484"/><rect x="935.77" y="248.65" width="1.25" height="2.50" fill="#ece484"/><rect x="936.33" y="248.36" width="1.35" height="1.27" fill="#ece484"/><rect x="938.33" y="253.76" width="1.35" height="1.27" fill="#ece484"/><rect x="940.33" y="256.15" width="1.35" height="1.70" fill="#ece484"/><rect x="941.83" y="256.15" width="1.35" height="1.70" fill="#ece484"/><rect x="944.83" y="256.15" width="1.35" height="1.70" fill="#ece484"/><rect x="946.83" y="256.15" width="1.35" height="1.70" fill="#ece484"/><rect x="950.33" y="256.15" width="1.35" height="1.70" fill="#ece484"/><rect x="951.33" y="253.76" width="1.35" height="1.27" fill="#ece484"/><rect x="952.62" y="257.96" width="1.35" height="1.27" fill="#ece484"/><rect x="956.88" y="258.25" width="1.25" height="2.50" fill="#1486f0"/><rect x="957.73" y="262.36" width="1.35" height="1.27" fill="#ece484"/><rect x="966.12" y="244.36" width="1.35" height="1.27" fill="#ece484"/><rect x="967.83" y="252.36" width="1.35" height="1.27" fill="#ece484"/></g>
<polyline points="6.25,416.60 7.17,416.15 8.10,417.90 9.40,419.00 10.60,417.25 11.90,422.25 13.10,421.60 14.00,407.25 14.75,412.25 15.25,426.00 16.07,428.46 16.90,432.25 18.10,427.90 18.93,428.00 19.75,428.50 21.25,418.50 22.25,415.40 23.10,423.50 24.40,424.00 25.00,427.25 25.95,427.69 26.90,427.90 28.10,431.00 29.40,432.90 30.60,437.90 31.90,439.75 33.10,436.00 34.00,429.75 35.25,422.25 36.25,416.00 37.50,409.75 38.75,416.60 40.00,418.50 41.25,413.50 42.17,410.16 43.10,407.25 44.40,411.00 45.60,406.60 46.55,407.00 47.50,406.60 48.75,411.00 50.00,414.10 51.50,410.40 52.30,410.48 53.10,411.60 54.40,409.75 55.60,401.00 56.55,399.90 57.50,399.10 58.75,404.75 60.00,416.00 61.00,408.50 62.25,404.75 63.50,409.75 64.75,412.25 66.00,418.50 67.25,413.50 68.50,416.00 69.00,422.25 70.60,424.75 71.90,428.50 72.83,429.43 73.75,428.50 74.67,429.09 75.60,432.25 76.55,433.36 77.50,435.40 78.33,435.73 79.17,436.04 80.00,437.25 81.25,439.10 82.50,436.00 83.75,439.10 85.25,434.75 86.25,426.00 87.17,424.20 88.10,425.40 89.40,422.90 90.33,423.10 91.25,424.10 92.75,419.75 93.58,422.31 94.40,424.10 95.33,420.73 96.25,418.50 97.17,417.27 98.10,415.40 99.05,417.75 100.00,420.40 100.95,422.01 101.90,422.25 102.83,420.26 103.75,418.50 104.67,415.52 105.60,413.50 106.55,411.44 107.50,407.25 108.45,404.18 109.40,399.75 110.25,404.75 111.25,412.25 112.50,411.00 114.00,402.25 115.60,401.60 116.55,404.01 117.50,404.75 118.75,406.60 119.67,404.33 120.60,401.00 121.55,399.44 122.50,397.25 123.45,397.39 124.40,397.90 125.90,394.75 126.83,396.14 127.75,395.40 129.00,391.60 129.95,389.33 130.90,386.60 131.82,387.27 132.75,388.50 133.68,387.27 134.60,386.60 135.43,384.75 136.25,383.50 137.10,387.90 138.15,388.73 139.20,387.45 140.25,387.90 141.08,387.45 141.92,387.45 142.75,387.90 143.68,389.65 144.60,391.60 145.43,388.55 146.25,383.50 147.10,387.90 148.40,391.00 149.60,396.00 150.90,392.25 151.82,390.27 152.75,389.75 154.00,394.75 155.00,398.50 155.90,394.75 157.10,396.00 158.40,398.50 159.60,396.60 160.90,398.50 161.82,395.95 162.75,396.00 164.25,397.90 165.07,400.38 165.90,404.10 166.73,403.10 167.57,403.00 168.40,403.50 169.60,401.00 170.43,398.00 171.25,396.60 172.10,402.90 173.40,407.25 174.32,407.95 175.25,409.75 176.18,410.64 177.10,412.90 178.05,412.85 179.00,413.50 180.25,418.50 180.90,422.25 182.10,416.00 183.40,410.40 184.32,412.07 185.25,412.90 186.08,414.18 186.92,413.10 187.75,414.10 188.68,411.75 189.60,407.90 190.50,412.25 191.50,419.10 192.50,414.75 193.75,410.40 195.25,415.40 196.18,415.52 197.10,416.60 198.05,417.73 199.00,419.10 199.95,417.43 200.90,415.40 201.73,414.81 202.57,413.12 203.40,412.90 204.32,413.32 205.25,415.40 206.18,417.12 207.10,417.90 208.05,419.95 209.00,421.60 209.95,420.10 210.90,418.50 212.10,417.25 213.40,421.60 214.32,420.57 215.25,420.40 216.18,420.90 217.10,422.90 218.40,428.50 219.60,434.75 220.90,432.25 222.10,426.00 223.05,423.57 224.00,422.90 225.50,424.10 226.50,431.00 226.75,442.25 227.75,431.00 228.68,432.10 229.60,431.60 230.55,431.79 231.50,429.75 232.45,425.94 233.40,423.50 234.32,420.57 235.25,418.50 236.50,423.50 237.45,425.31 238.40,427.25 239.32,426.25 240.25,427.25 241.50,425.40 242.75,433.50 244.00,438.50 244.83,438.35 245.67,439.73 246.50,439.10 247.45,437.77 248.40,436.00 249.60,434.75 250.25,428.10 251.50,433.75 253.00,436.25 254.25,442.50 255.18,438.69 256.10,436.25 257.00,442.50 257.80,444.70 258.60,445.00 259.55,443.58 260.50,443.10 261.45,439.95 262.40,435.60 263.60,445.00 264.55,445.17 265.50,444.40 266.45,440.90 267.40,438.10 268.60,449.40 269.55,451.16 270.50,453.75 271.45,455.74 272.40,457.50 273.60,456.25 274.90,465.00 275.70,463.48 276.50,461.90 277.55,462.20 278.60,465.00 279.43,462.04 280.25,461.25 281.75,453.75 283.00,448.10 283.95,446.41 284.90,446.25 286.10,441.25 287.40,433.75 288.60,428.10 289.90,432.50 290.82,432.07 291.75,430.00 293.25,424.40 294.25,420.00 295.25,432.50 296.75,426.25 297.68,425.12 298.60,423.75 299.90,419.40 300.82,419.77 301.75,419.40 303.00,425.00 303.95,427.65 304.90,430.00 305.70,432.55 306.50,434.40 308.00,431.25 308.60,437.50 309.90,428.10 310.82,426.05 311.75,425.60 313.25,429.40 314.07,431.12 314.90,434.40 315.70,437.60 316.50,440.00 318.00,433.75 318.83,433.22 319.67,433.11 320.50,433.10 321.33,434.69 322.17,435.11 323.00,435.60 323.83,437.12 324.67,437.43 325.50,437.50 326.45,442.02 327.40,444.40 328.60,441.25 329.90,446.25 330.70,446.26 331.50,447.50 333.00,455.00 333.95,453.21 334.90,451.25 335.82,453.84 336.75,457.50 337.68,457.80 338.60,456.90 339.55,455.90 340.50,455.00 341.45,458.26 342.40,461.25 343.32,463.62 344.25,466.25 345.18,463.62 346.10,461.25 347.40,456.25 348.20,458.89 349.00,462.50 350.05,460.79 351.10,458.75 351.93,458.16 352.77,456.47 353.60,456.25 354.55,454.15 355.50,453.75 356.45,451.00 357.40,448.75 358.60,446.25 359.50,449.40 360.30,443.90 361.10,440.00 362.05,437.75 363.00,435.00 363.95,432.85 364.90,430.60 365.82,430.64 366.75,431.25 368.00,426.90 369.25,429.40 370.18,427.50 371.10,425.00 372.05,422.29 373.00,418.75 373.50,418.10 374.30,420.38 375.10,423.10 375.93,424.81 376.77,425.44 377.60,426.90 378.68,423.07 379.75,420.00 380.57,423.07 381.40,426.90 382.20,425.12 383.00,423.10 384.25,426.90 385.12,424.66 386.00,421.25 387.00,418.01 388.00,415.60 388.95,413.27 389.90,412.50 391.40,418.10 392.32,421.98 393.25,424.40 394.38,423.23 395.50,423.10 397.00,426.90 397.95,427.98 398.90,429.40 399.73,427.87 400.57,425.86 401.40,425.00 402.20,427.50 403.00,429.40 404.25,434.40 405.75,435.00 407.25,442.50 408.50,437.50 409.30,437.12 410.10,435.00 411.05,437.60 412.00,439.40 412.83,438.70 413.67,438.70 414.50,439.40 415.45,436.01 416.40,433.75 417.20,436.01 418.00,439.40 419.50,434.40 420.45,434.45 421.40,432.50 422.32,433.64 423.25,436.25 424.18,437.75 425.10,438.75 426.05,438.54 427.00,439.40 428.50,435.00 429.30,432.70 430.10,430.00 430.93,432.23 431.75,433.10 432.60,439.40 433.90,442.50 435.10,436.25 436.40,430.60 437.20,430.80 438.00,431.90 439.50,424.40 441.00,423.10 441.80,421.81 442.60,418.75 443.90,416.90 445.10,422.50 446.40,428.75 447.23,428.17 448.07,428.06 448.90,428.10 449.82,427.49 450.75,426.25 451.68,427.96 452.60,430.00 453.90,427.50 454.75,434.40 456.00,440.00 456.80,439.34 457.60,436.25 458.55,433.79 459.50,433.10 460.45,431.91 461.40,428.75 462.60,422.50 463.25,409.40 464.25,421.25 464.75,431.25 465.57,434.91 466.40,437.50 467.20,433.64 468.00,431.25 468.88,428.59 469.75,427.50 470.57,425.12 471.40,422.50 472.20,418.18 473.00,415.00 474.50,411.25 475.45,411.56 476.40,410.00 477.32,409.82 478.25,409.40 479.25,416.90 480.50,426.90 482.00,422.50 482.95,423.38 483.90,425.60 484.82,425.59 485.75,426.25 487.00,416.90 488.50,410.00 489.30,412.65 490.10,415.60 491.40,421.25 492.20,418.34 493.00,416.90 494.05,419.45 495.10,420.60 496.05,418.18 497.00,416.90 497.90,415.00 498.70,412.50 499.50,410.00 500.75,418.75 502.00,415.60 503.50,418.10 505.00,421.25 506.25,426.90 507.50,433.75 508.30,435.69 509.10,438.10 510.40,450.60 511.25,440.00 512.50,432.50 513.30,431.92 514.10,429.40 515.05,427.98 516.00,426.90 516.95,427.02 517.90,425.60 518.83,424.50 519.75,421.90 520.67,420.07 521.60,418.10 522.42,419.29 523.25,418.75 524.75,412.50 525.75,410.00 527.00,416.90 528.25,423.75 529.50,428.75 530.75,432.50 532.00,426.25 532.90,423.10 534.10,426.90 535.40,433.10 536.60,428.75 537.50,437.50 538.50,442.50 539.50,432.50 540.40,420.60 541.60,424.40 542.90,420.00 543.70,419.45 544.50,417.50 546.00,424.40 547.25,419.40 548.17,417.55 549.10,415.60 550.05,414.70 551.00,413.10 552.00,417.50 552.90,426.25 553.75,432.50 554.75,425.00 555.67,426.88 556.60,426.90 557.55,427.35 558.50,426.90 559.45,425.91 560.40,426.25 561.20,428.44 562.00,431.90 563.50,427.50 565.00,422.50 565.80,424.35 566.60,424.40 567.55,425.29 568.50,426.25 570.00,427.50 571.00,436.90 571.95,433.95 572.90,433.10 573.70,433.62 574.50,435.60 575.75,440.00 577.25,433.75 578.50,437.50 579.33,437.33 580.17,436.92 581.00,435.00 581.95,435.70 582.90,436.90 583.70,435.55 584.50,434.40 586.00,430.60 587.00,438.10 588.50,439.40 589.75,443.75 591.00,447.50 592.25,442.50 593.50,437.50 594.33,435.74 595.17,433.73 596.00,433.10 596.95,435.06 597.90,436.25 598.73,437.23 599.57,437.34 600.40,436.90 601.33,433.17 602.25,430.00 603.17,428.43 604.10,428.10 605.05,425.43 606.00,423.10 606.95,424.52 607.90,424.50 609.30,431.50 610.10,430.24 610.90,428.75 611.50,441.25 612.50,456.25 614.00,465.00 615.50,468.00 616.30,466.59 617.10,466.25 618.40,455.00 619.25,448.10 620.25,456.25 621.50,451.90 622.45,451.00 623.40,450.60 624.33,448.31 625.25,446.25 626.08,445.64 626.92,445.33 627.75,444.40 629.00,449.40 630.25,452.50 631.75,460.00 632.75,463.75 634.25,458.75 635.08,456.05 635.90,453.75 637.10,451.90 638.40,460.00 639.20,461.10 640.00,462.50 641.50,466.90 643.00,460.00 644.25,454.40 645.38,454.96 646.50,453.75 647.75,460.00 648.75,465.00 649.60,458.75 650.90,448.75 652.10,441.25 652.92,436.64 653.75,434.40 655.25,430.00 656.50,423.10 658.00,417.50 659.00,410.00 659.60,420.00 660.90,432.50 661.75,442.50 662.50,450.60 663.38,448.62 664.25,447.50 665.50,440.00 666.75,431.25 667.75,423.75 669.00,424.40 669.60,415.60 670.90,422.50 672.10,425.00 673.40,421.25 674.25,426.25 675.25,417.50 676.25,413.10 677.50,421.25 679.00,420.00 680.25,427.50 681.50,432.50 683.00,422.50 683.80,418.95 684.60,418.10 685.50,427.50 686.50,435.00 687.75,427.50 689.00,423.10 690.50,426.90 691.50,428.75 692.50,423.75 693.75,431.25 695.25,434.40 695.90,442.50 696.50,455.00 697.50,451.25 698.75,457.50 700.00,462.50 701.50,465.00 702.45,464.90 703.40,462.50 704.33,461.10 705.25,460.00 706.50,457.50 707.50,447.50 708.40,438.75 709.60,446.25 710.50,437.50 711.75,436.25 712.75,428.10 714.00,418.75 714.95,417.55 715.90,416.25 717.10,422.50 718.00,426.25 718.88,425.75 719.75,427.02 720.62,428.30 721.50,426.25 722.50,418.75 724.00,412.50 725.50,409.40 726.50,409.98 727.50,410.60 728.75,418.75 729.60,423.75 731.10,418.75 731.92,414.71 732.75,410.00 733.60,421.25 734.50,436.25 735.75,436.25 736.75,425.00 737.67,422.60 738.60,420.00 739.42,422.29 740.25,423.75 741.10,432.50 742.00,441.25 742.80,442.64 743.60,443.10 744.55,444.05 745.50,446.90 746.45,447.39 747.40,446.25 748.60,453.75 749.55,453.06 750.50,451.90 751.75,456.25 752.67,456.21 753.60,456.90 754.90,462.50 755.83,464.10 756.75,466.90 757.67,465.69 758.60,463.75 759.55,459.51 760.50,457.50 761.45,457.48 762.40,455.60 763.33,453.52 764.25,451.90 765.17,451.16 766.10,451.25 766.92,453.21 767.75,455.00 769.25,460.00 770.17,461.73 771.10,465.00 772.05,466.46 773.00,468.75 773.95,468.05 774.90,466.25 776.10,461.90 777.05,462.54 778.00,461.25 779.50,453.75 780.75,461.25 782.00,457.50 783.00,448.10 784.25,455.00 785.17,453.52 786.10,452.50 787.05,452.43 788.00,450.60 788.95,453.05 789.90,455.00 790.70,453.38 791.50,451.90 792.38,451.16 793.25,451.25 794.08,453.84 794.90,457.50 796.10,465.00 797.40,453.75 798.60,445.60 799.90,453.75 801.10,463.75 802.25,467.25 803.75,468.50 805.00,474.75 806.25,477.25 807.50,474.75 809.00,480.40 809.80,483.55 810.60,486.00 811.55,486.07 812.50,485.40 813.50,492.25 814.40,499.75 815.60,505.40 816.90,507.90 818.10,507.25 819.00,512.90 819.80,514.16 820.60,514.75 821.90,519.75 822.75,509.75 823.75,496.60 825.25,493.50 826.50,489.10 827.75,484.10 829.00,477.90 830.00,469.10 831.00,474.10 832.50,477.25 833.75,480.40 835.00,478.50 836.00,492.25 836.90,503.50 837.70,506.27 838.50,507.90 840.00,501.00 841.50,502.90 842.30,499.80 843.10,497.90 844.40,494.75 845.25,489.10 846.08,493.01 846.90,494.75 847.83,496.64 848.75,498.50 850.00,486.00 850.95,483.85 851.90,481.60 852.83,481.01 853.75,479.75 855.25,478.50 856.50,482.90 857.30,484.32 858.10,486.60 859.00,491.60 859.80,489.21 860.60,487.25 861.90,491.60 862.70,487.48 863.50,485.40 865.00,476.60 866.50,484.10 867.50,479.75 869.00,486.00 869.80,486.07 870.60,485.40 871.42,483.07 872.25,479.10 873.75,482.90 874.67,481.34 875.60,479.75 876.42,476.75 877.25,474.75 878.75,479.75 880.25,486.00 881.08,481.33 881.90,476.60 882.95,473.90 884.00,471.60 885.25,476.00 886.25,482.90 887.25,492.25 888.10,496.00 889.40,489.75 890.20,488.59 891.00,486.60 892.50,491.00 894.00,487.25 895.25,481.60 896.08,480.23 896.90,476.60 898.10,482.90 898.92,483.86 899.75,484.75 900.67,488.59 901.60,491.60 902.55,487.48 903.50,485.40 904.45,488.45 905.40,490.40 906.20,491.90 907.00,494.10 908.05,493.95 909.10,493.50 910.40,487.25 911.60,476.00 912.90,471.60 913.83,472.65 914.75,471.60 916.00,468.50 917.50,472.90 918.30,473.92 919.10,475.40 920.40,477.90 921.33,477.88 922.25,476.00 923.17,478.34 924.10,479.75 925.00,477.25 926.00,486.00 927.00,487.90 928.25,477.25 929.10,472.25 930.40,476.60 931.60,479.75 932.90,474.75 934.10,479.75 934.92,482.61 935.75,482.90 937.00,487.25 938.50,493.50 939.75,486.60 941.25,482.90 942.38,481.34 943.50,479.75 944.45,478.34 945.40,476.00 946.60,480.40 947.42,481.18 948.25,481.60 949.50,486.00 951.00,481.60 951.95,481.80 952.90,482.90 954.10,486.00 955.15,486.23 956.20,486.23 957.25,486.00 958.25,477.90 959.75,476.00 960.67,476.27 961.60,476.60 962.42,478.65 963.25,480.40 964.50,476.00 966.00,478.50 967.00,484.75 967.50,493.50 968.25,498.50" fill="none" stroke="#ff0000" stroke-width="1.6" stroke-linejoin="round" stroke-linecap="round"/>
<circle cx="968.3" cy="498.6" r="1.3" fill="#ff0000"/>
<path d="M2 297.3 H84 Q86 297.3 86 299.3 V313.8 H2 Z" fill="#f3f3f3"/>
<text x="5.5" y="309.4" font-size="9.8" fill="#70707c" style="font-family:'Liberation Sans','IPAGothic',sans-serif" textLength="75.4" lengthAdjust="spacingAndGlyphs">javascript:CsvUrl();</text>
</svg></body></html>
